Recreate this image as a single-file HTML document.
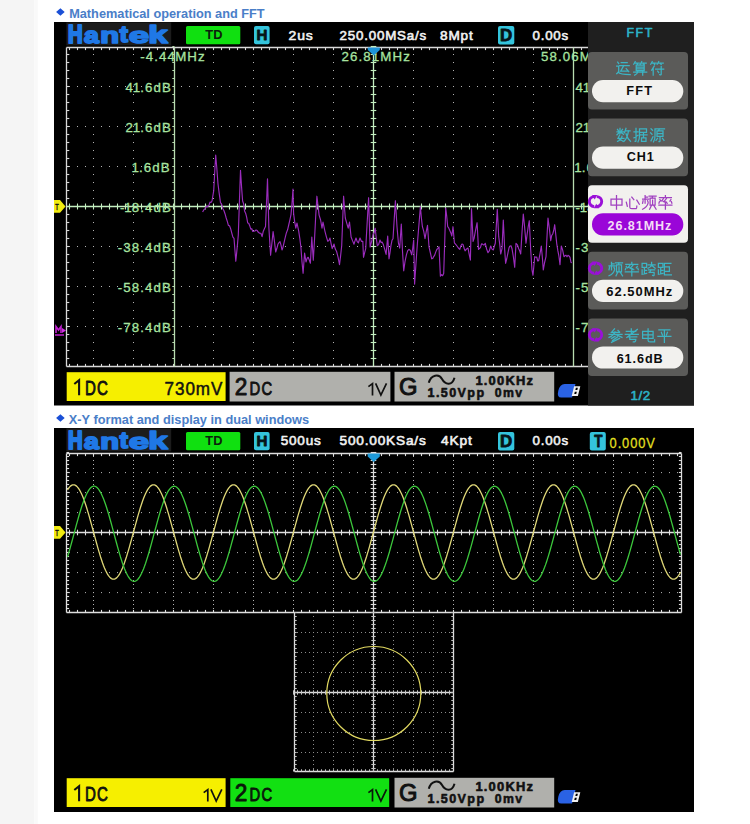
<!DOCTYPE html>
<html><head><meta charset="utf-8"><style>
html,body{margin:0;padding:0;background:#fff;width:750px;height:824px;overflow:hidden;position:relative;font-family:"Liberation Sans",sans-serif;}
</style></head><body>
<svg width="750" height="824" viewBox="0 0 750 824" style="position:absolute;left:0;top:0"><rect x="0.00" y="0.00" width="34.50" height="824.00" fill="#f5f5f5" />
<rect x="34.50" y="0.00" width="3.30" height="824.00" fill="#f9f9f9" />
<path d="M56.10 12.00 L60.40 8.20 L64.70 12.00 L60.40 15.80Z" fill="#1a4fd6"/>
<text x="0" y="0" transform="translate(69.15 17.90) scale(0.9340 1)" fill="#4a7ec8" style="font-family:'Liberation Sans';font-size:13.66px;font-weight:bold;" >Mathematical operation and FFT</text>
<path d="M56.10 418.00 L60.40 414.20 L64.70 418.00 L60.40 421.80Z" fill="#1a4fd6"/>
<text x="0" y="0" transform="translate(68.79 423.90) scale(0.9354 1)" fill="#4a7ec8" style="font-family:'Liberation Sans';font-size:13.66px;font-weight:bold;" >X-Y format and display in dual windows</text>
<rect x="54.00" y="22.00" width="640.00" height="383.50" fill="#000" />
<rect x="66.40" y="22.40" width="104.80" height="23.00" fill="#1c1c1c" />
<text x="0" y="0" transform="translate(68.05 42.50) scale(0.2024 0.2486)" fill="#1f78e6" style="font-family:'Liberation Sans';font-size:100.0px;font-weight:bold" stroke="#1f78e6" stroke-width="8.870" stroke-linejoin="round">H</text>
<text x="0" y="0" transform="translate(84.02 42.58) scale(0.2663 0.2282)" fill="#1f78e6" style="font-family:'Liberation Sans';font-size:100.0px;font-weight:bold" stroke="#1f78e6" stroke-width="8.089" stroke-linejoin="round">a</text>
<text x="0" y="0" transform="translate(100.37 42.50) scale(0.3085 0.2228)" fill="#1f78e6" style="font-family:'Liberation Sans';font-size:100.0px;font-weight:bold" stroke="#1f78e6" stroke-width="7.528" stroke-linejoin="round">n</text>
<text x="0" y="0" transform="translate(119.70 42.31) scale(0.2430 0.2118)" fill="#1f78e6" style="font-family:'Liberation Sans';font-size:100.0px;font-weight:bold" stroke="#1f78e6" stroke-width="8.795" stroke-linejoin="round">t</text>
<text x="0" y="0" transform="translate(128.87 42.58) scale(0.3665 0.2282)" fill="#1f78e6" style="font-family:'Liberation Sans';font-size:100.0px;font-weight:bold" stroke="#1f78e6" stroke-width="6.726" stroke-linejoin="round">e</text>
<text x="0" y="0" transform="translate(148.36 42.50) scale(0.3489 0.2360)" fill="#1f78e6" style="font-family:'Liberation Sans';font-size:100.0px;font-weight:bold" stroke="#1f78e6" stroke-width="6.839" stroke-linejoin="round">k</text>
<rect x="186.00" y="26.00" width="54.30" height="18.30" fill="#10e010" rx="1.5" />
<text x="0" y="0" transform="translate(205.16 39.30) scale(0.9489 1)" fill="#0c200c" style="font-family:'Liberation Sans';font-size:13.52px;font-weight:bold;letter-spacing:0.3px;" >TD</text>
<rect x="254.00" y="26.00" width="15.60" height="18.20" fill="#34c4dc" rx="2" />
<text x="0" y="0" transform="translate(256.39 39.80) scale(1.0103 1)" fill="#061418" style="font-family:'Liberation Sans';font-size:14.97px;font-weight:bold;" stroke="#061418" stroke-width="0.8" stroke-linejoin="round" >H</text>
<rect x="498.00" y="26.00" width="16.30" height="18.40" fill="#34c4dc" rx="2" />
<text x="0" y="0" transform="translate(499.96 40.70) scale(0.9895 1)" fill="#061418" style="font-family:'Liberation Sans';font-size:17.15px;font-weight:bold;" stroke="#061418" stroke-width="0.8" stroke-linejoin="round" >D</text>
<text x="0" y="0" transform="translate(288.60 39.55) scale(1.0239 1)" fill="#f2f2f2" style="font-family:'Liberation Sans';font-size:13.66px;font-weight:normal;letter-spacing:0.8px;" stroke="#f2f2f2" stroke-width="0.6" stroke-linejoin="round" >2us</text>
<text x="0" y="0" transform="translate(339.62 39.55) scale(0.9781 1)" fill="#f2f2f2" style="font-family:'Liberation Sans';font-size:13.66px;font-weight:normal;letter-spacing:0.8px;" stroke="#f2f2f2" stroke-width="0.6" stroke-linejoin="round" >250.00MSa/s</text>
<text x="0" y="0" transform="translate(440.11 39.55) scale(0.9975 1)" fill="#f2f2f2" style="font-family:'Liberation Sans';font-size:13.66px;font-weight:normal;letter-spacing:0.8px;" stroke="#f2f2f2" stroke-width="0.6" stroke-linejoin="round" >8Mpt</text>
<text x="0" y="0" transform="translate(532.47 39.55) scale(0.9752 1)" fill="#f2f2f2" style="font-family:'Liberation Sans';font-size:13.66px;font-weight:normal;letter-spacing:0.8px;" stroke="#f2f2f2" stroke-width="0.6" stroke-linejoin="round" >0.00s</text>
<rect x="69.00" y="86.00" width="1.00" height="1.00" fill="#b4b4b4" />
<rect x="77.00" y="86.00" width="1.00" height="1.00" fill="#b4b4b4" />
<rect x="85.00" y="86.00" width="1.00" height="1.00" fill="#b4b4b4" />
<rect x="93.00" y="86.00" width="1.00" height="1.00" fill="#b4b4b4" />
<rect x="101.00" y="86.00" width="1.00" height="1.00" fill="#b4b4b4" />
<rect x="109.00" y="86.00" width="1.00" height="1.00" fill="#b4b4b4" />
<rect x="117.00" y="86.00" width="1.00" height="1.00" fill="#b4b4b4" />
<rect x="125.00" y="86.00" width="1.00" height="1.00" fill="#b4b4b4" />
<rect x="133.00" y="86.00" width="1.00" height="1.00" fill="#b4b4b4" />
<rect x="141.00" y="86.00" width="1.00" height="1.00" fill="#b4b4b4" />
<rect x="149.00" y="86.00" width="1.00" height="1.00" fill="#b4b4b4" />
<rect x="157.00" y="86.00" width="1.00" height="1.00" fill="#b4b4b4" />
<rect x="165.00" y="86.00" width="1.00" height="1.00" fill="#b4b4b4" />
<rect x="173.00" y="86.00" width="1.00" height="1.00" fill="#b4b4b4" />
<rect x="181.00" y="86.00" width="1.00" height="1.00" fill="#b4b4b4" />
<rect x="189.00" y="86.00" width="1.00" height="1.00" fill="#b4b4b4" />
<rect x="197.00" y="86.00" width="1.00" height="1.00" fill="#b4b4b4" />
<rect x="205.00" y="86.00" width="1.00" height="1.00" fill="#b4b4b4" />
<rect x="213.00" y="86.00" width="1.00" height="1.00" fill="#b4b4b4" />
<rect x="221.00" y="86.00" width="1.00" height="1.00" fill="#b4b4b4" />
<rect x="229.00" y="86.00" width="1.00" height="1.00" fill="#b4b4b4" />
<rect x="237.00" y="86.00" width="1.00" height="1.00" fill="#b4b4b4" />
<rect x="245.00" y="86.00" width="1.00" height="1.00" fill="#b4b4b4" />
<rect x="253.00" y="86.00" width="1.00" height="1.00" fill="#b4b4b4" />
<rect x="261.00" y="86.00" width="1.00" height="1.00" fill="#b4b4b4" />
<rect x="269.00" y="86.00" width="1.00" height="1.00" fill="#b4b4b4" />
<rect x="277.00" y="86.00" width="1.00" height="1.00" fill="#b4b4b4" />
<rect x="285.00" y="86.00" width="1.00" height="1.00" fill="#b4b4b4" />
<rect x="293.00" y="86.00" width="1.00" height="1.00" fill="#b4b4b4" />
<rect x="301.00" y="86.00" width="1.00" height="1.00" fill="#b4b4b4" />
<rect x="309.00" y="86.00" width="1.00" height="1.00" fill="#b4b4b4" />
<rect x="317.00" y="86.00" width="1.00" height="1.00" fill="#b4b4b4" />
<rect x="325.00" y="86.00" width="1.00" height="1.00" fill="#b4b4b4" />
<rect x="333.00" y="86.00" width="1.00" height="1.00" fill="#b4b4b4" />
<rect x="341.00" y="86.00" width="1.00" height="1.00" fill="#b4b4b4" />
<rect x="349.00" y="86.00" width="1.00" height="1.00" fill="#b4b4b4" />
<rect x="357.00" y="86.00" width="1.00" height="1.00" fill="#b4b4b4" />
<rect x="365.00" y="86.00" width="1.00" height="1.00" fill="#b4b4b4" />
<rect x="373.00" y="86.00" width="1.00" height="1.00" fill="#b4b4b4" />
<rect x="381.00" y="86.00" width="1.00" height="1.00" fill="#b4b4b4" />
<rect x="389.00" y="86.00" width="1.00" height="1.00" fill="#b4b4b4" />
<rect x="397.00" y="86.00" width="1.00" height="1.00" fill="#b4b4b4" />
<rect x="405.00" y="86.00" width="1.00" height="1.00" fill="#b4b4b4" />
<rect x="413.00" y="86.00" width="1.00" height="1.00" fill="#b4b4b4" />
<rect x="421.00" y="86.00" width="1.00" height="1.00" fill="#b4b4b4" />
<rect x="429.00" y="86.00" width="1.00" height="1.00" fill="#b4b4b4" />
<rect x="437.00" y="86.00" width="1.00" height="1.00" fill="#b4b4b4" />
<rect x="445.00" y="86.00" width="1.00" height="1.00" fill="#b4b4b4" />
<rect x="453.00" y="86.00" width="1.00" height="1.00" fill="#b4b4b4" />
<rect x="461.00" y="86.00" width="1.00" height="1.00" fill="#b4b4b4" />
<rect x="469.00" y="86.00" width="1.00" height="1.00" fill="#b4b4b4" />
<rect x="477.00" y="86.00" width="1.00" height="1.00" fill="#b4b4b4" />
<rect x="485.00" y="86.00" width="1.00" height="1.00" fill="#b4b4b4" />
<rect x="493.00" y="86.00" width="1.00" height="1.00" fill="#b4b4b4" />
<rect x="501.00" y="86.00" width="1.00" height="1.00" fill="#b4b4b4" />
<rect x="509.00" y="86.00" width="1.00" height="1.00" fill="#b4b4b4" />
<rect x="517.00" y="86.00" width="1.00" height="1.00" fill="#b4b4b4" />
<rect x="525.00" y="86.00" width="1.00" height="1.00" fill="#b4b4b4" />
<rect x="533.00" y="86.00" width="1.00" height="1.00" fill="#b4b4b4" />
<rect x="541.00" y="86.00" width="1.00" height="1.00" fill="#b4b4b4" />
<rect x="549.00" y="86.00" width="1.00" height="1.00" fill="#b4b4b4" />
<rect x="557.00" y="86.00" width="1.00" height="1.00" fill="#b4b4b4" />
<rect x="565.00" y="86.00" width="1.00" height="1.00" fill="#b4b4b4" />
<rect x="69.00" y="126.00" width="1.00" height="1.00" fill="#b4b4b4" />
<rect x="77.00" y="126.00" width="1.00" height="1.00" fill="#b4b4b4" />
<rect x="85.00" y="126.00" width="1.00" height="1.00" fill="#b4b4b4" />
<rect x="93.00" y="126.00" width="1.00" height="1.00" fill="#b4b4b4" />
<rect x="101.00" y="126.00" width="1.00" height="1.00" fill="#b4b4b4" />
<rect x="109.00" y="126.00" width="1.00" height="1.00" fill="#b4b4b4" />
<rect x="117.00" y="126.00" width="1.00" height="1.00" fill="#b4b4b4" />
<rect x="125.00" y="126.00" width="1.00" height="1.00" fill="#b4b4b4" />
<rect x="133.00" y="126.00" width="1.00" height="1.00" fill="#b4b4b4" />
<rect x="141.00" y="126.00" width="1.00" height="1.00" fill="#b4b4b4" />
<rect x="149.00" y="126.00" width="1.00" height="1.00" fill="#b4b4b4" />
<rect x="157.00" y="126.00" width="1.00" height="1.00" fill="#b4b4b4" />
<rect x="165.00" y="126.00" width="1.00" height="1.00" fill="#b4b4b4" />
<rect x="173.00" y="126.00" width="1.00" height="1.00" fill="#b4b4b4" />
<rect x="181.00" y="126.00" width="1.00" height="1.00" fill="#b4b4b4" />
<rect x="189.00" y="126.00" width="1.00" height="1.00" fill="#b4b4b4" />
<rect x="197.00" y="126.00" width="1.00" height="1.00" fill="#b4b4b4" />
<rect x="205.00" y="126.00" width="1.00" height="1.00" fill="#b4b4b4" />
<rect x="213.00" y="126.00" width="1.00" height="1.00" fill="#b4b4b4" />
<rect x="221.00" y="126.00" width="1.00" height="1.00" fill="#b4b4b4" />
<rect x="229.00" y="126.00" width="1.00" height="1.00" fill="#b4b4b4" />
<rect x="237.00" y="126.00" width="1.00" height="1.00" fill="#b4b4b4" />
<rect x="245.00" y="126.00" width="1.00" height="1.00" fill="#b4b4b4" />
<rect x="253.00" y="126.00" width="1.00" height="1.00" fill="#b4b4b4" />
<rect x="261.00" y="126.00" width="1.00" height="1.00" fill="#b4b4b4" />
<rect x="269.00" y="126.00" width="1.00" height="1.00" fill="#b4b4b4" />
<rect x="277.00" y="126.00" width="1.00" height="1.00" fill="#b4b4b4" />
<rect x="285.00" y="126.00" width="1.00" height="1.00" fill="#b4b4b4" />
<rect x="293.00" y="126.00" width="1.00" height="1.00" fill="#b4b4b4" />
<rect x="301.00" y="126.00" width="1.00" height="1.00" fill="#b4b4b4" />
<rect x="309.00" y="126.00" width="1.00" height="1.00" fill="#b4b4b4" />
<rect x="317.00" y="126.00" width="1.00" height="1.00" fill="#b4b4b4" />
<rect x="325.00" y="126.00" width="1.00" height="1.00" fill="#b4b4b4" />
<rect x="333.00" y="126.00" width="1.00" height="1.00" fill="#b4b4b4" />
<rect x="341.00" y="126.00" width="1.00" height="1.00" fill="#b4b4b4" />
<rect x="349.00" y="126.00" width="1.00" height="1.00" fill="#b4b4b4" />
<rect x="357.00" y="126.00" width="1.00" height="1.00" fill="#b4b4b4" />
<rect x="365.00" y="126.00" width="1.00" height="1.00" fill="#b4b4b4" />
<rect x="373.00" y="126.00" width="1.00" height="1.00" fill="#b4b4b4" />
<rect x="381.00" y="126.00" width="1.00" height="1.00" fill="#b4b4b4" />
<rect x="389.00" y="126.00" width="1.00" height="1.00" fill="#b4b4b4" />
<rect x="397.00" y="126.00" width="1.00" height="1.00" fill="#b4b4b4" />
<rect x="405.00" y="126.00" width="1.00" height="1.00" fill="#b4b4b4" />
<rect x="413.00" y="126.00" width="1.00" height="1.00" fill="#b4b4b4" />
<rect x="421.00" y="126.00" width="1.00" height="1.00" fill="#b4b4b4" />
<rect x="429.00" y="126.00" width="1.00" height="1.00" fill="#b4b4b4" />
<rect x="437.00" y="126.00" width="1.00" height="1.00" fill="#b4b4b4" />
<rect x="445.00" y="126.00" width="1.00" height="1.00" fill="#b4b4b4" />
<rect x="453.00" y="126.00" width="1.00" height="1.00" fill="#b4b4b4" />
<rect x="461.00" y="126.00" width="1.00" height="1.00" fill="#b4b4b4" />
<rect x="469.00" y="126.00" width="1.00" height="1.00" fill="#b4b4b4" />
<rect x="477.00" y="126.00" width="1.00" height="1.00" fill="#b4b4b4" />
<rect x="485.00" y="126.00" width="1.00" height="1.00" fill="#b4b4b4" />
<rect x="493.00" y="126.00" width="1.00" height="1.00" fill="#b4b4b4" />
<rect x="501.00" y="126.00" width="1.00" height="1.00" fill="#b4b4b4" />
<rect x="509.00" y="126.00" width="1.00" height="1.00" fill="#b4b4b4" />
<rect x="517.00" y="126.00" width="1.00" height="1.00" fill="#b4b4b4" />
<rect x="525.00" y="126.00" width="1.00" height="1.00" fill="#b4b4b4" />
<rect x="533.00" y="126.00" width="1.00" height="1.00" fill="#b4b4b4" />
<rect x="541.00" y="126.00" width="1.00" height="1.00" fill="#b4b4b4" />
<rect x="549.00" y="126.00" width="1.00" height="1.00" fill="#b4b4b4" />
<rect x="557.00" y="126.00" width="1.00" height="1.00" fill="#b4b4b4" />
<rect x="565.00" y="126.00" width="1.00" height="1.00" fill="#b4b4b4" />
<rect x="69.00" y="166.00" width="1.00" height="1.00" fill="#b4b4b4" />
<rect x="77.00" y="166.00" width="1.00" height="1.00" fill="#b4b4b4" />
<rect x="85.00" y="166.00" width="1.00" height="1.00" fill="#b4b4b4" />
<rect x="93.00" y="166.00" width="1.00" height="1.00" fill="#b4b4b4" />
<rect x="101.00" y="166.00" width="1.00" height="1.00" fill="#b4b4b4" />
<rect x="109.00" y="166.00" width="1.00" height="1.00" fill="#b4b4b4" />
<rect x="117.00" y="166.00" width="1.00" height="1.00" fill="#b4b4b4" />
<rect x="125.00" y="166.00" width="1.00" height="1.00" fill="#b4b4b4" />
<rect x="133.00" y="166.00" width="1.00" height="1.00" fill="#b4b4b4" />
<rect x="141.00" y="166.00" width="1.00" height="1.00" fill="#b4b4b4" />
<rect x="149.00" y="166.00" width="1.00" height="1.00" fill="#b4b4b4" />
<rect x="157.00" y="166.00" width="1.00" height="1.00" fill="#b4b4b4" />
<rect x="165.00" y="166.00" width="1.00" height="1.00" fill="#b4b4b4" />
<rect x="173.00" y="166.00" width="1.00" height="1.00" fill="#b4b4b4" />
<rect x="181.00" y="166.00" width="1.00" height="1.00" fill="#b4b4b4" />
<rect x="189.00" y="166.00" width="1.00" height="1.00" fill="#b4b4b4" />
<rect x="197.00" y="166.00" width="1.00" height="1.00" fill="#b4b4b4" />
<rect x="205.00" y="166.00" width="1.00" height="1.00" fill="#b4b4b4" />
<rect x="213.00" y="166.00" width="1.00" height="1.00" fill="#b4b4b4" />
<rect x="221.00" y="166.00" width="1.00" height="1.00" fill="#b4b4b4" />
<rect x="229.00" y="166.00" width="1.00" height="1.00" fill="#b4b4b4" />
<rect x="237.00" y="166.00" width="1.00" height="1.00" fill="#b4b4b4" />
<rect x="245.00" y="166.00" width="1.00" height="1.00" fill="#b4b4b4" />
<rect x="253.00" y="166.00" width="1.00" height="1.00" fill="#b4b4b4" />
<rect x="261.00" y="166.00" width="1.00" height="1.00" fill="#b4b4b4" />
<rect x="269.00" y="166.00" width="1.00" height="1.00" fill="#b4b4b4" />
<rect x="277.00" y="166.00" width="1.00" height="1.00" fill="#b4b4b4" />
<rect x="285.00" y="166.00" width="1.00" height="1.00" fill="#b4b4b4" />
<rect x="293.00" y="166.00" width="1.00" height="1.00" fill="#b4b4b4" />
<rect x="301.00" y="166.00" width="1.00" height="1.00" fill="#b4b4b4" />
<rect x="309.00" y="166.00" width="1.00" height="1.00" fill="#b4b4b4" />
<rect x="317.00" y="166.00" width="1.00" height="1.00" fill="#b4b4b4" />
<rect x="325.00" y="166.00" width="1.00" height="1.00" fill="#b4b4b4" />
<rect x="333.00" y="166.00" width="1.00" height="1.00" fill="#b4b4b4" />
<rect x="341.00" y="166.00" width="1.00" height="1.00" fill="#b4b4b4" />
<rect x="349.00" y="166.00" width="1.00" height="1.00" fill="#b4b4b4" />
<rect x="357.00" y="166.00" width="1.00" height="1.00" fill="#b4b4b4" />
<rect x="365.00" y="166.00" width="1.00" height="1.00" fill="#b4b4b4" />
<rect x="373.00" y="166.00" width="1.00" height="1.00" fill="#b4b4b4" />
<rect x="381.00" y="166.00" width="1.00" height="1.00" fill="#b4b4b4" />
<rect x="389.00" y="166.00" width="1.00" height="1.00" fill="#b4b4b4" />
<rect x="397.00" y="166.00" width="1.00" height="1.00" fill="#b4b4b4" />
<rect x="405.00" y="166.00" width="1.00" height="1.00" fill="#b4b4b4" />
<rect x="413.00" y="166.00" width="1.00" height="1.00" fill="#b4b4b4" />
<rect x="421.00" y="166.00" width="1.00" height="1.00" fill="#b4b4b4" />
<rect x="429.00" y="166.00" width="1.00" height="1.00" fill="#b4b4b4" />
<rect x="437.00" y="166.00" width="1.00" height="1.00" fill="#b4b4b4" />
<rect x="445.00" y="166.00" width="1.00" height="1.00" fill="#b4b4b4" />
<rect x="453.00" y="166.00" width="1.00" height="1.00" fill="#b4b4b4" />
<rect x="461.00" y="166.00" width="1.00" height="1.00" fill="#b4b4b4" />
<rect x="469.00" y="166.00" width="1.00" height="1.00" fill="#b4b4b4" />
<rect x="477.00" y="166.00" width="1.00" height="1.00" fill="#b4b4b4" />
<rect x="485.00" y="166.00" width="1.00" height="1.00" fill="#b4b4b4" />
<rect x="493.00" y="166.00" width="1.00" height="1.00" fill="#b4b4b4" />
<rect x="501.00" y="166.00" width="1.00" height="1.00" fill="#b4b4b4" />
<rect x="509.00" y="166.00" width="1.00" height="1.00" fill="#b4b4b4" />
<rect x="517.00" y="166.00" width="1.00" height="1.00" fill="#b4b4b4" />
<rect x="525.00" y="166.00" width="1.00" height="1.00" fill="#b4b4b4" />
<rect x="533.00" y="166.00" width="1.00" height="1.00" fill="#b4b4b4" />
<rect x="541.00" y="166.00" width="1.00" height="1.00" fill="#b4b4b4" />
<rect x="549.00" y="166.00" width="1.00" height="1.00" fill="#b4b4b4" />
<rect x="557.00" y="166.00" width="1.00" height="1.00" fill="#b4b4b4" />
<rect x="565.00" y="166.00" width="1.00" height="1.00" fill="#b4b4b4" />
<rect x="69.00" y="246.00" width="1.00" height="1.00" fill="#b4b4b4" />
<rect x="77.00" y="246.00" width="1.00" height="1.00" fill="#b4b4b4" />
<rect x="85.00" y="246.00" width="1.00" height="1.00" fill="#b4b4b4" />
<rect x="93.00" y="246.00" width="1.00" height="1.00" fill="#b4b4b4" />
<rect x="101.00" y="246.00" width="1.00" height="1.00" fill="#b4b4b4" />
<rect x="109.00" y="246.00" width="1.00" height="1.00" fill="#b4b4b4" />
<rect x="117.00" y="246.00" width="1.00" height="1.00" fill="#b4b4b4" />
<rect x="125.00" y="246.00" width="1.00" height="1.00" fill="#b4b4b4" />
<rect x="133.00" y="246.00" width="1.00" height="1.00" fill="#b4b4b4" />
<rect x="141.00" y="246.00" width="1.00" height="1.00" fill="#b4b4b4" />
<rect x="149.00" y="246.00" width="1.00" height="1.00" fill="#b4b4b4" />
<rect x="157.00" y="246.00" width="1.00" height="1.00" fill="#b4b4b4" />
<rect x="165.00" y="246.00" width="1.00" height="1.00" fill="#b4b4b4" />
<rect x="173.00" y="246.00" width="1.00" height="1.00" fill="#b4b4b4" />
<rect x="181.00" y="246.00" width="1.00" height="1.00" fill="#b4b4b4" />
<rect x="189.00" y="246.00" width="1.00" height="1.00" fill="#b4b4b4" />
<rect x="197.00" y="246.00" width="1.00" height="1.00" fill="#b4b4b4" />
<rect x="205.00" y="246.00" width="1.00" height="1.00" fill="#b4b4b4" />
<rect x="213.00" y="246.00" width="1.00" height="1.00" fill="#b4b4b4" />
<rect x="221.00" y="246.00" width="1.00" height="1.00" fill="#b4b4b4" />
<rect x="229.00" y="246.00" width="1.00" height="1.00" fill="#b4b4b4" />
<rect x="237.00" y="246.00" width="1.00" height="1.00" fill="#b4b4b4" />
<rect x="245.00" y="246.00" width="1.00" height="1.00" fill="#b4b4b4" />
<rect x="253.00" y="246.00" width="1.00" height="1.00" fill="#b4b4b4" />
<rect x="261.00" y="246.00" width="1.00" height="1.00" fill="#b4b4b4" />
<rect x="269.00" y="246.00" width="1.00" height="1.00" fill="#b4b4b4" />
<rect x="277.00" y="246.00" width="1.00" height="1.00" fill="#b4b4b4" />
<rect x="285.00" y="246.00" width="1.00" height="1.00" fill="#b4b4b4" />
<rect x="293.00" y="246.00" width="1.00" height="1.00" fill="#b4b4b4" />
<rect x="301.00" y="246.00" width="1.00" height="1.00" fill="#b4b4b4" />
<rect x="309.00" y="246.00" width="1.00" height="1.00" fill="#b4b4b4" />
<rect x="317.00" y="246.00" width="1.00" height="1.00" fill="#b4b4b4" />
<rect x="325.00" y="246.00" width="1.00" height="1.00" fill="#b4b4b4" />
<rect x="333.00" y="246.00" width="1.00" height="1.00" fill="#b4b4b4" />
<rect x="341.00" y="246.00" width="1.00" height="1.00" fill="#b4b4b4" />
<rect x="349.00" y="246.00" width="1.00" height="1.00" fill="#b4b4b4" />
<rect x="357.00" y="246.00" width="1.00" height="1.00" fill="#b4b4b4" />
<rect x="365.00" y="246.00" width="1.00" height="1.00" fill="#b4b4b4" />
<rect x="373.00" y="246.00" width="1.00" height="1.00" fill="#b4b4b4" />
<rect x="381.00" y="246.00" width="1.00" height="1.00" fill="#b4b4b4" />
<rect x="389.00" y="246.00" width="1.00" height="1.00" fill="#b4b4b4" />
<rect x="397.00" y="246.00" width="1.00" height="1.00" fill="#b4b4b4" />
<rect x="405.00" y="246.00" width="1.00" height="1.00" fill="#b4b4b4" />
<rect x="413.00" y="246.00" width="1.00" height="1.00" fill="#b4b4b4" />
<rect x="421.00" y="246.00" width="1.00" height="1.00" fill="#b4b4b4" />
<rect x="429.00" y="246.00" width="1.00" height="1.00" fill="#b4b4b4" />
<rect x="437.00" y="246.00" width="1.00" height="1.00" fill="#b4b4b4" />
<rect x="445.00" y="246.00" width="1.00" height="1.00" fill="#b4b4b4" />
<rect x="453.00" y="246.00" width="1.00" height="1.00" fill="#b4b4b4" />
<rect x="461.00" y="246.00" width="1.00" height="1.00" fill="#b4b4b4" />
<rect x="469.00" y="246.00" width="1.00" height="1.00" fill="#b4b4b4" />
<rect x="477.00" y="246.00" width="1.00" height="1.00" fill="#b4b4b4" />
<rect x="485.00" y="246.00" width="1.00" height="1.00" fill="#b4b4b4" />
<rect x="493.00" y="246.00" width="1.00" height="1.00" fill="#b4b4b4" />
<rect x="501.00" y="246.00" width="1.00" height="1.00" fill="#b4b4b4" />
<rect x="509.00" y="246.00" width="1.00" height="1.00" fill="#b4b4b4" />
<rect x="517.00" y="246.00" width="1.00" height="1.00" fill="#b4b4b4" />
<rect x="525.00" y="246.00" width="1.00" height="1.00" fill="#b4b4b4" />
<rect x="533.00" y="246.00" width="1.00" height="1.00" fill="#b4b4b4" />
<rect x="541.00" y="246.00" width="1.00" height="1.00" fill="#b4b4b4" />
<rect x="549.00" y="246.00" width="1.00" height="1.00" fill="#b4b4b4" />
<rect x="557.00" y="246.00" width="1.00" height="1.00" fill="#b4b4b4" />
<rect x="565.00" y="246.00" width="1.00" height="1.00" fill="#b4b4b4" />
<rect x="69.00" y="286.00" width="1.00" height="1.00" fill="#b4b4b4" />
<rect x="77.00" y="286.00" width="1.00" height="1.00" fill="#b4b4b4" />
<rect x="85.00" y="286.00" width="1.00" height="1.00" fill="#b4b4b4" />
<rect x="93.00" y="286.00" width="1.00" height="1.00" fill="#b4b4b4" />
<rect x="101.00" y="286.00" width="1.00" height="1.00" fill="#b4b4b4" />
<rect x="109.00" y="286.00" width="1.00" height="1.00" fill="#b4b4b4" />
<rect x="117.00" y="286.00" width="1.00" height="1.00" fill="#b4b4b4" />
<rect x="125.00" y="286.00" width="1.00" height="1.00" fill="#b4b4b4" />
<rect x="133.00" y="286.00" width="1.00" height="1.00" fill="#b4b4b4" />
<rect x="141.00" y="286.00" width="1.00" height="1.00" fill="#b4b4b4" />
<rect x="149.00" y="286.00" width="1.00" height="1.00" fill="#b4b4b4" />
<rect x="157.00" y="286.00" width="1.00" height="1.00" fill="#b4b4b4" />
<rect x="165.00" y="286.00" width="1.00" height="1.00" fill="#b4b4b4" />
<rect x="173.00" y="286.00" width="1.00" height="1.00" fill="#b4b4b4" />
<rect x="181.00" y="286.00" width="1.00" height="1.00" fill="#b4b4b4" />
<rect x="189.00" y="286.00" width="1.00" height="1.00" fill="#b4b4b4" />
<rect x="197.00" y="286.00" width="1.00" height="1.00" fill="#b4b4b4" />
<rect x="205.00" y="286.00" width="1.00" height="1.00" fill="#b4b4b4" />
<rect x="213.00" y="286.00" width="1.00" height="1.00" fill="#b4b4b4" />
<rect x="221.00" y="286.00" width="1.00" height="1.00" fill="#b4b4b4" />
<rect x="229.00" y="286.00" width="1.00" height="1.00" fill="#b4b4b4" />
<rect x="237.00" y="286.00" width="1.00" height="1.00" fill="#b4b4b4" />
<rect x="245.00" y="286.00" width="1.00" height="1.00" fill="#b4b4b4" />
<rect x="253.00" y="286.00" width="1.00" height="1.00" fill="#b4b4b4" />
<rect x="261.00" y="286.00" width="1.00" height="1.00" fill="#b4b4b4" />
<rect x="269.00" y="286.00" width="1.00" height="1.00" fill="#b4b4b4" />
<rect x="277.00" y="286.00" width="1.00" height="1.00" fill="#b4b4b4" />
<rect x="285.00" y="286.00" width="1.00" height="1.00" fill="#b4b4b4" />
<rect x="293.00" y="286.00" width="1.00" height="1.00" fill="#b4b4b4" />
<rect x="301.00" y="286.00" width="1.00" height="1.00" fill="#b4b4b4" />
<rect x="309.00" y="286.00" width="1.00" height="1.00" fill="#b4b4b4" />
<rect x="317.00" y="286.00" width="1.00" height="1.00" fill="#b4b4b4" />
<rect x="325.00" y="286.00" width="1.00" height="1.00" fill="#b4b4b4" />
<rect x="333.00" y="286.00" width="1.00" height="1.00" fill="#b4b4b4" />
<rect x="341.00" y="286.00" width="1.00" height="1.00" fill="#b4b4b4" />
<rect x="349.00" y="286.00" width="1.00" height="1.00" fill="#b4b4b4" />
<rect x="357.00" y="286.00" width="1.00" height="1.00" fill="#b4b4b4" />
<rect x="365.00" y="286.00" width="1.00" height="1.00" fill="#b4b4b4" />
<rect x="373.00" y="286.00" width="1.00" height="1.00" fill="#b4b4b4" />
<rect x="381.00" y="286.00" width="1.00" height="1.00" fill="#b4b4b4" />
<rect x="389.00" y="286.00" width="1.00" height="1.00" fill="#b4b4b4" />
<rect x="397.00" y="286.00" width="1.00" height="1.00" fill="#b4b4b4" />
<rect x="405.00" y="286.00" width="1.00" height="1.00" fill="#b4b4b4" />
<rect x="413.00" y="286.00" width="1.00" height="1.00" fill="#b4b4b4" />
<rect x="421.00" y="286.00" width="1.00" height="1.00" fill="#b4b4b4" />
<rect x="429.00" y="286.00" width="1.00" height="1.00" fill="#b4b4b4" />
<rect x="437.00" y="286.00" width="1.00" height="1.00" fill="#b4b4b4" />
<rect x="445.00" y="286.00" width="1.00" height="1.00" fill="#b4b4b4" />
<rect x="453.00" y="286.00" width="1.00" height="1.00" fill="#b4b4b4" />
<rect x="461.00" y="286.00" width="1.00" height="1.00" fill="#b4b4b4" />
<rect x="469.00" y="286.00" width="1.00" height="1.00" fill="#b4b4b4" />
<rect x="477.00" y="286.00" width="1.00" height="1.00" fill="#b4b4b4" />
<rect x="485.00" y="286.00" width="1.00" height="1.00" fill="#b4b4b4" />
<rect x="493.00" y="286.00" width="1.00" height="1.00" fill="#b4b4b4" />
<rect x="501.00" y="286.00" width="1.00" height="1.00" fill="#b4b4b4" />
<rect x="509.00" y="286.00" width="1.00" height="1.00" fill="#b4b4b4" />
<rect x="517.00" y="286.00" width="1.00" height="1.00" fill="#b4b4b4" />
<rect x="525.00" y="286.00" width="1.00" height="1.00" fill="#b4b4b4" />
<rect x="533.00" y="286.00" width="1.00" height="1.00" fill="#b4b4b4" />
<rect x="541.00" y="286.00" width="1.00" height="1.00" fill="#b4b4b4" />
<rect x="549.00" y="286.00" width="1.00" height="1.00" fill="#b4b4b4" />
<rect x="557.00" y="286.00" width="1.00" height="1.00" fill="#b4b4b4" />
<rect x="565.00" y="286.00" width="1.00" height="1.00" fill="#b4b4b4" />
<rect x="69.00" y="326.00" width="1.00" height="1.00" fill="#b4b4b4" />
<rect x="77.00" y="326.00" width="1.00" height="1.00" fill="#b4b4b4" />
<rect x="85.00" y="326.00" width="1.00" height="1.00" fill="#b4b4b4" />
<rect x="93.00" y="326.00" width="1.00" height="1.00" fill="#b4b4b4" />
<rect x="101.00" y="326.00" width="1.00" height="1.00" fill="#b4b4b4" />
<rect x="109.00" y="326.00" width="1.00" height="1.00" fill="#b4b4b4" />
<rect x="117.00" y="326.00" width="1.00" height="1.00" fill="#b4b4b4" />
<rect x="125.00" y="326.00" width="1.00" height="1.00" fill="#b4b4b4" />
<rect x="133.00" y="326.00" width="1.00" height="1.00" fill="#b4b4b4" />
<rect x="141.00" y="326.00" width="1.00" height="1.00" fill="#b4b4b4" />
<rect x="149.00" y="326.00" width="1.00" height="1.00" fill="#b4b4b4" />
<rect x="157.00" y="326.00" width="1.00" height="1.00" fill="#b4b4b4" />
<rect x="165.00" y="326.00" width="1.00" height="1.00" fill="#b4b4b4" />
<rect x="173.00" y="326.00" width="1.00" height="1.00" fill="#b4b4b4" />
<rect x="181.00" y="326.00" width="1.00" height="1.00" fill="#b4b4b4" />
<rect x="189.00" y="326.00" width="1.00" height="1.00" fill="#b4b4b4" />
<rect x="197.00" y="326.00" width="1.00" height="1.00" fill="#b4b4b4" />
<rect x="205.00" y="326.00" width="1.00" height="1.00" fill="#b4b4b4" />
<rect x="213.00" y="326.00" width="1.00" height="1.00" fill="#b4b4b4" />
<rect x="221.00" y="326.00" width="1.00" height="1.00" fill="#b4b4b4" />
<rect x="229.00" y="326.00" width="1.00" height="1.00" fill="#b4b4b4" />
<rect x="237.00" y="326.00" width="1.00" height="1.00" fill="#b4b4b4" />
<rect x="245.00" y="326.00" width="1.00" height="1.00" fill="#b4b4b4" />
<rect x="253.00" y="326.00" width="1.00" height="1.00" fill="#b4b4b4" />
<rect x="261.00" y="326.00" width="1.00" height="1.00" fill="#b4b4b4" />
<rect x="269.00" y="326.00" width="1.00" height="1.00" fill="#b4b4b4" />
<rect x="277.00" y="326.00" width="1.00" height="1.00" fill="#b4b4b4" />
<rect x="285.00" y="326.00" width="1.00" height="1.00" fill="#b4b4b4" />
<rect x="293.00" y="326.00" width="1.00" height="1.00" fill="#b4b4b4" />
<rect x="301.00" y="326.00" width="1.00" height="1.00" fill="#b4b4b4" />
<rect x="309.00" y="326.00" width="1.00" height="1.00" fill="#b4b4b4" />
<rect x="317.00" y="326.00" width="1.00" height="1.00" fill="#b4b4b4" />
<rect x="325.00" y="326.00" width="1.00" height="1.00" fill="#b4b4b4" />
<rect x="333.00" y="326.00" width="1.00" height="1.00" fill="#b4b4b4" />
<rect x="341.00" y="326.00" width="1.00" height="1.00" fill="#b4b4b4" />
<rect x="349.00" y="326.00" width="1.00" height="1.00" fill="#b4b4b4" />
<rect x="357.00" y="326.00" width="1.00" height="1.00" fill="#b4b4b4" />
<rect x="365.00" y="326.00" width="1.00" height="1.00" fill="#b4b4b4" />
<rect x="373.00" y="326.00" width="1.00" height="1.00" fill="#b4b4b4" />
<rect x="381.00" y="326.00" width="1.00" height="1.00" fill="#b4b4b4" />
<rect x="389.00" y="326.00" width="1.00" height="1.00" fill="#b4b4b4" />
<rect x="397.00" y="326.00" width="1.00" height="1.00" fill="#b4b4b4" />
<rect x="405.00" y="326.00" width="1.00" height="1.00" fill="#b4b4b4" />
<rect x="413.00" y="326.00" width="1.00" height="1.00" fill="#b4b4b4" />
<rect x="421.00" y="326.00" width="1.00" height="1.00" fill="#b4b4b4" />
<rect x="429.00" y="326.00" width="1.00" height="1.00" fill="#b4b4b4" />
<rect x="437.00" y="326.00" width="1.00" height="1.00" fill="#b4b4b4" />
<rect x="445.00" y="326.00" width="1.00" height="1.00" fill="#b4b4b4" />
<rect x="453.00" y="326.00" width="1.00" height="1.00" fill="#b4b4b4" />
<rect x="461.00" y="326.00" width="1.00" height="1.00" fill="#b4b4b4" />
<rect x="469.00" y="326.00" width="1.00" height="1.00" fill="#b4b4b4" />
<rect x="477.00" y="326.00" width="1.00" height="1.00" fill="#b4b4b4" />
<rect x="485.00" y="326.00" width="1.00" height="1.00" fill="#b4b4b4" />
<rect x="493.00" y="326.00" width="1.00" height="1.00" fill="#b4b4b4" />
<rect x="501.00" y="326.00" width="1.00" height="1.00" fill="#b4b4b4" />
<rect x="509.00" y="326.00" width="1.00" height="1.00" fill="#b4b4b4" />
<rect x="517.00" y="326.00" width="1.00" height="1.00" fill="#b4b4b4" />
<rect x="525.00" y="326.00" width="1.00" height="1.00" fill="#b4b4b4" />
<rect x="533.00" y="326.00" width="1.00" height="1.00" fill="#b4b4b4" />
<rect x="541.00" y="326.00" width="1.00" height="1.00" fill="#b4b4b4" />
<rect x="549.00" y="326.00" width="1.00" height="1.00" fill="#b4b4b4" />
<rect x="557.00" y="326.00" width="1.00" height="1.00" fill="#b4b4b4" />
<rect x="565.00" y="326.00" width="1.00" height="1.00" fill="#b4b4b4" />
<rect x="93.00" y="54.00" width="1.00" height="1.00" fill="#b4b4b4" />
<rect x="93.00" y="62.00" width="1.00" height="1.00" fill="#b4b4b4" />
<rect x="93.00" y="70.00" width="1.00" height="1.00" fill="#b4b4b4" />
<rect x="93.00" y="78.00" width="1.00" height="1.00" fill="#b4b4b4" />
<rect x="93.00" y="86.00" width="1.00" height="1.00" fill="#b4b4b4" />
<rect x="93.00" y="94.00" width="1.00" height="1.00" fill="#b4b4b4" />
<rect x="93.00" y="102.00" width="1.00" height="1.00" fill="#b4b4b4" />
<rect x="93.00" y="110.00" width="1.00" height="1.00" fill="#b4b4b4" />
<rect x="93.00" y="118.00" width="1.00" height="1.00" fill="#b4b4b4" />
<rect x="93.00" y="126.00" width="1.00" height="1.00" fill="#b4b4b4" />
<rect x="93.00" y="134.00" width="1.00" height="1.00" fill="#b4b4b4" />
<rect x="93.00" y="142.00" width="1.00" height="1.00" fill="#b4b4b4" />
<rect x="93.00" y="150.00" width="1.00" height="1.00" fill="#b4b4b4" />
<rect x="93.00" y="158.00" width="1.00" height="1.00" fill="#b4b4b4" />
<rect x="93.00" y="166.00" width="1.00" height="1.00" fill="#b4b4b4" />
<rect x="93.00" y="174.00" width="1.00" height="1.00" fill="#b4b4b4" />
<rect x="93.00" y="182.00" width="1.00" height="1.00" fill="#b4b4b4" />
<rect x="93.00" y="190.00" width="1.00" height="1.00" fill="#b4b4b4" />
<rect x="93.00" y="198.00" width="1.00" height="1.00" fill="#b4b4b4" />
<rect x="93.00" y="206.00" width="1.00" height="1.00" fill="#b4b4b4" />
<rect x="93.00" y="214.00" width="1.00" height="1.00" fill="#b4b4b4" />
<rect x="93.00" y="222.00" width="1.00" height="1.00" fill="#b4b4b4" />
<rect x="93.00" y="230.00" width="1.00" height="1.00" fill="#b4b4b4" />
<rect x="93.00" y="238.00" width="1.00" height="1.00" fill="#b4b4b4" />
<rect x="93.00" y="246.00" width="1.00" height="1.00" fill="#b4b4b4" />
<rect x="93.00" y="254.00" width="1.00" height="1.00" fill="#b4b4b4" />
<rect x="93.00" y="262.00" width="1.00" height="1.00" fill="#b4b4b4" />
<rect x="93.00" y="270.00" width="1.00" height="1.00" fill="#b4b4b4" />
<rect x="93.00" y="278.00" width="1.00" height="1.00" fill="#b4b4b4" />
<rect x="93.00" y="286.00" width="1.00" height="1.00" fill="#b4b4b4" />
<rect x="93.00" y="294.00" width="1.00" height="1.00" fill="#b4b4b4" />
<rect x="93.00" y="302.00" width="1.00" height="1.00" fill="#b4b4b4" />
<rect x="93.00" y="310.00" width="1.00" height="1.00" fill="#b4b4b4" />
<rect x="93.00" y="318.00" width="1.00" height="1.00" fill="#b4b4b4" />
<rect x="93.00" y="326.00" width="1.00" height="1.00" fill="#b4b4b4" />
<rect x="93.00" y="334.00" width="1.00" height="1.00" fill="#b4b4b4" />
<rect x="93.00" y="342.00" width="1.00" height="1.00" fill="#b4b4b4" />
<rect x="93.00" y="350.00" width="1.00" height="1.00" fill="#b4b4b4" />
<rect x="93.00" y="358.00" width="1.00" height="1.00" fill="#b4b4b4" />
<rect x="133.00" y="54.00" width="1.00" height="1.00" fill="#b4b4b4" />
<rect x="133.00" y="62.00" width="1.00" height="1.00" fill="#b4b4b4" />
<rect x="133.00" y="70.00" width="1.00" height="1.00" fill="#b4b4b4" />
<rect x="133.00" y="78.00" width="1.00" height="1.00" fill="#b4b4b4" />
<rect x="133.00" y="86.00" width="1.00" height="1.00" fill="#b4b4b4" />
<rect x="133.00" y="94.00" width="1.00" height="1.00" fill="#b4b4b4" />
<rect x="133.00" y="102.00" width="1.00" height="1.00" fill="#b4b4b4" />
<rect x="133.00" y="110.00" width="1.00" height="1.00" fill="#b4b4b4" />
<rect x="133.00" y="118.00" width="1.00" height="1.00" fill="#b4b4b4" />
<rect x="133.00" y="126.00" width="1.00" height="1.00" fill="#b4b4b4" />
<rect x="133.00" y="134.00" width="1.00" height="1.00" fill="#b4b4b4" />
<rect x="133.00" y="142.00" width="1.00" height="1.00" fill="#b4b4b4" />
<rect x="133.00" y="150.00" width="1.00" height="1.00" fill="#b4b4b4" />
<rect x="133.00" y="158.00" width="1.00" height="1.00" fill="#b4b4b4" />
<rect x="133.00" y="166.00" width="1.00" height="1.00" fill="#b4b4b4" />
<rect x="133.00" y="174.00" width="1.00" height="1.00" fill="#b4b4b4" />
<rect x="133.00" y="182.00" width="1.00" height="1.00" fill="#b4b4b4" />
<rect x="133.00" y="190.00" width="1.00" height="1.00" fill="#b4b4b4" />
<rect x="133.00" y="198.00" width="1.00" height="1.00" fill="#b4b4b4" />
<rect x="133.00" y="206.00" width="1.00" height="1.00" fill="#b4b4b4" />
<rect x="133.00" y="214.00" width="1.00" height="1.00" fill="#b4b4b4" />
<rect x="133.00" y="222.00" width="1.00" height="1.00" fill="#b4b4b4" />
<rect x="133.00" y="230.00" width="1.00" height="1.00" fill="#b4b4b4" />
<rect x="133.00" y="238.00" width="1.00" height="1.00" fill="#b4b4b4" />
<rect x="133.00" y="246.00" width="1.00" height="1.00" fill="#b4b4b4" />
<rect x="133.00" y="254.00" width="1.00" height="1.00" fill="#b4b4b4" />
<rect x="133.00" y="262.00" width="1.00" height="1.00" fill="#b4b4b4" />
<rect x="133.00" y="270.00" width="1.00" height="1.00" fill="#b4b4b4" />
<rect x="133.00" y="278.00" width="1.00" height="1.00" fill="#b4b4b4" />
<rect x="133.00" y="286.00" width="1.00" height="1.00" fill="#b4b4b4" />
<rect x="133.00" y="294.00" width="1.00" height="1.00" fill="#b4b4b4" />
<rect x="133.00" y="302.00" width="1.00" height="1.00" fill="#b4b4b4" />
<rect x="133.00" y="310.00" width="1.00" height="1.00" fill="#b4b4b4" />
<rect x="133.00" y="318.00" width="1.00" height="1.00" fill="#b4b4b4" />
<rect x="133.00" y="326.00" width="1.00" height="1.00" fill="#b4b4b4" />
<rect x="133.00" y="334.00" width="1.00" height="1.00" fill="#b4b4b4" />
<rect x="133.00" y="342.00" width="1.00" height="1.00" fill="#b4b4b4" />
<rect x="133.00" y="350.00" width="1.00" height="1.00" fill="#b4b4b4" />
<rect x="133.00" y="358.00" width="1.00" height="1.00" fill="#b4b4b4" />
<rect x="213.00" y="54.00" width="1.00" height="1.00" fill="#b4b4b4" />
<rect x="213.00" y="62.00" width="1.00" height="1.00" fill="#b4b4b4" />
<rect x="213.00" y="70.00" width="1.00" height="1.00" fill="#b4b4b4" />
<rect x="213.00" y="78.00" width="1.00" height="1.00" fill="#b4b4b4" />
<rect x="213.00" y="86.00" width="1.00" height="1.00" fill="#b4b4b4" />
<rect x="213.00" y="94.00" width="1.00" height="1.00" fill="#b4b4b4" />
<rect x="213.00" y="102.00" width="1.00" height="1.00" fill="#b4b4b4" />
<rect x="213.00" y="110.00" width="1.00" height="1.00" fill="#b4b4b4" />
<rect x="213.00" y="118.00" width="1.00" height="1.00" fill="#b4b4b4" />
<rect x="213.00" y="126.00" width="1.00" height="1.00" fill="#b4b4b4" />
<rect x="213.00" y="134.00" width="1.00" height="1.00" fill="#b4b4b4" />
<rect x="213.00" y="142.00" width="1.00" height="1.00" fill="#b4b4b4" />
<rect x="213.00" y="150.00" width="1.00" height="1.00" fill="#b4b4b4" />
<rect x="213.00" y="158.00" width="1.00" height="1.00" fill="#b4b4b4" />
<rect x="213.00" y="166.00" width="1.00" height="1.00" fill="#b4b4b4" />
<rect x="213.00" y="174.00" width="1.00" height="1.00" fill="#b4b4b4" />
<rect x="213.00" y="182.00" width="1.00" height="1.00" fill="#b4b4b4" />
<rect x="213.00" y="190.00" width="1.00" height="1.00" fill="#b4b4b4" />
<rect x="213.00" y="198.00" width="1.00" height="1.00" fill="#b4b4b4" />
<rect x="213.00" y="206.00" width="1.00" height="1.00" fill="#b4b4b4" />
<rect x="213.00" y="214.00" width="1.00" height="1.00" fill="#b4b4b4" />
<rect x="213.00" y="222.00" width="1.00" height="1.00" fill="#b4b4b4" />
<rect x="213.00" y="230.00" width="1.00" height="1.00" fill="#b4b4b4" />
<rect x="213.00" y="238.00" width="1.00" height="1.00" fill="#b4b4b4" />
<rect x="213.00" y="246.00" width="1.00" height="1.00" fill="#b4b4b4" />
<rect x="213.00" y="254.00" width="1.00" height="1.00" fill="#b4b4b4" />
<rect x="213.00" y="262.00" width="1.00" height="1.00" fill="#b4b4b4" />
<rect x="213.00" y="270.00" width="1.00" height="1.00" fill="#b4b4b4" />
<rect x="213.00" y="278.00" width="1.00" height="1.00" fill="#b4b4b4" />
<rect x="213.00" y="286.00" width="1.00" height="1.00" fill="#b4b4b4" />
<rect x="213.00" y="294.00" width="1.00" height="1.00" fill="#b4b4b4" />
<rect x="213.00" y="302.00" width="1.00" height="1.00" fill="#b4b4b4" />
<rect x="213.00" y="310.00" width="1.00" height="1.00" fill="#b4b4b4" />
<rect x="213.00" y="318.00" width="1.00" height="1.00" fill="#b4b4b4" />
<rect x="213.00" y="326.00" width="1.00" height="1.00" fill="#b4b4b4" />
<rect x="213.00" y="334.00" width="1.00" height="1.00" fill="#b4b4b4" />
<rect x="213.00" y="342.00" width="1.00" height="1.00" fill="#b4b4b4" />
<rect x="213.00" y="350.00" width="1.00" height="1.00" fill="#b4b4b4" />
<rect x="213.00" y="358.00" width="1.00" height="1.00" fill="#b4b4b4" />
<rect x="253.00" y="54.00" width="1.00" height="1.00" fill="#b4b4b4" />
<rect x="253.00" y="62.00" width="1.00" height="1.00" fill="#b4b4b4" />
<rect x="253.00" y="70.00" width="1.00" height="1.00" fill="#b4b4b4" />
<rect x="253.00" y="78.00" width="1.00" height="1.00" fill="#b4b4b4" />
<rect x="253.00" y="86.00" width="1.00" height="1.00" fill="#b4b4b4" />
<rect x="253.00" y="94.00" width="1.00" height="1.00" fill="#b4b4b4" />
<rect x="253.00" y="102.00" width="1.00" height="1.00" fill="#b4b4b4" />
<rect x="253.00" y="110.00" width="1.00" height="1.00" fill="#b4b4b4" />
<rect x="253.00" y="118.00" width="1.00" height="1.00" fill="#b4b4b4" />
<rect x="253.00" y="126.00" width="1.00" height="1.00" fill="#b4b4b4" />
<rect x="253.00" y="134.00" width="1.00" height="1.00" fill="#b4b4b4" />
<rect x="253.00" y="142.00" width="1.00" height="1.00" fill="#b4b4b4" />
<rect x="253.00" y="150.00" width="1.00" height="1.00" fill="#b4b4b4" />
<rect x="253.00" y="158.00" width="1.00" height="1.00" fill="#b4b4b4" />
<rect x="253.00" y="166.00" width="1.00" height="1.00" fill="#b4b4b4" />
<rect x="253.00" y="174.00" width="1.00" height="1.00" fill="#b4b4b4" />
<rect x="253.00" y="182.00" width="1.00" height="1.00" fill="#b4b4b4" />
<rect x="253.00" y="190.00" width="1.00" height="1.00" fill="#b4b4b4" />
<rect x="253.00" y="198.00" width="1.00" height="1.00" fill="#b4b4b4" />
<rect x="253.00" y="206.00" width="1.00" height="1.00" fill="#b4b4b4" />
<rect x="253.00" y="214.00" width="1.00" height="1.00" fill="#b4b4b4" />
<rect x="253.00" y="222.00" width="1.00" height="1.00" fill="#b4b4b4" />
<rect x="253.00" y="230.00" width="1.00" height="1.00" fill="#b4b4b4" />
<rect x="253.00" y="238.00" width="1.00" height="1.00" fill="#b4b4b4" />
<rect x="253.00" y="246.00" width="1.00" height="1.00" fill="#b4b4b4" />
<rect x="253.00" y="254.00" width="1.00" height="1.00" fill="#b4b4b4" />
<rect x="253.00" y="262.00" width="1.00" height="1.00" fill="#b4b4b4" />
<rect x="253.00" y="270.00" width="1.00" height="1.00" fill="#b4b4b4" />
<rect x="253.00" y="278.00" width="1.00" height="1.00" fill="#b4b4b4" />
<rect x="253.00" y="286.00" width="1.00" height="1.00" fill="#b4b4b4" />
<rect x="253.00" y="294.00" width="1.00" height="1.00" fill="#b4b4b4" />
<rect x="253.00" y="302.00" width="1.00" height="1.00" fill="#b4b4b4" />
<rect x="253.00" y="310.00" width="1.00" height="1.00" fill="#b4b4b4" />
<rect x="253.00" y="318.00" width="1.00" height="1.00" fill="#b4b4b4" />
<rect x="253.00" y="326.00" width="1.00" height="1.00" fill="#b4b4b4" />
<rect x="253.00" y="334.00" width="1.00" height="1.00" fill="#b4b4b4" />
<rect x="253.00" y="342.00" width="1.00" height="1.00" fill="#b4b4b4" />
<rect x="253.00" y="350.00" width="1.00" height="1.00" fill="#b4b4b4" />
<rect x="253.00" y="358.00" width="1.00" height="1.00" fill="#b4b4b4" />
<rect x="293.00" y="54.00" width="1.00" height="1.00" fill="#b4b4b4" />
<rect x="293.00" y="62.00" width="1.00" height="1.00" fill="#b4b4b4" />
<rect x="293.00" y="70.00" width="1.00" height="1.00" fill="#b4b4b4" />
<rect x="293.00" y="78.00" width="1.00" height="1.00" fill="#b4b4b4" />
<rect x="293.00" y="86.00" width="1.00" height="1.00" fill="#b4b4b4" />
<rect x="293.00" y="94.00" width="1.00" height="1.00" fill="#b4b4b4" />
<rect x="293.00" y="102.00" width="1.00" height="1.00" fill="#b4b4b4" />
<rect x="293.00" y="110.00" width="1.00" height="1.00" fill="#b4b4b4" />
<rect x="293.00" y="118.00" width="1.00" height="1.00" fill="#b4b4b4" />
<rect x="293.00" y="126.00" width="1.00" height="1.00" fill="#b4b4b4" />
<rect x="293.00" y="134.00" width="1.00" height="1.00" fill="#b4b4b4" />
<rect x="293.00" y="142.00" width="1.00" height="1.00" fill="#b4b4b4" />
<rect x="293.00" y="150.00" width="1.00" height="1.00" fill="#b4b4b4" />
<rect x="293.00" y="158.00" width="1.00" height="1.00" fill="#b4b4b4" />
<rect x="293.00" y="166.00" width="1.00" height="1.00" fill="#b4b4b4" />
<rect x="293.00" y="174.00" width="1.00" height="1.00" fill="#b4b4b4" />
<rect x="293.00" y="182.00" width="1.00" height="1.00" fill="#b4b4b4" />
<rect x="293.00" y="190.00" width="1.00" height="1.00" fill="#b4b4b4" />
<rect x="293.00" y="198.00" width="1.00" height="1.00" fill="#b4b4b4" />
<rect x="293.00" y="206.00" width="1.00" height="1.00" fill="#b4b4b4" />
<rect x="293.00" y="214.00" width="1.00" height="1.00" fill="#b4b4b4" />
<rect x="293.00" y="222.00" width="1.00" height="1.00" fill="#b4b4b4" />
<rect x="293.00" y="230.00" width="1.00" height="1.00" fill="#b4b4b4" />
<rect x="293.00" y="238.00" width="1.00" height="1.00" fill="#b4b4b4" />
<rect x="293.00" y="246.00" width="1.00" height="1.00" fill="#b4b4b4" />
<rect x="293.00" y="254.00" width="1.00" height="1.00" fill="#b4b4b4" />
<rect x="293.00" y="262.00" width="1.00" height="1.00" fill="#b4b4b4" />
<rect x="293.00" y="270.00" width="1.00" height="1.00" fill="#b4b4b4" />
<rect x="293.00" y="278.00" width="1.00" height="1.00" fill="#b4b4b4" />
<rect x="293.00" y="286.00" width="1.00" height="1.00" fill="#b4b4b4" />
<rect x="293.00" y="294.00" width="1.00" height="1.00" fill="#b4b4b4" />
<rect x="293.00" y="302.00" width="1.00" height="1.00" fill="#b4b4b4" />
<rect x="293.00" y="310.00" width="1.00" height="1.00" fill="#b4b4b4" />
<rect x="293.00" y="318.00" width="1.00" height="1.00" fill="#b4b4b4" />
<rect x="293.00" y="326.00" width="1.00" height="1.00" fill="#b4b4b4" />
<rect x="293.00" y="334.00" width="1.00" height="1.00" fill="#b4b4b4" />
<rect x="293.00" y="342.00" width="1.00" height="1.00" fill="#b4b4b4" />
<rect x="293.00" y="350.00" width="1.00" height="1.00" fill="#b4b4b4" />
<rect x="293.00" y="358.00" width="1.00" height="1.00" fill="#b4b4b4" />
<rect x="333.00" y="54.00" width="1.00" height="1.00" fill="#b4b4b4" />
<rect x="333.00" y="62.00" width="1.00" height="1.00" fill="#b4b4b4" />
<rect x="333.00" y="70.00" width="1.00" height="1.00" fill="#b4b4b4" />
<rect x="333.00" y="78.00" width="1.00" height="1.00" fill="#b4b4b4" />
<rect x="333.00" y="86.00" width="1.00" height="1.00" fill="#b4b4b4" />
<rect x="333.00" y="94.00" width="1.00" height="1.00" fill="#b4b4b4" />
<rect x="333.00" y="102.00" width="1.00" height="1.00" fill="#b4b4b4" />
<rect x="333.00" y="110.00" width="1.00" height="1.00" fill="#b4b4b4" />
<rect x="333.00" y="118.00" width="1.00" height="1.00" fill="#b4b4b4" />
<rect x="333.00" y="126.00" width="1.00" height="1.00" fill="#b4b4b4" />
<rect x="333.00" y="134.00" width="1.00" height="1.00" fill="#b4b4b4" />
<rect x="333.00" y="142.00" width="1.00" height="1.00" fill="#b4b4b4" />
<rect x="333.00" y="150.00" width="1.00" height="1.00" fill="#b4b4b4" />
<rect x="333.00" y="158.00" width="1.00" height="1.00" fill="#b4b4b4" />
<rect x="333.00" y="166.00" width="1.00" height="1.00" fill="#b4b4b4" />
<rect x="333.00" y="174.00" width="1.00" height="1.00" fill="#b4b4b4" />
<rect x="333.00" y="182.00" width="1.00" height="1.00" fill="#b4b4b4" />
<rect x="333.00" y="190.00" width="1.00" height="1.00" fill="#b4b4b4" />
<rect x="333.00" y="198.00" width="1.00" height="1.00" fill="#b4b4b4" />
<rect x="333.00" y="206.00" width="1.00" height="1.00" fill="#b4b4b4" />
<rect x="333.00" y="214.00" width="1.00" height="1.00" fill="#b4b4b4" />
<rect x="333.00" y="222.00" width="1.00" height="1.00" fill="#b4b4b4" />
<rect x="333.00" y="230.00" width="1.00" height="1.00" fill="#b4b4b4" />
<rect x="333.00" y="238.00" width="1.00" height="1.00" fill="#b4b4b4" />
<rect x="333.00" y="246.00" width="1.00" height="1.00" fill="#b4b4b4" />
<rect x="333.00" y="254.00" width="1.00" height="1.00" fill="#b4b4b4" />
<rect x="333.00" y="262.00" width="1.00" height="1.00" fill="#b4b4b4" />
<rect x="333.00" y="270.00" width="1.00" height="1.00" fill="#b4b4b4" />
<rect x="333.00" y="278.00" width="1.00" height="1.00" fill="#b4b4b4" />
<rect x="333.00" y="286.00" width="1.00" height="1.00" fill="#b4b4b4" />
<rect x="333.00" y="294.00" width="1.00" height="1.00" fill="#b4b4b4" />
<rect x="333.00" y="302.00" width="1.00" height="1.00" fill="#b4b4b4" />
<rect x="333.00" y="310.00" width="1.00" height="1.00" fill="#b4b4b4" />
<rect x="333.00" y="318.00" width="1.00" height="1.00" fill="#b4b4b4" />
<rect x="333.00" y="326.00" width="1.00" height="1.00" fill="#b4b4b4" />
<rect x="333.00" y="334.00" width="1.00" height="1.00" fill="#b4b4b4" />
<rect x="333.00" y="342.00" width="1.00" height="1.00" fill="#b4b4b4" />
<rect x="333.00" y="350.00" width="1.00" height="1.00" fill="#b4b4b4" />
<rect x="333.00" y="358.00" width="1.00" height="1.00" fill="#b4b4b4" />
<rect x="413.00" y="54.00" width="1.00" height="1.00" fill="#b4b4b4" />
<rect x="413.00" y="62.00" width="1.00" height="1.00" fill="#b4b4b4" />
<rect x="413.00" y="70.00" width="1.00" height="1.00" fill="#b4b4b4" />
<rect x="413.00" y="78.00" width="1.00" height="1.00" fill="#b4b4b4" />
<rect x="413.00" y="86.00" width="1.00" height="1.00" fill="#b4b4b4" />
<rect x="413.00" y="94.00" width="1.00" height="1.00" fill="#b4b4b4" />
<rect x="413.00" y="102.00" width="1.00" height="1.00" fill="#b4b4b4" />
<rect x="413.00" y="110.00" width="1.00" height="1.00" fill="#b4b4b4" />
<rect x="413.00" y="118.00" width="1.00" height="1.00" fill="#b4b4b4" />
<rect x="413.00" y="126.00" width="1.00" height="1.00" fill="#b4b4b4" />
<rect x="413.00" y="134.00" width="1.00" height="1.00" fill="#b4b4b4" />
<rect x="413.00" y="142.00" width="1.00" height="1.00" fill="#b4b4b4" />
<rect x="413.00" y="150.00" width="1.00" height="1.00" fill="#b4b4b4" />
<rect x="413.00" y="158.00" width="1.00" height="1.00" fill="#b4b4b4" />
<rect x="413.00" y="166.00" width="1.00" height="1.00" fill="#b4b4b4" />
<rect x="413.00" y="174.00" width="1.00" height="1.00" fill="#b4b4b4" />
<rect x="413.00" y="182.00" width="1.00" height="1.00" fill="#b4b4b4" />
<rect x="413.00" y="190.00" width="1.00" height="1.00" fill="#b4b4b4" />
<rect x="413.00" y="198.00" width="1.00" height="1.00" fill="#b4b4b4" />
<rect x="413.00" y="206.00" width="1.00" height="1.00" fill="#b4b4b4" />
<rect x="413.00" y="214.00" width="1.00" height="1.00" fill="#b4b4b4" />
<rect x="413.00" y="222.00" width="1.00" height="1.00" fill="#b4b4b4" />
<rect x="413.00" y="230.00" width="1.00" height="1.00" fill="#b4b4b4" />
<rect x="413.00" y="238.00" width="1.00" height="1.00" fill="#b4b4b4" />
<rect x="413.00" y="246.00" width="1.00" height="1.00" fill="#b4b4b4" />
<rect x="413.00" y="254.00" width="1.00" height="1.00" fill="#b4b4b4" />
<rect x="413.00" y="262.00" width="1.00" height="1.00" fill="#b4b4b4" />
<rect x="413.00" y="270.00" width="1.00" height="1.00" fill="#b4b4b4" />
<rect x="413.00" y="278.00" width="1.00" height="1.00" fill="#b4b4b4" />
<rect x="413.00" y="286.00" width="1.00" height="1.00" fill="#b4b4b4" />
<rect x="413.00" y="294.00" width="1.00" height="1.00" fill="#b4b4b4" />
<rect x="413.00" y="302.00" width="1.00" height="1.00" fill="#b4b4b4" />
<rect x="413.00" y="310.00" width="1.00" height="1.00" fill="#b4b4b4" />
<rect x="413.00" y="318.00" width="1.00" height="1.00" fill="#b4b4b4" />
<rect x="413.00" y="326.00" width="1.00" height="1.00" fill="#b4b4b4" />
<rect x="413.00" y="334.00" width="1.00" height="1.00" fill="#b4b4b4" />
<rect x="413.00" y="342.00" width="1.00" height="1.00" fill="#b4b4b4" />
<rect x="413.00" y="350.00" width="1.00" height="1.00" fill="#b4b4b4" />
<rect x="413.00" y="358.00" width="1.00" height="1.00" fill="#b4b4b4" />
<rect x="453.00" y="54.00" width="1.00" height="1.00" fill="#b4b4b4" />
<rect x="453.00" y="62.00" width="1.00" height="1.00" fill="#b4b4b4" />
<rect x="453.00" y="70.00" width="1.00" height="1.00" fill="#b4b4b4" />
<rect x="453.00" y="78.00" width="1.00" height="1.00" fill="#b4b4b4" />
<rect x="453.00" y="86.00" width="1.00" height="1.00" fill="#b4b4b4" />
<rect x="453.00" y="94.00" width="1.00" height="1.00" fill="#b4b4b4" />
<rect x="453.00" y="102.00" width="1.00" height="1.00" fill="#b4b4b4" />
<rect x="453.00" y="110.00" width="1.00" height="1.00" fill="#b4b4b4" />
<rect x="453.00" y="118.00" width="1.00" height="1.00" fill="#b4b4b4" />
<rect x="453.00" y="126.00" width="1.00" height="1.00" fill="#b4b4b4" />
<rect x="453.00" y="134.00" width="1.00" height="1.00" fill="#b4b4b4" />
<rect x="453.00" y="142.00" width="1.00" height="1.00" fill="#b4b4b4" />
<rect x="453.00" y="150.00" width="1.00" height="1.00" fill="#b4b4b4" />
<rect x="453.00" y="158.00" width="1.00" height="1.00" fill="#b4b4b4" />
<rect x="453.00" y="166.00" width="1.00" height="1.00" fill="#b4b4b4" />
<rect x="453.00" y="174.00" width="1.00" height="1.00" fill="#b4b4b4" />
<rect x="453.00" y="182.00" width="1.00" height="1.00" fill="#b4b4b4" />
<rect x="453.00" y="190.00" width="1.00" height="1.00" fill="#b4b4b4" />
<rect x="453.00" y="198.00" width="1.00" height="1.00" fill="#b4b4b4" />
<rect x="453.00" y="206.00" width="1.00" height="1.00" fill="#b4b4b4" />
<rect x="453.00" y="214.00" width="1.00" height="1.00" fill="#b4b4b4" />
<rect x="453.00" y="222.00" width="1.00" height="1.00" fill="#b4b4b4" />
<rect x="453.00" y="230.00" width="1.00" height="1.00" fill="#b4b4b4" />
<rect x="453.00" y="238.00" width="1.00" height="1.00" fill="#b4b4b4" />
<rect x="453.00" y="246.00" width="1.00" height="1.00" fill="#b4b4b4" />
<rect x="453.00" y="254.00" width="1.00" height="1.00" fill="#b4b4b4" />
<rect x="453.00" y="262.00" width="1.00" height="1.00" fill="#b4b4b4" />
<rect x="453.00" y="270.00" width="1.00" height="1.00" fill="#b4b4b4" />
<rect x="453.00" y="278.00" width="1.00" height="1.00" fill="#b4b4b4" />
<rect x="453.00" y="286.00" width="1.00" height="1.00" fill="#b4b4b4" />
<rect x="453.00" y="294.00" width="1.00" height="1.00" fill="#b4b4b4" />
<rect x="453.00" y="302.00" width="1.00" height="1.00" fill="#b4b4b4" />
<rect x="453.00" y="310.00" width="1.00" height="1.00" fill="#b4b4b4" />
<rect x="453.00" y="318.00" width="1.00" height="1.00" fill="#b4b4b4" />
<rect x="453.00" y="326.00" width="1.00" height="1.00" fill="#b4b4b4" />
<rect x="453.00" y="334.00" width="1.00" height="1.00" fill="#b4b4b4" />
<rect x="453.00" y="342.00" width="1.00" height="1.00" fill="#b4b4b4" />
<rect x="453.00" y="350.00" width="1.00" height="1.00" fill="#b4b4b4" />
<rect x="453.00" y="358.00" width="1.00" height="1.00" fill="#b4b4b4" />
<rect x="493.00" y="54.00" width="1.00" height="1.00" fill="#b4b4b4" />
<rect x="493.00" y="62.00" width="1.00" height="1.00" fill="#b4b4b4" />
<rect x="493.00" y="70.00" width="1.00" height="1.00" fill="#b4b4b4" />
<rect x="493.00" y="78.00" width="1.00" height="1.00" fill="#b4b4b4" />
<rect x="493.00" y="86.00" width="1.00" height="1.00" fill="#b4b4b4" />
<rect x="493.00" y="94.00" width="1.00" height="1.00" fill="#b4b4b4" />
<rect x="493.00" y="102.00" width="1.00" height="1.00" fill="#b4b4b4" />
<rect x="493.00" y="110.00" width="1.00" height="1.00" fill="#b4b4b4" />
<rect x="493.00" y="118.00" width="1.00" height="1.00" fill="#b4b4b4" />
<rect x="493.00" y="126.00" width="1.00" height="1.00" fill="#b4b4b4" />
<rect x="493.00" y="134.00" width="1.00" height="1.00" fill="#b4b4b4" />
<rect x="493.00" y="142.00" width="1.00" height="1.00" fill="#b4b4b4" />
<rect x="493.00" y="150.00" width="1.00" height="1.00" fill="#b4b4b4" />
<rect x="493.00" y="158.00" width="1.00" height="1.00" fill="#b4b4b4" />
<rect x="493.00" y="166.00" width="1.00" height="1.00" fill="#b4b4b4" />
<rect x="493.00" y="174.00" width="1.00" height="1.00" fill="#b4b4b4" />
<rect x="493.00" y="182.00" width="1.00" height="1.00" fill="#b4b4b4" />
<rect x="493.00" y="190.00" width="1.00" height="1.00" fill="#b4b4b4" />
<rect x="493.00" y="198.00" width="1.00" height="1.00" fill="#b4b4b4" />
<rect x="493.00" y="206.00" width="1.00" height="1.00" fill="#b4b4b4" />
<rect x="493.00" y="214.00" width="1.00" height="1.00" fill="#b4b4b4" />
<rect x="493.00" y="222.00" width="1.00" height="1.00" fill="#b4b4b4" />
<rect x="493.00" y="230.00" width="1.00" height="1.00" fill="#b4b4b4" />
<rect x="493.00" y="238.00" width="1.00" height="1.00" fill="#b4b4b4" />
<rect x="493.00" y="246.00" width="1.00" height="1.00" fill="#b4b4b4" />
<rect x="493.00" y="254.00" width="1.00" height="1.00" fill="#b4b4b4" />
<rect x="493.00" y="262.00" width="1.00" height="1.00" fill="#b4b4b4" />
<rect x="493.00" y="270.00" width="1.00" height="1.00" fill="#b4b4b4" />
<rect x="493.00" y="278.00" width="1.00" height="1.00" fill="#b4b4b4" />
<rect x="493.00" y="286.00" width="1.00" height="1.00" fill="#b4b4b4" />
<rect x="493.00" y="294.00" width="1.00" height="1.00" fill="#b4b4b4" />
<rect x="493.00" y="302.00" width="1.00" height="1.00" fill="#b4b4b4" />
<rect x="493.00" y="310.00" width="1.00" height="1.00" fill="#b4b4b4" />
<rect x="493.00" y="318.00" width="1.00" height="1.00" fill="#b4b4b4" />
<rect x="493.00" y="326.00" width="1.00" height="1.00" fill="#b4b4b4" />
<rect x="493.00" y="334.00" width="1.00" height="1.00" fill="#b4b4b4" />
<rect x="493.00" y="342.00" width="1.00" height="1.00" fill="#b4b4b4" />
<rect x="493.00" y="350.00" width="1.00" height="1.00" fill="#b4b4b4" />
<rect x="493.00" y="358.00" width="1.00" height="1.00" fill="#b4b4b4" />
<rect x="533.00" y="54.00" width="1.00" height="1.00" fill="#b4b4b4" />
<rect x="533.00" y="62.00" width="1.00" height="1.00" fill="#b4b4b4" />
<rect x="533.00" y="70.00" width="1.00" height="1.00" fill="#b4b4b4" />
<rect x="533.00" y="78.00" width="1.00" height="1.00" fill="#b4b4b4" />
<rect x="533.00" y="86.00" width="1.00" height="1.00" fill="#b4b4b4" />
<rect x="533.00" y="94.00" width="1.00" height="1.00" fill="#b4b4b4" />
<rect x="533.00" y="102.00" width="1.00" height="1.00" fill="#b4b4b4" />
<rect x="533.00" y="110.00" width="1.00" height="1.00" fill="#b4b4b4" />
<rect x="533.00" y="118.00" width="1.00" height="1.00" fill="#b4b4b4" />
<rect x="533.00" y="126.00" width="1.00" height="1.00" fill="#b4b4b4" />
<rect x="533.00" y="134.00" width="1.00" height="1.00" fill="#b4b4b4" />
<rect x="533.00" y="142.00" width="1.00" height="1.00" fill="#b4b4b4" />
<rect x="533.00" y="150.00" width="1.00" height="1.00" fill="#b4b4b4" />
<rect x="533.00" y="158.00" width="1.00" height="1.00" fill="#b4b4b4" />
<rect x="533.00" y="166.00" width="1.00" height="1.00" fill="#b4b4b4" />
<rect x="533.00" y="174.00" width="1.00" height="1.00" fill="#b4b4b4" />
<rect x="533.00" y="182.00" width="1.00" height="1.00" fill="#b4b4b4" />
<rect x="533.00" y="190.00" width="1.00" height="1.00" fill="#b4b4b4" />
<rect x="533.00" y="198.00" width="1.00" height="1.00" fill="#b4b4b4" />
<rect x="533.00" y="206.00" width="1.00" height="1.00" fill="#b4b4b4" />
<rect x="533.00" y="214.00" width="1.00" height="1.00" fill="#b4b4b4" />
<rect x="533.00" y="222.00" width="1.00" height="1.00" fill="#b4b4b4" />
<rect x="533.00" y="230.00" width="1.00" height="1.00" fill="#b4b4b4" />
<rect x="533.00" y="238.00" width="1.00" height="1.00" fill="#b4b4b4" />
<rect x="533.00" y="246.00" width="1.00" height="1.00" fill="#b4b4b4" />
<rect x="533.00" y="254.00" width="1.00" height="1.00" fill="#b4b4b4" />
<rect x="533.00" y="262.00" width="1.00" height="1.00" fill="#b4b4b4" />
<rect x="533.00" y="270.00" width="1.00" height="1.00" fill="#b4b4b4" />
<rect x="533.00" y="278.00" width="1.00" height="1.00" fill="#b4b4b4" />
<rect x="533.00" y="286.00" width="1.00" height="1.00" fill="#b4b4b4" />
<rect x="533.00" y="294.00" width="1.00" height="1.00" fill="#b4b4b4" />
<rect x="533.00" y="302.00" width="1.00" height="1.00" fill="#b4b4b4" />
<rect x="533.00" y="310.00" width="1.00" height="1.00" fill="#b4b4b4" />
<rect x="533.00" y="318.00" width="1.00" height="1.00" fill="#b4b4b4" />
<rect x="533.00" y="326.00" width="1.00" height="1.00" fill="#b4b4b4" />
<rect x="533.00" y="334.00" width="1.00" height="1.00" fill="#b4b4b4" />
<rect x="533.00" y="342.00" width="1.00" height="1.00" fill="#b4b4b4" />
<rect x="533.00" y="350.00" width="1.00" height="1.00" fill="#b4b4b4" />
<rect x="533.00" y="358.00" width="1.00" height="1.00" fill="#b4b4b4" />
<line x1="66.50" y1="47.50" x2="588.00" y2="47.50" stroke="#d8d8d8" stroke-width="1.3" />
<line x1="66.50" y1="366.50" x2="588.00" y2="366.50" stroke="#d8d8d8" stroke-width="1.3" />
<line x1="66.50" y1="47.50" x2="66.50" y2="366.50" stroke="#d8d8d8" stroke-width="1.3" />
<line x1="69.50" y1="47.50" x2="69.50" y2="50.10" stroke="#d8d8d8" stroke-width="1.1" />
<line x1="69.50" y1="363.90" x2="69.50" y2="366.50" stroke="#d8d8d8" stroke-width="1.1" />
<line x1="77.50" y1="47.50" x2="77.50" y2="50.10" stroke="#d8d8d8" stroke-width="1.1" />
<line x1="77.50" y1="363.90" x2="77.50" y2="366.50" stroke="#d8d8d8" stroke-width="1.1" />
<line x1="85.50" y1="47.50" x2="85.50" y2="50.10" stroke="#d8d8d8" stroke-width="1.1" />
<line x1="85.50" y1="363.90" x2="85.50" y2="366.50" stroke="#d8d8d8" stroke-width="1.1" />
<line x1="93.50" y1="47.50" x2="93.50" y2="50.10" stroke="#d8d8d8" stroke-width="1.1" />
<line x1="93.50" y1="363.90" x2="93.50" y2="366.50" stroke="#d8d8d8" stroke-width="1.1" />
<line x1="101.50" y1="47.50" x2="101.50" y2="50.10" stroke="#d8d8d8" stroke-width="1.1" />
<line x1="101.50" y1="363.90" x2="101.50" y2="366.50" stroke="#d8d8d8" stroke-width="1.1" />
<line x1="109.50" y1="47.50" x2="109.50" y2="50.10" stroke="#d8d8d8" stroke-width="1.1" />
<line x1="109.50" y1="363.90" x2="109.50" y2="366.50" stroke="#d8d8d8" stroke-width="1.1" />
<line x1="117.50" y1="47.50" x2="117.50" y2="50.10" stroke="#d8d8d8" stroke-width="1.1" />
<line x1="117.50" y1="363.90" x2="117.50" y2="366.50" stroke="#d8d8d8" stroke-width="1.1" />
<line x1="125.50" y1="47.50" x2="125.50" y2="50.10" stroke="#d8d8d8" stroke-width="1.1" />
<line x1="125.50" y1="363.90" x2="125.50" y2="366.50" stroke="#d8d8d8" stroke-width="1.1" />
<line x1="133.50" y1="47.50" x2="133.50" y2="50.10" stroke="#d8d8d8" stroke-width="1.1" />
<line x1="133.50" y1="363.90" x2="133.50" y2="366.50" stroke="#d8d8d8" stroke-width="1.1" />
<line x1="141.50" y1="47.50" x2="141.50" y2="50.10" stroke="#d8d8d8" stroke-width="1.1" />
<line x1="141.50" y1="363.90" x2="141.50" y2="366.50" stroke="#d8d8d8" stroke-width="1.1" />
<line x1="149.50" y1="47.50" x2="149.50" y2="50.10" stroke="#d8d8d8" stroke-width="1.1" />
<line x1="149.50" y1="363.90" x2="149.50" y2="366.50" stroke="#d8d8d8" stroke-width="1.1" />
<line x1="157.50" y1="47.50" x2="157.50" y2="50.10" stroke="#d8d8d8" stroke-width="1.1" />
<line x1="157.50" y1="363.90" x2="157.50" y2="366.50" stroke="#d8d8d8" stroke-width="1.1" />
<line x1="165.50" y1="47.50" x2="165.50" y2="50.10" stroke="#d8d8d8" stroke-width="1.1" />
<line x1="165.50" y1="363.90" x2="165.50" y2="366.50" stroke="#d8d8d8" stroke-width="1.1" />
<line x1="173.50" y1="47.50" x2="173.50" y2="50.10" stroke="#d8d8d8" stroke-width="1.1" />
<line x1="173.50" y1="363.90" x2="173.50" y2="366.50" stroke="#d8d8d8" stroke-width="1.1" />
<line x1="181.50" y1="47.50" x2="181.50" y2="50.10" stroke="#d8d8d8" stroke-width="1.1" />
<line x1="181.50" y1="363.90" x2="181.50" y2="366.50" stroke="#d8d8d8" stroke-width="1.1" />
<line x1="189.50" y1="47.50" x2="189.50" y2="50.10" stroke="#d8d8d8" stroke-width="1.1" />
<line x1="189.50" y1="363.90" x2="189.50" y2="366.50" stroke="#d8d8d8" stroke-width="1.1" />
<line x1="197.50" y1="47.50" x2="197.50" y2="50.10" stroke="#d8d8d8" stroke-width="1.1" />
<line x1="197.50" y1="363.90" x2="197.50" y2="366.50" stroke="#d8d8d8" stroke-width="1.1" />
<line x1="205.50" y1="47.50" x2="205.50" y2="50.10" stroke="#d8d8d8" stroke-width="1.1" />
<line x1="205.50" y1="363.90" x2="205.50" y2="366.50" stroke="#d8d8d8" stroke-width="1.1" />
<line x1="213.50" y1="47.50" x2="213.50" y2="50.10" stroke="#d8d8d8" stroke-width="1.1" />
<line x1="213.50" y1="363.90" x2="213.50" y2="366.50" stroke="#d8d8d8" stroke-width="1.1" />
<line x1="221.50" y1="47.50" x2="221.50" y2="50.10" stroke="#d8d8d8" stroke-width="1.1" />
<line x1="221.50" y1="363.90" x2="221.50" y2="366.50" stroke="#d8d8d8" stroke-width="1.1" />
<line x1="229.50" y1="47.50" x2="229.50" y2="50.10" stroke="#d8d8d8" stroke-width="1.1" />
<line x1="229.50" y1="363.90" x2="229.50" y2="366.50" stroke="#d8d8d8" stroke-width="1.1" />
<line x1="237.50" y1="47.50" x2="237.50" y2="50.10" stroke="#d8d8d8" stroke-width="1.1" />
<line x1="237.50" y1="363.90" x2="237.50" y2="366.50" stroke="#d8d8d8" stroke-width="1.1" />
<line x1="245.50" y1="47.50" x2="245.50" y2="50.10" stroke="#d8d8d8" stroke-width="1.1" />
<line x1="245.50" y1="363.90" x2="245.50" y2="366.50" stroke="#d8d8d8" stroke-width="1.1" />
<line x1="253.50" y1="47.50" x2="253.50" y2="50.10" stroke="#d8d8d8" stroke-width="1.1" />
<line x1="253.50" y1="363.90" x2="253.50" y2="366.50" stroke="#d8d8d8" stroke-width="1.1" />
<line x1="261.50" y1="47.50" x2="261.50" y2="50.10" stroke="#d8d8d8" stroke-width="1.1" />
<line x1="261.50" y1="363.90" x2="261.50" y2="366.50" stroke="#d8d8d8" stroke-width="1.1" />
<line x1="269.50" y1="47.50" x2="269.50" y2="50.10" stroke="#d8d8d8" stroke-width="1.1" />
<line x1="269.50" y1="363.90" x2="269.50" y2="366.50" stroke="#d8d8d8" stroke-width="1.1" />
<line x1="277.50" y1="47.50" x2="277.50" y2="50.10" stroke="#d8d8d8" stroke-width="1.1" />
<line x1="277.50" y1="363.90" x2="277.50" y2="366.50" stroke="#d8d8d8" stroke-width="1.1" />
<line x1="285.50" y1="47.50" x2="285.50" y2="50.10" stroke="#d8d8d8" stroke-width="1.1" />
<line x1="285.50" y1="363.90" x2="285.50" y2="366.50" stroke="#d8d8d8" stroke-width="1.1" />
<line x1="293.50" y1="47.50" x2="293.50" y2="50.10" stroke="#d8d8d8" stroke-width="1.1" />
<line x1="293.50" y1="363.90" x2="293.50" y2="366.50" stroke="#d8d8d8" stroke-width="1.1" />
<line x1="301.50" y1="47.50" x2="301.50" y2="50.10" stroke="#d8d8d8" stroke-width="1.1" />
<line x1="301.50" y1="363.90" x2="301.50" y2="366.50" stroke="#d8d8d8" stroke-width="1.1" />
<line x1="309.50" y1="47.50" x2="309.50" y2="50.10" stroke="#d8d8d8" stroke-width="1.1" />
<line x1="309.50" y1="363.90" x2="309.50" y2="366.50" stroke="#d8d8d8" stroke-width="1.1" />
<line x1="317.50" y1="47.50" x2="317.50" y2="50.10" stroke="#d8d8d8" stroke-width="1.1" />
<line x1="317.50" y1="363.90" x2="317.50" y2="366.50" stroke="#d8d8d8" stroke-width="1.1" />
<line x1="325.50" y1="47.50" x2="325.50" y2="50.10" stroke="#d8d8d8" stroke-width="1.1" />
<line x1="325.50" y1="363.90" x2="325.50" y2="366.50" stroke="#d8d8d8" stroke-width="1.1" />
<line x1="333.50" y1="47.50" x2="333.50" y2="50.10" stroke="#d8d8d8" stroke-width="1.1" />
<line x1="333.50" y1="363.90" x2="333.50" y2="366.50" stroke="#d8d8d8" stroke-width="1.1" />
<line x1="341.50" y1="47.50" x2="341.50" y2="50.10" stroke="#d8d8d8" stroke-width="1.1" />
<line x1="341.50" y1="363.90" x2="341.50" y2="366.50" stroke="#d8d8d8" stroke-width="1.1" />
<line x1="349.50" y1="47.50" x2="349.50" y2="50.10" stroke="#d8d8d8" stroke-width="1.1" />
<line x1="349.50" y1="363.90" x2="349.50" y2="366.50" stroke="#d8d8d8" stroke-width="1.1" />
<line x1="357.50" y1="47.50" x2="357.50" y2="50.10" stroke="#d8d8d8" stroke-width="1.1" />
<line x1="357.50" y1="363.90" x2="357.50" y2="366.50" stroke="#d8d8d8" stroke-width="1.1" />
<line x1="365.50" y1="47.50" x2="365.50" y2="50.10" stroke="#d8d8d8" stroke-width="1.1" />
<line x1="365.50" y1="363.90" x2="365.50" y2="366.50" stroke="#d8d8d8" stroke-width="1.1" />
<line x1="373.50" y1="47.50" x2="373.50" y2="50.10" stroke="#d8d8d8" stroke-width="1.1" />
<line x1="373.50" y1="363.90" x2="373.50" y2="366.50" stroke="#d8d8d8" stroke-width="1.1" />
<line x1="381.50" y1="47.50" x2="381.50" y2="50.10" stroke="#d8d8d8" stroke-width="1.1" />
<line x1="381.50" y1="363.90" x2="381.50" y2="366.50" stroke="#d8d8d8" stroke-width="1.1" />
<line x1="389.50" y1="47.50" x2="389.50" y2="50.10" stroke="#d8d8d8" stroke-width="1.1" />
<line x1="389.50" y1="363.90" x2="389.50" y2="366.50" stroke="#d8d8d8" stroke-width="1.1" />
<line x1="397.50" y1="47.50" x2="397.50" y2="50.10" stroke="#d8d8d8" stroke-width="1.1" />
<line x1="397.50" y1="363.90" x2="397.50" y2="366.50" stroke="#d8d8d8" stroke-width="1.1" />
<line x1="405.50" y1="47.50" x2="405.50" y2="50.10" stroke="#d8d8d8" stroke-width="1.1" />
<line x1="405.50" y1="363.90" x2="405.50" y2="366.50" stroke="#d8d8d8" stroke-width="1.1" />
<line x1="413.50" y1="47.50" x2="413.50" y2="50.10" stroke="#d8d8d8" stroke-width="1.1" />
<line x1="413.50" y1="363.90" x2="413.50" y2="366.50" stroke="#d8d8d8" stroke-width="1.1" />
<line x1="421.50" y1="47.50" x2="421.50" y2="50.10" stroke="#d8d8d8" stroke-width="1.1" />
<line x1="421.50" y1="363.90" x2="421.50" y2="366.50" stroke="#d8d8d8" stroke-width="1.1" />
<line x1="429.50" y1="47.50" x2="429.50" y2="50.10" stroke="#d8d8d8" stroke-width="1.1" />
<line x1="429.50" y1="363.90" x2="429.50" y2="366.50" stroke="#d8d8d8" stroke-width="1.1" />
<line x1="437.50" y1="47.50" x2="437.50" y2="50.10" stroke="#d8d8d8" stroke-width="1.1" />
<line x1="437.50" y1="363.90" x2="437.50" y2="366.50" stroke="#d8d8d8" stroke-width="1.1" />
<line x1="445.50" y1="47.50" x2="445.50" y2="50.10" stroke="#d8d8d8" stroke-width="1.1" />
<line x1="445.50" y1="363.90" x2="445.50" y2="366.50" stroke="#d8d8d8" stroke-width="1.1" />
<line x1="453.50" y1="47.50" x2="453.50" y2="50.10" stroke="#d8d8d8" stroke-width="1.1" />
<line x1="453.50" y1="363.90" x2="453.50" y2="366.50" stroke="#d8d8d8" stroke-width="1.1" />
<line x1="461.50" y1="47.50" x2="461.50" y2="50.10" stroke="#d8d8d8" stroke-width="1.1" />
<line x1="461.50" y1="363.90" x2="461.50" y2="366.50" stroke="#d8d8d8" stroke-width="1.1" />
<line x1="469.50" y1="47.50" x2="469.50" y2="50.10" stroke="#d8d8d8" stroke-width="1.1" />
<line x1="469.50" y1="363.90" x2="469.50" y2="366.50" stroke="#d8d8d8" stroke-width="1.1" />
<line x1="477.50" y1="47.50" x2="477.50" y2="50.10" stroke="#d8d8d8" stroke-width="1.1" />
<line x1="477.50" y1="363.90" x2="477.50" y2="366.50" stroke="#d8d8d8" stroke-width="1.1" />
<line x1="485.50" y1="47.50" x2="485.50" y2="50.10" stroke="#d8d8d8" stroke-width="1.1" />
<line x1="485.50" y1="363.90" x2="485.50" y2="366.50" stroke="#d8d8d8" stroke-width="1.1" />
<line x1="493.50" y1="47.50" x2="493.50" y2="50.10" stroke="#d8d8d8" stroke-width="1.1" />
<line x1="493.50" y1="363.90" x2="493.50" y2="366.50" stroke="#d8d8d8" stroke-width="1.1" />
<line x1="501.50" y1="47.50" x2="501.50" y2="50.10" stroke="#d8d8d8" stroke-width="1.1" />
<line x1="501.50" y1="363.90" x2="501.50" y2="366.50" stroke="#d8d8d8" stroke-width="1.1" />
<line x1="509.50" y1="47.50" x2="509.50" y2="50.10" stroke="#d8d8d8" stroke-width="1.1" />
<line x1="509.50" y1="363.90" x2="509.50" y2="366.50" stroke="#d8d8d8" stroke-width="1.1" />
<line x1="517.50" y1="47.50" x2="517.50" y2="50.10" stroke="#d8d8d8" stroke-width="1.1" />
<line x1="517.50" y1="363.90" x2="517.50" y2="366.50" stroke="#d8d8d8" stroke-width="1.1" />
<line x1="525.50" y1="47.50" x2="525.50" y2="50.10" stroke="#d8d8d8" stroke-width="1.1" />
<line x1="525.50" y1="363.90" x2="525.50" y2="366.50" stroke="#d8d8d8" stroke-width="1.1" />
<line x1="533.50" y1="47.50" x2="533.50" y2="50.10" stroke="#d8d8d8" stroke-width="1.1" />
<line x1="533.50" y1="363.90" x2="533.50" y2="366.50" stroke="#d8d8d8" stroke-width="1.1" />
<line x1="541.50" y1="47.50" x2="541.50" y2="50.10" stroke="#d8d8d8" stroke-width="1.1" />
<line x1="541.50" y1="363.90" x2="541.50" y2="366.50" stroke="#d8d8d8" stroke-width="1.1" />
<line x1="549.50" y1="47.50" x2="549.50" y2="50.10" stroke="#d8d8d8" stroke-width="1.1" />
<line x1="549.50" y1="363.90" x2="549.50" y2="366.50" stroke="#d8d8d8" stroke-width="1.1" />
<line x1="557.50" y1="47.50" x2="557.50" y2="50.10" stroke="#d8d8d8" stroke-width="1.1" />
<line x1="557.50" y1="363.90" x2="557.50" y2="366.50" stroke="#d8d8d8" stroke-width="1.1" />
<line x1="565.50" y1="47.50" x2="565.50" y2="50.10" stroke="#d8d8d8" stroke-width="1.1" />
<line x1="565.50" y1="363.90" x2="565.50" y2="366.50" stroke="#d8d8d8" stroke-width="1.1" />
<line x1="573.50" y1="47.50" x2="573.50" y2="50.10" stroke="#d8d8d8" stroke-width="1.1" />
<line x1="573.50" y1="363.90" x2="573.50" y2="366.50" stroke="#d8d8d8" stroke-width="1.1" />
<line x1="581.50" y1="47.50" x2="581.50" y2="50.10" stroke="#d8d8d8" stroke-width="1.1" />
<line x1="581.50" y1="363.90" x2="581.50" y2="366.50" stroke="#d8d8d8" stroke-width="1.1" />
<line x1="66.50" y1="54.50" x2="69.30" y2="54.50" stroke="#d8d8d8" stroke-width="1.1" />
<line x1="66.50" y1="62.50" x2="69.30" y2="62.50" stroke="#d8d8d8" stroke-width="1.1" />
<line x1="66.50" y1="70.50" x2="69.30" y2="70.50" stroke="#d8d8d8" stroke-width="1.1" />
<line x1="66.50" y1="78.50" x2="69.30" y2="78.50" stroke="#d8d8d8" stroke-width="1.1" />
<line x1="66.50" y1="86.50" x2="69.30" y2="86.50" stroke="#d8d8d8" stroke-width="1.1" />
<line x1="66.50" y1="94.50" x2="69.30" y2="94.50" stroke="#d8d8d8" stroke-width="1.1" />
<line x1="66.50" y1="102.50" x2="69.30" y2="102.50" stroke="#d8d8d8" stroke-width="1.1" />
<line x1="66.50" y1="110.50" x2="69.30" y2="110.50" stroke="#d8d8d8" stroke-width="1.1" />
<line x1="66.50" y1="118.50" x2="69.30" y2="118.50" stroke="#d8d8d8" stroke-width="1.1" />
<line x1="66.50" y1="126.50" x2="69.30" y2="126.50" stroke="#d8d8d8" stroke-width="1.1" />
<line x1="66.50" y1="134.50" x2="69.30" y2="134.50" stroke="#d8d8d8" stroke-width="1.1" />
<line x1="66.50" y1="142.50" x2="69.30" y2="142.50" stroke="#d8d8d8" stroke-width="1.1" />
<line x1="66.50" y1="150.50" x2="69.30" y2="150.50" stroke="#d8d8d8" stroke-width="1.1" />
<line x1="66.50" y1="158.50" x2="69.30" y2="158.50" stroke="#d8d8d8" stroke-width="1.1" />
<line x1="66.50" y1="166.50" x2="69.30" y2="166.50" stroke="#d8d8d8" stroke-width="1.1" />
<line x1="66.50" y1="174.50" x2="69.30" y2="174.50" stroke="#d8d8d8" stroke-width="1.1" />
<line x1="66.50" y1="182.50" x2="69.30" y2="182.50" stroke="#d8d8d8" stroke-width="1.1" />
<line x1="66.50" y1="190.50" x2="69.30" y2="190.50" stroke="#d8d8d8" stroke-width="1.1" />
<line x1="66.50" y1="198.50" x2="69.30" y2="198.50" stroke="#d8d8d8" stroke-width="1.1" />
<line x1="66.50" y1="206.50" x2="69.30" y2="206.50" stroke="#d8d8d8" stroke-width="1.1" />
<line x1="66.50" y1="214.50" x2="69.30" y2="214.50" stroke="#d8d8d8" stroke-width="1.1" />
<line x1="66.50" y1="222.50" x2="69.30" y2="222.50" stroke="#d8d8d8" stroke-width="1.1" />
<line x1="66.50" y1="230.50" x2="69.30" y2="230.50" stroke="#d8d8d8" stroke-width="1.1" />
<line x1="66.50" y1="238.50" x2="69.30" y2="238.50" stroke="#d8d8d8" stroke-width="1.1" />
<line x1="66.50" y1="246.50" x2="69.30" y2="246.50" stroke="#d8d8d8" stroke-width="1.1" />
<line x1="66.50" y1="254.50" x2="69.30" y2="254.50" stroke="#d8d8d8" stroke-width="1.1" />
<line x1="66.50" y1="262.50" x2="69.30" y2="262.50" stroke="#d8d8d8" stroke-width="1.1" />
<line x1="66.50" y1="270.50" x2="69.30" y2="270.50" stroke="#d8d8d8" stroke-width="1.1" />
<line x1="66.50" y1="278.50" x2="69.30" y2="278.50" stroke="#d8d8d8" stroke-width="1.1" />
<line x1="66.50" y1="286.50" x2="69.30" y2="286.50" stroke="#d8d8d8" stroke-width="1.1" />
<line x1="66.50" y1="294.50" x2="69.30" y2="294.50" stroke="#d8d8d8" stroke-width="1.1" />
<line x1="66.50" y1="302.50" x2="69.30" y2="302.50" stroke="#d8d8d8" stroke-width="1.1" />
<line x1="66.50" y1="310.50" x2="69.30" y2="310.50" stroke="#d8d8d8" stroke-width="1.1" />
<line x1="66.50" y1="318.50" x2="69.30" y2="318.50" stroke="#d8d8d8" stroke-width="1.1" />
<line x1="66.50" y1="326.50" x2="69.30" y2="326.50" stroke="#d8d8d8" stroke-width="1.1" />
<line x1="66.50" y1="334.50" x2="69.30" y2="334.50" stroke="#d8d8d8" stroke-width="1.1" />
<line x1="66.50" y1="342.50" x2="69.30" y2="342.50" stroke="#d8d8d8" stroke-width="1.1" />
<line x1="66.50" y1="350.50" x2="69.30" y2="350.50" stroke="#d8d8d8" stroke-width="1.1" />
<line x1="66.50" y1="358.50" x2="69.30" y2="358.50" stroke="#d8d8d8" stroke-width="1.1" />
<line x1="66.50" y1="206.50" x2="588.00" y2="206.50" stroke="#c4eec0" stroke-width="1.3" />
<line x1="373.50" y1="47.50" x2="373.50" y2="366.50" stroke="#c4eec0" stroke-width="1.3" />
<line x1="69.50" y1="203.50" x2="69.50" y2="209.50" stroke="#c4eec0" stroke-width="1.1" />
<line x1="77.50" y1="203.50" x2="77.50" y2="209.50" stroke="#c4eec0" stroke-width="1.1" />
<line x1="85.50" y1="203.50" x2="85.50" y2="209.50" stroke="#c4eec0" stroke-width="1.1" />
<line x1="93.50" y1="203.50" x2="93.50" y2="209.50" stroke="#c4eec0" stroke-width="1.1" />
<line x1="101.50" y1="203.50" x2="101.50" y2="209.50" stroke="#c4eec0" stroke-width="1.1" />
<line x1="109.50" y1="203.50" x2="109.50" y2="209.50" stroke="#c4eec0" stroke-width="1.1" />
<line x1="117.50" y1="203.50" x2="117.50" y2="209.50" stroke="#c4eec0" stroke-width="1.1" />
<line x1="125.50" y1="203.50" x2="125.50" y2="209.50" stroke="#c4eec0" stroke-width="1.1" />
<line x1="133.50" y1="203.50" x2="133.50" y2="209.50" stroke="#c4eec0" stroke-width="1.1" />
<line x1="141.50" y1="203.50" x2="141.50" y2="209.50" stroke="#c4eec0" stroke-width="1.1" />
<line x1="149.50" y1="203.50" x2="149.50" y2="209.50" stroke="#c4eec0" stroke-width="1.1" />
<line x1="157.50" y1="203.50" x2="157.50" y2="209.50" stroke="#c4eec0" stroke-width="1.1" />
<line x1="165.50" y1="203.50" x2="165.50" y2="209.50" stroke="#c4eec0" stroke-width="1.1" />
<line x1="173.50" y1="203.50" x2="173.50" y2="209.50" stroke="#c4eec0" stroke-width="1.1" />
<line x1="181.50" y1="203.50" x2="181.50" y2="209.50" stroke="#c4eec0" stroke-width="1.1" />
<line x1="189.50" y1="203.50" x2="189.50" y2="209.50" stroke="#c4eec0" stroke-width="1.1" />
<line x1="197.50" y1="203.50" x2="197.50" y2="209.50" stroke="#c4eec0" stroke-width="1.1" />
<line x1="205.50" y1="203.50" x2="205.50" y2="209.50" stroke="#c4eec0" stroke-width="1.1" />
<line x1="213.50" y1="203.50" x2="213.50" y2="209.50" stroke="#c4eec0" stroke-width="1.1" />
<line x1="221.50" y1="203.50" x2="221.50" y2="209.50" stroke="#c4eec0" stroke-width="1.1" />
<line x1="229.50" y1="203.50" x2="229.50" y2="209.50" stroke="#c4eec0" stroke-width="1.1" />
<line x1="237.50" y1="203.50" x2="237.50" y2="209.50" stroke="#c4eec0" stroke-width="1.1" />
<line x1="245.50" y1="203.50" x2="245.50" y2="209.50" stroke="#c4eec0" stroke-width="1.1" />
<line x1="253.50" y1="203.50" x2="253.50" y2="209.50" stroke="#c4eec0" stroke-width="1.1" />
<line x1="261.50" y1="203.50" x2="261.50" y2="209.50" stroke="#c4eec0" stroke-width="1.1" />
<line x1="269.50" y1="203.50" x2="269.50" y2="209.50" stroke="#c4eec0" stroke-width="1.1" />
<line x1="277.50" y1="203.50" x2="277.50" y2="209.50" stroke="#c4eec0" stroke-width="1.1" />
<line x1="285.50" y1="203.50" x2="285.50" y2="209.50" stroke="#c4eec0" stroke-width="1.1" />
<line x1="293.50" y1="203.50" x2="293.50" y2="209.50" stroke="#c4eec0" stroke-width="1.1" />
<line x1="301.50" y1="203.50" x2="301.50" y2="209.50" stroke="#c4eec0" stroke-width="1.1" />
<line x1="309.50" y1="203.50" x2="309.50" y2="209.50" stroke="#c4eec0" stroke-width="1.1" />
<line x1="317.50" y1="203.50" x2="317.50" y2="209.50" stroke="#c4eec0" stroke-width="1.1" />
<line x1="325.50" y1="203.50" x2="325.50" y2="209.50" stroke="#c4eec0" stroke-width="1.1" />
<line x1="333.50" y1="203.50" x2="333.50" y2="209.50" stroke="#c4eec0" stroke-width="1.1" />
<line x1="341.50" y1="203.50" x2="341.50" y2="209.50" stroke="#c4eec0" stroke-width="1.1" />
<line x1="349.50" y1="203.50" x2="349.50" y2="209.50" stroke="#c4eec0" stroke-width="1.1" />
<line x1="357.50" y1="203.50" x2="357.50" y2="209.50" stroke="#c4eec0" stroke-width="1.1" />
<line x1="365.50" y1="203.50" x2="365.50" y2="209.50" stroke="#c4eec0" stroke-width="1.1" />
<line x1="373.50" y1="203.50" x2="373.50" y2="209.50" stroke="#c4eec0" stroke-width="1.1" />
<line x1="381.50" y1="203.50" x2="381.50" y2="209.50" stroke="#c4eec0" stroke-width="1.1" />
<line x1="389.50" y1="203.50" x2="389.50" y2="209.50" stroke="#c4eec0" stroke-width="1.1" />
<line x1="397.50" y1="203.50" x2="397.50" y2="209.50" stroke="#c4eec0" stroke-width="1.1" />
<line x1="405.50" y1="203.50" x2="405.50" y2="209.50" stroke="#c4eec0" stroke-width="1.1" />
<line x1="413.50" y1="203.50" x2="413.50" y2="209.50" stroke="#c4eec0" stroke-width="1.1" />
<line x1="421.50" y1="203.50" x2="421.50" y2="209.50" stroke="#c4eec0" stroke-width="1.1" />
<line x1="429.50" y1="203.50" x2="429.50" y2="209.50" stroke="#c4eec0" stroke-width="1.1" />
<line x1="437.50" y1="203.50" x2="437.50" y2="209.50" stroke="#c4eec0" stroke-width="1.1" />
<line x1="445.50" y1="203.50" x2="445.50" y2="209.50" stroke="#c4eec0" stroke-width="1.1" />
<line x1="453.50" y1="203.50" x2="453.50" y2="209.50" stroke="#c4eec0" stroke-width="1.1" />
<line x1="461.50" y1="203.50" x2="461.50" y2="209.50" stroke="#c4eec0" stroke-width="1.1" />
<line x1="469.50" y1="203.50" x2="469.50" y2="209.50" stroke="#c4eec0" stroke-width="1.1" />
<line x1="477.50" y1="203.50" x2="477.50" y2="209.50" stroke="#c4eec0" stroke-width="1.1" />
<line x1="485.50" y1="203.50" x2="485.50" y2="209.50" stroke="#c4eec0" stroke-width="1.1" />
<line x1="493.50" y1="203.50" x2="493.50" y2="209.50" stroke="#c4eec0" stroke-width="1.1" />
<line x1="501.50" y1="203.50" x2="501.50" y2="209.50" stroke="#c4eec0" stroke-width="1.1" />
<line x1="509.50" y1="203.50" x2="509.50" y2="209.50" stroke="#c4eec0" stroke-width="1.1" />
<line x1="517.50" y1="203.50" x2="517.50" y2="209.50" stroke="#c4eec0" stroke-width="1.1" />
<line x1="525.50" y1="203.50" x2="525.50" y2="209.50" stroke="#c4eec0" stroke-width="1.1" />
<line x1="533.50" y1="203.50" x2="533.50" y2="209.50" stroke="#c4eec0" stroke-width="1.1" />
<line x1="541.50" y1="203.50" x2="541.50" y2="209.50" stroke="#c4eec0" stroke-width="1.1" />
<line x1="549.50" y1="203.50" x2="549.50" y2="209.50" stroke="#c4eec0" stroke-width="1.1" />
<line x1="557.50" y1="203.50" x2="557.50" y2="209.50" stroke="#c4eec0" stroke-width="1.1" />
<line x1="565.50" y1="203.50" x2="565.50" y2="209.50" stroke="#c4eec0" stroke-width="1.1" />
<line x1="573.50" y1="203.50" x2="573.50" y2="209.50" stroke="#c4eec0" stroke-width="1.1" />
<line x1="581.50" y1="203.50" x2="581.50" y2="209.50" stroke="#c4eec0" stroke-width="1.1" />
<line x1="370.70" y1="46.50" x2="376.30" y2="46.50" stroke="#c4eec0" stroke-width="1.1" />
<line x1="370.70" y1="54.50" x2="376.30" y2="54.50" stroke="#c4eec0" stroke-width="1.1" />
<line x1="370.70" y1="62.50" x2="376.30" y2="62.50" stroke="#c4eec0" stroke-width="1.1" />
<line x1="370.70" y1="70.50" x2="376.30" y2="70.50" stroke="#c4eec0" stroke-width="1.1" />
<line x1="370.70" y1="78.50" x2="376.30" y2="78.50" stroke="#c4eec0" stroke-width="1.1" />
<line x1="370.70" y1="86.50" x2="376.30" y2="86.50" stroke="#c4eec0" stroke-width="1.1" />
<line x1="370.70" y1="94.50" x2="376.30" y2="94.50" stroke="#c4eec0" stroke-width="1.1" />
<line x1="370.70" y1="102.50" x2="376.30" y2="102.50" stroke="#c4eec0" stroke-width="1.1" />
<line x1="370.70" y1="110.50" x2="376.30" y2="110.50" stroke="#c4eec0" stroke-width="1.1" />
<line x1="370.70" y1="118.50" x2="376.30" y2="118.50" stroke="#c4eec0" stroke-width="1.1" />
<line x1="370.70" y1="126.50" x2="376.30" y2="126.50" stroke="#c4eec0" stroke-width="1.1" />
<line x1="370.70" y1="134.50" x2="376.30" y2="134.50" stroke="#c4eec0" stroke-width="1.1" />
<line x1="370.70" y1="142.50" x2="376.30" y2="142.50" stroke="#c4eec0" stroke-width="1.1" />
<line x1="370.70" y1="150.50" x2="376.30" y2="150.50" stroke="#c4eec0" stroke-width="1.1" />
<line x1="370.70" y1="158.50" x2="376.30" y2="158.50" stroke="#c4eec0" stroke-width="1.1" />
<line x1="370.70" y1="166.50" x2="376.30" y2="166.50" stroke="#c4eec0" stroke-width="1.1" />
<line x1="370.70" y1="174.50" x2="376.30" y2="174.50" stroke="#c4eec0" stroke-width="1.1" />
<line x1="370.70" y1="182.50" x2="376.30" y2="182.50" stroke="#c4eec0" stroke-width="1.1" />
<line x1="370.70" y1="190.50" x2="376.30" y2="190.50" stroke="#c4eec0" stroke-width="1.1" />
<line x1="370.70" y1="198.50" x2="376.30" y2="198.50" stroke="#c4eec0" stroke-width="1.1" />
<line x1="370.70" y1="206.50" x2="376.30" y2="206.50" stroke="#c4eec0" stroke-width="1.1" />
<line x1="370.70" y1="214.50" x2="376.30" y2="214.50" stroke="#c4eec0" stroke-width="1.1" />
<line x1="370.70" y1="222.50" x2="376.30" y2="222.50" stroke="#c4eec0" stroke-width="1.1" />
<line x1="370.70" y1="230.50" x2="376.30" y2="230.50" stroke="#c4eec0" stroke-width="1.1" />
<line x1="370.70" y1="238.50" x2="376.30" y2="238.50" stroke="#c4eec0" stroke-width="1.1" />
<line x1="370.70" y1="246.50" x2="376.30" y2="246.50" stroke="#c4eec0" stroke-width="1.1" />
<line x1="370.70" y1="254.50" x2="376.30" y2="254.50" stroke="#c4eec0" stroke-width="1.1" />
<line x1="370.70" y1="262.50" x2="376.30" y2="262.50" stroke="#c4eec0" stroke-width="1.1" />
<line x1="370.70" y1="270.50" x2="376.30" y2="270.50" stroke="#c4eec0" stroke-width="1.1" />
<line x1="370.70" y1="278.50" x2="376.30" y2="278.50" stroke="#c4eec0" stroke-width="1.1" />
<line x1="370.70" y1="286.50" x2="376.30" y2="286.50" stroke="#c4eec0" stroke-width="1.1" />
<line x1="370.70" y1="294.50" x2="376.30" y2="294.50" stroke="#c4eec0" stroke-width="1.1" />
<line x1="370.70" y1="302.50" x2="376.30" y2="302.50" stroke="#c4eec0" stroke-width="1.1" />
<line x1="370.70" y1="310.50" x2="376.30" y2="310.50" stroke="#c4eec0" stroke-width="1.1" />
<line x1="370.70" y1="318.50" x2="376.30" y2="318.50" stroke="#c4eec0" stroke-width="1.1" />
<line x1="370.70" y1="326.50" x2="376.30" y2="326.50" stroke="#c4eec0" stroke-width="1.1" />
<line x1="370.70" y1="334.50" x2="376.30" y2="334.50" stroke="#c4eec0" stroke-width="1.1" />
<line x1="370.70" y1="342.50" x2="376.30" y2="342.50" stroke="#c4eec0" stroke-width="1.1" />
<line x1="370.70" y1="350.50" x2="376.30" y2="350.50" stroke="#c4eec0" stroke-width="1.1" />
<line x1="370.70" y1="358.50" x2="376.30" y2="358.50" stroke="#c4eec0" stroke-width="1.1" />
<line x1="174.50" y1="47.50" x2="174.50" y2="366.50" stroke="#b8dcb0" stroke-width="1.3" />
<line x1="573.50" y1="47.50" x2="573.50" y2="366.50" stroke="#b8dcb0" stroke-width="1.3" />
<line x1="172.30" y1="46.50" x2="174.50" y2="46.50" stroke="#b8dcb0" stroke-width="1.0" />
<line x1="172.30" y1="54.50" x2="174.50" y2="54.50" stroke="#b8dcb0" stroke-width="1.0" />
<line x1="172.30" y1="62.50" x2="174.50" y2="62.50" stroke="#b8dcb0" stroke-width="1.0" />
<line x1="172.30" y1="70.50" x2="174.50" y2="70.50" stroke="#b8dcb0" stroke-width="1.0" />
<line x1="172.30" y1="78.50" x2="174.50" y2="78.50" stroke="#b8dcb0" stroke-width="1.0" />
<line x1="172.30" y1="86.50" x2="174.50" y2="86.50" stroke="#b8dcb0" stroke-width="1.0" />
<line x1="172.30" y1="94.50" x2="174.50" y2="94.50" stroke="#b8dcb0" stroke-width="1.0" />
<line x1="172.30" y1="102.50" x2="174.50" y2="102.50" stroke="#b8dcb0" stroke-width="1.0" />
<line x1="172.30" y1="110.50" x2="174.50" y2="110.50" stroke="#b8dcb0" stroke-width="1.0" />
<line x1="172.30" y1="118.50" x2="174.50" y2="118.50" stroke="#b8dcb0" stroke-width="1.0" />
<line x1="172.30" y1="126.50" x2="174.50" y2="126.50" stroke="#b8dcb0" stroke-width="1.0" />
<line x1="172.30" y1="134.50" x2="174.50" y2="134.50" stroke="#b8dcb0" stroke-width="1.0" />
<line x1="172.30" y1="142.50" x2="174.50" y2="142.50" stroke="#b8dcb0" stroke-width="1.0" />
<line x1="172.30" y1="150.50" x2="174.50" y2="150.50" stroke="#b8dcb0" stroke-width="1.0" />
<line x1="172.30" y1="158.50" x2="174.50" y2="158.50" stroke="#b8dcb0" stroke-width="1.0" />
<line x1="172.30" y1="166.50" x2="174.50" y2="166.50" stroke="#b8dcb0" stroke-width="1.0" />
<line x1="172.30" y1="174.50" x2="174.50" y2="174.50" stroke="#b8dcb0" stroke-width="1.0" />
<line x1="172.30" y1="182.50" x2="174.50" y2="182.50" stroke="#b8dcb0" stroke-width="1.0" />
<line x1="172.30" y1="190.50" x2="174.50" y2="190.50" stroke="#b8dcb0" stroke-width="1.0" />
<line x1="172.30" y1="198.50" x2="174.50" y2="198.50" stroke="#b8dcb0" stroke-width="1.0" />
<line x1="172.30" y1="206.50" x2="174.50" y2="206.50" stroke="#b8dcb0" stroke-width="1.0" />
<line x1="172.30" y1="214.50" x2="174.50" y2="214.50" stroke="#b8dcb0" stroke-width="1.0" />
<line x1="172.30" y1="222.50" x2="174.50" y2="222.50" stroke="#b8dcb0" stroke-width="1.0" />
<line x1="172.30" y1="230.50" x2="174.50" y2="230.50" stroke="#b8dcb0" stroke-width="1.0" />
<line x1="172.30" y1="238.50" x2="174.50" y2="238.50" stroke="#b8dcb0" stroke-width="1.0" />
<line x1="172.30" y1="246.50" x2="174.50" y2="246.50" stroke="#b8dcb0" stroke-width="1.0" />
<line x1="172.30" y1="254.50" x2="174.50" y2="254.50" stroke="#b8dcb0" stroke-width="1.0" />
<line x1="172.30" y1="262.50" x2="174.50" y2="262.50" stroke="#b8dcb0" stroke-width="1.0" />
<line x1="172.30" y1="270.50" x2="174.50" y2="270.50" stroke="#b8dcb0" stroke-width="1.0" />
<line x1="172.30" y1="278.50" x2="174.50" y2="278.50" stroke="#b8dcb0" stroke-width="1.0" />
<line x1="172.30" y1="286.50" x2="174.50" y2="286.50" stroke="#b8dcb0" stroke-width="1.0" />
<line x1="172.30" y1="294.50" x2="174.50" y2="294.50" stroke="#b8dcb0" stroke-width="1.0" />
<line x1="172.30" y1="302.50" x2="174.50" y2="302.50" stroke="#b8dcb0" stroke-width="1.0" />
<line x1="172.30" y1="310.50" x2="174.50" y2="310.50" stroke="#b8dcb0" stroke-width="1.0" />
<line x1="172.30" y1="318.50" x2="174.50" y2="318.50" stroke="#b8dcb0" stroke-width="1.0" />
<line x1="172.30" y1="326.50" x2="174.50" y2="326.50" stroke="#b8dcb0" stroke-width="1.0" />
<line x1="172.30" y1="334.50" x2="174.50" y2="334.50" stroke="#b8dcb0" stroke-width="1.0" />
<line x1="172.30" y1="342.50" x2="174.50" y2="342.50" stroke="#b8dcb0" stroke-width="1.0" />
<line x1="172.30" y1="350.50" x2="174.50" y2="350.50" stroke="#b8dcb0" stroke-width="1.0" />
<line x1="172.30" y1="358.50" x2="174.50" y2="358.50" stroke="#b8dcb0" stroke-width="1.0" />
<text x="176.00" y="60.60" fill="#a8e4a0" text-anchor="end" style="font-family:'Liberation Sans';font-size:13.3px;font-weight:normal;letter-spacing:1.1px;" stroke="#a8e4a0" stroke-width="0.3">-4.44</text>
<text x="175.20" y="60.60" fill="#a8e4a0" text-anchor="start" style="font-family:'Liberation Sans';font-size:13.3px;font-weight:normal;letter-spacing:1.1px;" stroke="#a8e4a0" stroke-width="0.3">MHz</text>
<text x="341.50" y="60.60" fill="#a8e4a0" text-anchor="start" style="font-family:'Liberation Sans';font-size:13.3px;font-weight:normal;letter-spacing:1.1px;" stroke="#a8e4a0" stroke-width="0.3">26.81MHz</text>
<text x="541.00" y="60.60" fill="#a8e4a0" text-anchor="start" style="font-family:'Liberation Sans';font-size:13.3px;font-weight:normal;letter-spacing:1.1px;" stroke="#a8e4a0" stroke-width="0.3">58.06M</text>
<text x="172.00" y="92.00" fill="#a8e4a0" text-anchor="end" style="font-family:'Liberation Sans';font-size:13.3px;font-weight:normal;letter-spacing:1.1px;" stroke="#a8e4a0" stroke-width="0.3">4<tspan dx="-1.2">1</tspan><tspan dx="-1.0">.6dB</tspan></text>
<text x="575.50" y="92.00" fill="#a8e4a0" text-anchor="start" style="font-family:'Liberation Sans';font-size:13.3px;font-weight:normal;letter-spacing:1.1px;" stroke="#a8e4a0" stroke-width="0.3">4<tspan dx="-1.2">1</tspan><tspan dx="-1.0">.6dB</tspan></text>
<text x="172.00" y="132.00" fill="#a8e4a0" text-anchor="end" style="font-family:'Liberation Sans';font-size:13.3px;font-weight:normal;letter-spacing:1.1px;" stroke="#a8e4a0" stroke-width="0.3">2<tspan dx="-1.2">1</tspan><tspan dx="-1.0">.6dB</tspan></text>
<text x="575.50" y="132.00" fill="#a8e4a0" text-anchor="start" style="font-family:'Liberation Sans';font-size:13.3px;font-weight:normal;letter-spacing:1.1px;" stroke="#a8e4a0" stroke-width="0.3">2<tspan dx="-1.2">1</tspan><tspan dx="-1.0">.6dB</tspan></text>
<text x="172.00" y="172.00" fill="#a8e4a0" text-anchor="end" style="font-family:'Liberation Sans';font-size:13.3px;font-weight:normal;letter-spacing:1.1px;" stroke="#a8e4a0" stroke-width="0.3"><tspan dx="-1.2">1</tspan><tspan dx="-1.0">.6dB</tspan></text>
<text x="575.50" y="172.00" fill="#a8e4a0" text-anchor="start" style="font-family:'Liberation Sans';font-size:13.3px;font-weight:normal;letter-spacing:1.1px;" stroke="#a8e4a0" stroke-width="0.3"><tspan dx="-1.2">1</tspan><tspan dx="-1.0">.6dB</tspan></text>
<text x="172.00" y="212.00" fill="#a8e4a0" text-anchor="end" style="font-family:'Liberation Sans';font-size:13.3px;font-weight:normal;letter-spacing:1.1px;" stroke="#a8e4a0" stroke-width="0.3">-<tspan dx="-1.2">1</tspan><tspan dx="-1.0">8.4dB</tspan></text>
<text x="575.50" y="212.00" fill="#a8e4a0" text-anchor="start" style="font-family:'Liberation Sans';font-size:13.3px;font-weight:normal;letter-spacing:1.1px;" stroke="#a8e4a0" stroke-width="0.3">-<tspan dx="-1.2">1</tspan><tspan dx="-1.0">8.4dB</tspan></text>
<text x="172.00" y="252.00" fill="#a8e4a0" text-anchor="end" style="font-family:'Liberation Sans';font-size:13.3px;font-weight:normal;letter-spacing:1.1px;" stroke="#a8e4a0" stroke-width="0.3">-38.4dB</text>
<text x="575.50" y="252.00" fill="#a8e4a0" text-anchor="start" style="font-family:'Liberation Sans';font-size:13.3px;font-weight:normal;letter-spacing:1.1px;" stroke="#a8e4a0" stroke-width="0.3">-38.4dB</text>
<text x="172.00" y="292.00" fill="#a8e4a0" text-anchor="end" style="font-family:'Liberation Sans';font-size:13.3px;font-weight:normal;letter-spacing:1.1px;" stroke="#a8e4a0" stroke-width="0.3">-58.4dB</text>
<text x="575.50" y="292.00" fill="#a8e4a0" text-anchor="start" style="font-family:'Liberation Sans';font-size:13.3px;font-weight:normal;letter-spacing:1.1px;" stroke="#a8e4a0" stroke-width="0.3">-58.4dB</text>
<text x="172.00" y="332.00" fill="#a8e4a0" text-anchor="end" style="font-family:'Liberation Sans';font-size:13.3px;font-weight:normal;letter-spacing:1.1px;" stroke="#a8e4a0" stroke-width="0.3">-78.4dB</text>
<text x="575.50" y="332.00" fill="#a8e4a0" text-anchor="start" style="font-family:'Liberation Sans';font-size:13.3px;font-weight:normal;letter-spacing:1.1px;" stroke="#a8e4a0" stroke-width="0.3">-78.4dB</text>
<path d="M367.8 47.5 L379.8 47.5 L379.8 50 L373.8 55.5 L367.8 50Z" fill="#1e94d8"/>
<path d="M54 200 L60 200 L65.5 206.5 L60 212.8 L54 212.8Z" fill="#f2ec10"/>
<text x="0" y="0" transform="translate(55.32 209.57) scale(0.6033 1)" fill="#111" style="font-family:'Liberation Sans';font-size:9.38px;font-weight:normal;" stroke="#111" stroke-width="0.5" stroke-linejoin="round" >T</text>
<path d="M55 335 L64 335 M56 333 L56 326.5 L58.5 330 L61 326.5 L61 333" stroke="#c020d0" stroke-width="1.6" fill="none"/>
<path d="M62 328 L66 330.5 L62 333Z" fill="#d030e0"/>
<polyline fill="none" stroke="#9a2cbc" stroke-width="1.15" stroke-linejoin="round" points="202.6,212.0 203.9,209.7 205.2,208.6 206.5,206.1 207.7,206.7 209.0,205.0 210.0,202.1 211.0,202.5 212.0,201.0 213.7,190.8 214.7,172.5 215.7,155.1 216.8,168.0 218.0,184.0 219.2,193.4 220.5,202.7 221.6,204.2 222.8,208.7 223.9,210.5 225.0,213.7 226.2,218.0 227.3,221.4 228.4,225.4 229.5,225.7 230.7,228.9 231.8,233.1 232.9,237.1 234.0,238.3 235.8,261.3 237.1,248.4 238.3,235.0 239.4,202.3 240.5,170.4 241.6,187.4 242.6,201.0 243.6,203.8 244.6,211.1 245.7,213.4 246.7,217.3 247.7,223.0 248.7,223.3 249.7,225.7 250.8,229.2 251.8,228.7 252.8,231.5 253.9,231.3 254.9,231.0 256.0,230.0 257.2,230.6 258.4,232.3 259.6,233.2 260.9,233.3 262.1,236.6 263.2,231.6 264.4,228.8 265.5,226.5 266.5,203.3 267.5,178.9 268.9,228.2 270.6,255.3 271.9,243.1 273.1,231.5 274.4,241.1 275.7,252.0 276.9,248.3 278.0,244.0 279.0,242.7 280.0,241.7 281.0,245.1 282.0,250.0 283.0,247.2 284.0,242.9 285.0,238.3 286.3,233.1 287.6,229.8 288.7,225.0 289.9,219.8 291.0,214.6 292.0,203.2 293.0,189.0 293.6,213.7 294.7,221.8 295.8,228.2 297.0,223.0 298.7,231.1 299.8,238.3 300.9,247.1 302.0,261.9 303.1,273.3 304.6,253.0 306.0,262.0 307.1,258.3 308.2,257.3 309.3,260.0 310.4,263.2 311.8,237.0 313.3,260.2 314.5,239.8 315.7,216.3 316.9,196.2 318.0,205.6 319.1,215.1 320.6,220.0 322.0,228.2 323.0,222.0 324.9,231.1 326.4,236.8 327.8,241.3 328.9,240.6 330.0,238.0 331.1,243.6 332.2,248.6 334.0,244.0 335.3,249.1 336.6,251.5 338.1,257.4 339.5,264.6 340.6,255.9 341.7,245.7 343.6,196.2 345.3,218.0 346.8,223.4 348.2,228.2 349.5,222.0 351.1,237.0 352.6,240.9 354.0,244.2 355.0,240.9 356.0,238.0 357.2,241.6 358.4,242.8 360.0,238.0 361.4,241.3 362.8,241.3 363.5,257.3 364.6,252.9 365.7,248.6 367.1,223.7 368.6,197.7 370.1,247.1 372.0,240.0 373.1,234.5 374.1,232.9 375.2,228.2 376.2,237.5 377.3,245.7 378.6,244.6 380.0,240.0 381.1,242.6 382.1,242.0 383.2,244.2 384.6,248.9 386.1,254.4 387.7,236.1 389.0,258.8 390.0,252.7 391.0,245.4 392.0,240.3 393.0,238.7 394.2,219.6 395.4,200.7 397.0,226.7 398.4,242.8 399.7,248.1 401.3,224.0 402.4,249.4 403.7,270.8 405.0,261.6 406.4,254.8 407.7,250.7 409.0,249.4 410.4,250.5 411.7,254.8 412.7,248.4 413.7,240.0 414.6,284.1 416.4,257.4 417.4,243.4 418.4,231.1 419.4,219.0 420.4,206.7 421.4,218.0 422.4,226.7 423.7,231.2 425.0,238.7 426.2,231.9 427.5,225.4 429.0,246.8 430.4,253.0 431.7,258.8 432.7,258.5 433.7,256.6 434.7,255.1 435.7,252.1 436.8,249.5 437.9,248.3 439.0,246.8 440.4,276.1 441.5,274.7 442.6,275.7 443.7,273.5 444.7,242.4 445.7,208.0 446.7,216.1 447.7,226.7 448.7,227.9 449.8,230.4 450.8,232.7 451.8,236.0 453.0,226.7 454.4,242.8 455.7,244.3 457.0,246.0 458.4,248.0 459.8,249.4 460.9,245.8 462.0,244.0 463.0,244.5 464.1,248.2 465.1,250.8 466.6,248.9 468.0,248.0 469.2,254.3 470.4,260.1 471.5,208.7 473.1,241.4 474.1,238.4 475.1,232.7 476.1,227.4 477.1,222.7 478.5,249.4 479.5,248.5 480.5,247.4 481.5,243.8 482.5,244.1 483.9,245.1 485.3,243.3 486.6,249.0 488.0,252.7 489.4,250.7 490.7,246.0 492.0,249.1 493.3,250.0 494.3,246.3 495.3,243.3 496.3,225.9 497.3,209.3 498.7,236.7 499.7,243.9 500.7,254.0 502.0,248.7 503.3,220.0 504.7,250.0 505.6,263.3 506.8,258.5 508.0,252.7 509.0,247.8 510.0,246.0 511.0,245.8 512.0,248.7 513.4,257.0 514.7,267.3 516.0,243.3 517.4,244.8 518.7,248.7 519.7,250.8 520.7,254.0 522.0,232.4 523.3,214.0 524.6,226.9 526.0,243.3 527.1,234.5 528.2,226.8 529.3,220.7 530.7,250.0 532.0,270.0 533.0,275.3 534.7,256.7 535.7,257.2 536.7,257.0 537.7,261.0 538.7,260.7 540.0,253.8 541.3,246.0 542.3,256.7 543.3,270.0 544.6,262.5 546.0,256.7 547.0,236.8 548.0,218.0 549.4,228.9 550.7,240.7 551.7,235.3 552.7,234.0 553.7,230.5 554.7,224.7 555.7,233.9 556.7,243.3 557.8,250.4 558.9,256.1 560.0,264.7 561.3,246.0 562.6,249.9 564.0,256.7 565.0,255.8 566.0,255.2 567.0,256.8 568.0,255.3 569.0,255.9 570.0,257.3 571.0,262.5 572.0,262.7"/>
<rect x="588.00" y="22.00" width="106.00" height="383.50" fill="#1f1f1f" />
<rect x="588.00" y="52.00" width="100.00" height="57.60" fill="#5b5b59" rx="4" />
<rect x="592.00" y="80.00" width="91.30" height="22.20" fill="#f2f1ee" rx="11" />
<rect x="588.00" y="118.60" width="100.00" height="57.60" fill="#5b5b59" rx="4" />
<rect x="592.00" y="146.60" width="91.30" height="22.20" fill="#f2f1ee" rx="11" />
<rect x="588.00" y="185.20" width="100.00" height="57.60" fill="#f2f1ee" rx="4" />
<rect x="592.00" y="213.20" width="91.30" height="22.20" fill="#9a06d8" rx="11" />
<rect x="588.00" y="251.80" width="100.00" height="57.60" fill="#5b5b59" rx="4" />
<rect x="592.00" y="279.80" width="91.30" height="22.20" fill="#f2f1ee" rx="11" />
<rect x="588.00" y="318.40" width="100.00" height="57.60" fill="#5b5b59" rx="4" />
<rect x="592.00" y="346.40" width="91.30" height="22.20" fill="#f2f1ee" rx="11" />
<text x="0" y="0" transform="translate(626.35 94.60) scale(0.9417 1)" fill="#0c0c0c" style="font-family:'Liberation Sans';font-size:13.52px;font-weight:bold;letter-spacing:1.2px;" >FFT</text>
<text x="0" y="0" transform="translate(626.68 161.00) scale(0.9228 1)" fill="#0c0c0c" style="font-family:'Liberation Sans';font-size:13.66px;font-weight:bold;letter-spacing:1.0px;" >CH1</text>
<text x="0" y="0" transform="translate(607.56 229.80) scale(0.9209 1)" fill="#f4dcf6" style="font-family:'Liberation Sans';font-size:13.66px;font-weight:bold;letter-spacing:1.0px;" >26.81MHz</text>
<text x="0" y="0" transform="translate(606.33 296.10) scale(0.9801 1)" fill="#0c0c0c" style="font-family:'Liberation Sans';font-size:13.23px;font-weight:bold;letter-spacing:1.0px;" >62.50MHz</text>
<text x="0" y="0" transform="translate(616.64 362.80) scale(0.9332 1)" fill="#0c0c0c" style="font-family:'Liberation Sans';font-size:13.52px;font-weight:bold;letter-spacing:1.0px;" >61.6dB</text>
<text x="0" y="0" transform="translate(626.48 37.05) scale(1.0063 1)" fill="#2cb2c8" style="font-family:'Liberation Sans';font-size:12.35px;font-weight:normal;letter-spacing:1.5px;" stroke="#2cb2c8" stroke-width="0.6" stroke-linejoin="round" >FFT</text>
<text x="0" y="0" transform="translate(630.49 399.85) scale(1.0101 1)" fill="#2cb2c8" style="font-family:'Liberation Sans';font-size:13.23px;font-weight:normal;letter-spacing:0.5px;" stroke="#2cb2c8" stroke-width="0.6" stroke-linejoin="round" >1/2</text>
<path transform="translate(616.20 61.20) scale(1.0)" d="M5 1.5H11M3.5 4.5H13M7.5 4.5L4.5 10H12M10 7.5L12.5 10.5M1.5 1L2.5 2.5M0.5 5H2.5V10.5L0.5 12.5M2 11Q4 13.5 14 13.5" fill="none" stroke="#3cb4c4" stroke-width="1.25" stroke-linecap="square"/>
<path transform="translate(633.20 61.20) scale(1.0)" d="M2 0.5L0.5 3M1.5 2H6M3.5 2L4.5 3.5M8.5 0.5L7 3M8 2H13M10 2L11 3.5M3 4H11V9.5H3ZM3 5.8H11M3 7.6H11M0.5 11H13.5M4.5 9.5V11Q4 13 1.5 14M9.5 9.5V14" fill="none" stroke="#3cb4c4" stroke-width="1.25" stroke-linecap="square"/>
<path transform="translate(650.20 61.20) scale(1.0)" d="M2 0.5L0.5 3M1.5 2H6M3.5 2L4.5 3.5M8.5 0.5L7 3M8 2H13M10 2L11 3.5M4 5L1.5 9M3 7.5V14M5.5 8H13.5M11 5.5V13Q11 14 9.5 13.5M7.5 10L8.5 11.5" fill="none" stroke="#3cb4c4" stroke-width="1.25" stroke-linecap="square"/>
<path transform="translate(616.50 127.80) scale(1.0)" d="M1 1.5L2 3M6 1.5L5 3M0.5 4H7M3.5 0.5V6M3.5 4L0.5 7M3.5 4L7 6.5M3 7.5L1.5 10.5H7.5M5.5 8.5Q5 12 1 13.5M2.5 11L6.5 13.5M9.5 0.5L8 5M9 3H13.5M12 3Q11 10 7.5 13.5M9.5 6Q11 11 14 13.5" fill="none" stroke="#3cb4c4" stroke-width="1.25" stroke-linecap="square"/>
<path transform="translate(633.50 127.80) scale(1.0)" d="M0.5 4H4.5M2.5 0.5V13Q2.5 14 1.5 13.5M0.5 10L4.5 7.5M6 1H13V4.5H6M6 1V8Q6 12 4.5 14M7 7H13.5M10 4.5V10M8 10H12.5V13.5H8Z" fill="none" stroke="#3cb4c4" stroke-width="1.25" stroke-linecap="square"/>
<path transform="translate(650.50 127.80) scale(1.0)" d="M0.5 1L2 2.5M0 5L1.5 6.5M0.5 13L2.5 9M4.5 1H14M4.5 1V8Q4.5 12 3 14M9 1L8 3M6.5 3H12.5V8.5H6.5ZM6.5 5.7H12.5M9.5 8.5V13.5Q9.5 14 8.5 13.8M7 10.5L5.5 12.5M12 10.5L13.5 12.5" fill="none" stroke="#3cb4c4" stroke-width="1.25" stroke-linecap="square"/>
<path transform="translate(609.50 195.20) scale(1.0)" d="M1.5 4H12.5V10H1.5ZM7 0.5V14" fill="none" stroke="#a040c0" stroke-width="1.25" stroke-linecap="square"/>
<path transform="translate(625.80 195.20) scale(1.0)" d="M0.5 7L1.5 11M4 4V12Q4 13.5 6 13.5H10Q11 13.5 11 11M6 2L8 4.5M11 5L13.5 9" fill="none" stroke="#a040c0" stroke-width="1.25" stroke-linecap="square"/>
<path transform="translate(642.10 195.20) scale(1.0)" d="M3 0.5V4M3 2H5.5M0.5 4H6.5M1 5.5L0.5 8M3 4V8M5.5 5.5L6 7M6 8Q5 12 0.5 14M7 1H14M10.5 1L10 3M8 3H13V10H8ZM10.5 5V9M9.5 10L7.5 14M11.5 10L14 14" fill="none" stroke="#a040c0" stroke-width="1.25" stroke-linecap="square"/>
<path transform="translate(658.40 195.20) scale(1.0)" d="M7 0.5V2M1 2.5H13M5 3.5L3.5 5.5L8 7M8 3.5L5.5 6.5L9 8M1.5 4.5L2.5 6M12.5 4.5L11.5 6M1 6.5L0.5 8M13 6.5L13.5 8M0.5 10H13.5M7 8V14" fill="none" stroke="#a040c0" stroke-width="1.25" stroke-linecap="square"/>
<path transform="translate(608.50 261.80) scale(1.0)" d="M3 0.5V4M3 2H5.5M0.5 4H6.5M1 5.5L0.5 8M3 4V8M5.5 5.5L6 7M6 8Q5 12 0.5 14M7 1H14M10.5 1L10 3M8 3H13V10H8ZM10.5 5V9M9.5 10L7.5 14M11.5 10L14 14" fill="none" stroke="#3cb4c4" stroke-width="1.25" stroke-linecap="square"/>
<path transform="translate(624.80 261.80) scale(1.0)" d="M7 0.5V2M1 2.5H13M5 3.5L3.5 5.5L8 7M8 3.5L5.5 6.5L9 8M1.5 4.5L2.5 6M12.5 4.5L11.5 6M1 6.5L0.5 8M13 6.5L13.5 8M0.5 10H13.5M7 8V14" fill="none" stroke="#3cb4c4" stroke-width="1.25" stroke-linecap="square"/>
<path transform="translate(641.10 261.80) scale(1.0)" d="M1 1.5H5.5V5.5H1ZM3.3 5.5V12M3.3 8.5H5.5M1 8V12.5L5.5 11.5M7 3H14M10.5 0.5V3Q10 5 7 6.5M10.5 3.5L14 6.5M7.5 8H13.5M8 10.5H13V13.5Q13 14 11.5 13.5M10 8L8.5 10.5" fill="none" stroke="#3cb4c4" stroke-width="1.25" stroke-linecap="square"/>
<path transform="translate(657.40 261.80) scale(1.0)" d="M1 1.5H5.5V5.5H1ZM3.3 5.5V12M3.3 8.5H5.5M1 8V12.5L5.5 11.5M7 1.5H13.5M7 1.5V13H14M7 5H12V9.5H7" fill="none" stroke="#3cb4c4" stroke-width="1.25" stroke-linecap="square"/>
<path transform="translate(608.50 328.40) scale(1.0)" d="M6 0.5L3 4H11M9.5 2L11 3.5M0.5 6H13.5M6.5 3.5Q5 7 0.5 9M7 6L13.5 9M6.5 8L3 10M9 8.5L4 12M11 10L3 14" fill="none" stroke="#3cb4c4" stroke-width="1.25" stroke-linecap="square"/>
<path transform="translate(624.80 328.40) scale(1.0)" d="M1.5 3H11M6.5 0.5V6M12.5 1L2 9M0.5 6H13.5M4 8.5H12M5 9V11H11Q11 14 8.5 13.5" fill="none" stroke="#3cb4c4" stroke-width="1.25" stroke-linecap="square"/>
<path transform="translate(641.10 328.40) scale(1.0)" d="M1.5 3H12V10H1.5ZM1.5 6.5H12M7 0.5V12Q7 13.5 9 13.5H13.5V11.5" fill="none" stroke="#3cb4c4" stroke-width="1.25" stroke-linecap="square"/>
<path transform="translate(657.40 328.40) scale(1.0)" d="M1.5 1.5H12.5M4 4L5 6.5M10 4L9 6.5M0.5 8H13.5M7 1.5V14" fill="none" stroke="#3cb4c4" stroke-width="1.25" stroke-linecap="square"/>
<path d="M594.3 196.6 A5 5 0 0 0 594.3 206.6" fill="none" stroke="#9a10d8" stroke-width="2.9"/>
<path d="M596.7 206.6 A5 5 0 0 0 596.7 196.6" fill="none" stroke="#9a10d8" stroke-width="2.9"/>
<path d="M592.0 195.0 L597.3 195.0 L594.7 199.4Z" fill="#9a10d8"/>
<path d="M599.0 208.2 L593.7 208.2 L596.3 203.79999999999998Z" fill="#9a10d8"/>
<path d="M594.3 263.2 A5 5 0 0 0 594.3 273.2" fill="none" stroke="#9a10d8" stroke-width="2.9"/>
<path d="M596.7 273.2 A5 5 0 0 0 596.7 263.2" fill="none" stroke="#9a10d8" stroke-width="2.9"/>
<path d="M592.0 261.59999999999997 L597.3 261.59999999999997 L594.7 266.0Z" fill="#9a10d8"/>
<path d="M599.0 274.8 L593.7 274.8 L596.3 270.4Z" fill="#9a10d8"/>
<path d="M594.3 329.79999999999995 A5 5 0 0 0 594.3 339.79999999999995" fill="none" stroke="#9a10d8" stroke-width="2.9"/>
<path d="M596.7 339.79999999999995 A5 5 0 0 0 596.7 329.79999999999995" fill="none" stroke="#9a10d8" stroke-width="2.9"/>
<path d="M592.0 328.19999999999993 L597.3 328.19999999999993 L594.7 332.59999999999997Z" fill="#9a10d8"/>
<path d="M599.0 341.4 L593.7 341.4 L596.3 336.99999999999994Z" fill="#9a10d8"/>
<rect x="66.70" y="372.20" width="158.90" height="28.80" fill="#f6ef00" />
<path d="M74.3 384 L79.1 380.2 L79.1 395.3" fill="none" stroke="#111" stroke-width="2.1"/>
<text x="0" y="0" transform="translate(85.09 395.07) scale(0.7322 1)" fill="#111" style="font-family:'Liberation Sans';font-size:20.57px;font-weight:normal;letter-spacing:1.5px;" stroke="#111" stroke-width="0.9" stroke-linejoin="round" >DC</text>
<text x="0" y="0" transform="translate(164.47 395.27) scale(0.9668 1)" fill="#111" style="font-family:'Liberation Sans';font-size:17.66px;font-weight:normal;letter-spacing:1.0px;" stroke="#111" stroke-width="0.5" stroke-linejoin="round" >730mV</text>
<rect x="229.60" y="371.80" width="160.80" height="29.70" fill="#b0b0ac" />
<text x="0" y="0" transform="translate(234.79 394.67) scale(0.9497 1)" fill="#111" style="font-family:'Liberation Sans';font-size:23.91px;font-weight:normal;" stroke="#111" stroke-width="0.9" stroke-linejoin="round" >2</text>
<text x="0" y="0" transform="translate(249.53 394.67) scale(0.7759 1)" fill="#111" style="font-family:'Liberation Sans';font-size:19.11px;font-weight:normal;letter-spacing:1.5px;" stroke="#111" stroke-width="0.9" stroke-linejoin="round" >DC</text>
<path d="M368.4 386.6 L372.5 383.6 L372.5 395.5 M375.6 383.4 L380.9 395.1 L386.5 383.4" fill="none" stroke="#111" stroke-width="1.7"/>
<rect x="394.50" y="371.80" width="159.70" height="29.70" fill="#b0b0ac" />
<text x="0" y="0" transform="translate(399.10 395.25) scale(0.9850 1)" fill="#111" style="font-family:'Liberation Sans';font-size:24.13px;font-weight:normal;" stroke="#111" stroke-width="1.0" stroke-linejoin="round" >G</text>
<path d="M428.8 382.8 C 431 374.5, 439 373.5, 442 379 S 452 386.5, 454.5 377.8" fill="none" stroke="#111" stroke-width="2"/>
<text x="0" y="0" transform="translate(475.39 384.65) scale(1.0125 1)" fill="#111" style="font-family:'Liberation Sans';font-size:12.79px;font-weight:bold;letter-spacing:1.2px;" stroke="#111" stroke-width="0.6" stroke-linejoin="round" >1.00KHz</text>
<text x="0" y="0" transform="translate(427.49 397.45) scale(0.9311 1)" fill="#111" style="font-family:'Liberation Sans';font-size:13.52px;font-weight:bold;letter-spacing:1.5px;" stroke="#111" stroke-width="0.6" stroke-linejoin="round" >1.50Vpp</text>
<text x="0" y="0" transform="translate(494.79 397.45) scale(0.9082 1)" fill="#111" style="font-family:'Liberation Sans';font-size:13.52px;font-weight:bold;letter-spacing:1.5px;" stroke="#111" stroke-width="0.6" stroke-linejoin="round" >0mv</text>
<g transform="translate(568 390.7) skewX(-14) translate(-568 -390.7)">
<path d="M563 384.0 L573.8 384.0 L573.8 397.5 L563 397.5 Q558.3 397.5 558.3 390.7 Q558.3 384.0 563 384.0Z" fill="#2a62e4"/>
<rect x="573.00" y="386.20" width="6.20" height="9.80" fill="#f0f0f0" />
<rect x="575.10" y="387.70" width="2.00" height="2.20" fill="#000" />
<rect x="575.10" y="391.80" width="2.00" height="2.20" fill="#000" />
</g>
<rect x="54.00" y="428.00" width="640.00" height="384.00" fill="#000" />
<rect x="66.40" y="428.40" width="104.80" height="23.00" fill="#1c1c1c" />
<text x="0" y="0" transform="translate(68.05 448.50) scale(0.2024 0.2486)" fill="#1f78e6" style="font-family:'Liberation Sans';font-size:100.0px;font-weight:bold" stroke="#1f78e6" stroke-width="8.870" stroke-linejoin="round">H</text>
<text x="0" y="0" transform="translate(84.02 448.58) scale(0.2663 0.2282)" fill="#1f78e6" style="font-family:'Liberation Sans';font-size:100.0px;font-weight:bold" stroke="#1f78e6" stroke-width="8.089" stroke-linejoin="round">a</text>
<text x="0" y="0" transform="translate(100.37 448.50) scale(0.3085 0.2228)" fill="#1f78e6" style="font-family:'Liberation Sans';font-size:100.0px;font-weight:bold" stroke="#1f78e6" stroke-width="7.528" stroke-linejoin="round">n</text>
<text x="0" y="0" transform="translate(119.70 448.31) scale(0.2430 0.2118)" fill="#1f78e6" style="font-family:'Liberation Sans';font-size:100.0px;font-weight:bold" stroke="#1f78e6" stroke-width="8.795" stroke-linejoin="round">t</text>
<text x="0" y="0" transform="translate(128.87 448.58) scale(0.3665 0.2282)" fill="#1f78e6" style="font-family:'Liberation Sans';font-size:100.0px;font-weight:bold" stroke="#1f78e6" stroke-width="6.726" stroke-linejoin="round">e</text>
<text x="0" y="0" transform="translate(148.36 448.50) scale(0.3489 0.2360)" fill="#1f78e6" style="font-family:'Liberation Sans';font-size:100.0px;font-weight:bold" stroke="#1f78e6" stroke-width="6.839" stroke-linejoin="round">k</text>
<rect x="186.00" y="432.00" width="54.30" height="18.30" fill="#10e010" rx="1.5" />
<text x="0" y="0" transform="translate(205.16 445.30) scale(0.9489 1)" fill="#0c200c" style="font-family:'Liberation Sans';font-size:13.52px;font-weight:bold;letter-spacing:0.3px;" >TD</text>
<rect x="254.00" y="432.00" width="15.60" height="18.20" fill="#34c4dc" rx="2" />
<text x="0" y="0" transform="translate(256.39 445.80) scale(1.0103 1)" fill="#061418" style="font-family:'Liberation Sans';font-size:14.97px;font-weight:bold;" stroke="#061418" stroke-width="0.8" stroke-linejoin="round" >H</text>
<rect x="498.00" y="432.00" width="16.30" height="18.40" fill="#34c4dc" rx="2" />
<text x="0" y="0" transform="translate(499.96 446.70) scale(0.9895 1)" fill="#061418" style="font-family:'Liberation Sans';font-size:17.15px;font-weight:bold;" stroke="#061418" stroke-width="0.8" stroke-linejoin="round" >D</text>
<text x="0" y="0" transform="translate(280.76 444.75) scale(0.9904 1)" fill="#f2f2f2" style="font-family:'Liberation Sans';font-size:13.66px;font-weight:normal;letter-spacing:0.8px;" stroke="#f2f2f2" stroke-width="0.6" stroke-linejoin="round" >500us</text>
<text x="0" y="0" transform="translate(339.55 444.75) scale(1.0000 1)" fill="#f2f2f2" style="font-family:'Liberation Sans';font-size:13.66px;font-weight:normal;letter-spacing:0.8px;" stroke="#f2f2f2" stroke-width="0.6" stroke-linejoin="round" >500.00KSa/s</text>
<text x="0" y="0" transform="translate(440.99 444.75) scale(1.0100 1)" fill="#f2f2f2" style="font-family:'Liberation Sans';font-size:13.66px;font-weight:normal;letter-spacing:0.8px;" stroke="#f2f2f2" stroke-width="0.6" stroke-linejoin="round" >4Kpt</text>
<text x="0" y="0" transform="translate(532.47 444.75) scale(0.9752 1)" fill="#f2f2f2" style="font-family:'Liberation Sans';font-size:13.66px;font-weight:normal;letter-spacing:0.8px;" stroke="#f2f2f2" stroke-width="0.6" stroke-linejoin="round" >0.00s</text>
<rect x="589.80" y="432.00" width="16.00" height="18.40" fill="#34c4dc" rx="2" />
<text x="0" y="0" transform="translate(594.16 447.00) scale(0.7890 1)" fill="#061418" style="font-family:'Liberation Sans';font-size:17.15px;font-weight:bold;" stroke="#061418" stroke-width="0.8" stroke-linejoin="round" >T</text>
<text x="0" y="0" transform="translate(609.61 447.64) scale(0.8878 1)" fill="#e6e020" style="font-family:'Liberation Sans';font-size:14.50px;font-weight:normal;letter-spacing:1.0px;" stroke="#e6e020" stroke-width="0.25" stroke-linejoin="round" >0.000V</text>
<rect x="69.00" y="472.10" width="1.00" height="1.00" fill="#b4b4b4" />
<rect x="77.00" y="472.10" width="1.00" height="1.00" fill="#b4b4b4" />
<rect x="85.00" y="472.10" width="1.00" height="1.00" fill="#b4b4b4" />
<rect x="93.00" y="472.10" width="1.00" height="1.00" fill="#b4b4b4" />
<rect x="101.00" y="472.10" width="1.00" height="1.00" fill="#b4b4b4" />
<rect x="109.00" y="472.10" width="1.00" height="1.00" fill="#b4b4b4" />
<rect x="117.00" y="472.10" width="1.00" height="1.00" fill="#b4b4b4" />
<rect x="125.00" y="472.10" width="1.00" height="1.00" fill="#b4b4b4" />
<rect x="133.00" y="472.10" width="1.00" height="1.00" fill="#b4b4b4" />
<rect x="141.00" y="472.10" width="1.00" height="1.00" fill="#b4b4b4" />
<rect x="149.00" y="472.10" width="1.00" height="1.00" fill="#b4b4b4" />
<rect x="157.00" y="472.10" width="1.00" height="1.00" fill="#b4b4b4" />
<rect x="165.00" y="472.10" width="1.00" height="1.00" fill="#b4b4b4" />
<rect x="173.00" y="472.10" width="1.00" height="1.00" fill="#b4b4b4" />
<rect x="181.00" y="472.10" width="1.00" height="1.00" fill="#b4b4b4" />
<rect x="189.00" y="472.10" width="1.00" height="1.00" fill="#b4b4b4" />
<rect x="197.00" y="472.10" width="1.00" height="1.00" fill="#b4b4b4" />
<rect x="205.00" y="472.10" width="1.00" height="1.00" fill="#b4b4b4" />
<rect x="213.00" y="472.10" width="1.00" height="1.00" fill="#b4b4b4" />
<rect x="221.00" y="472.10" width="1.00" height="1.00" fill="#b4b4b4" />
<rect x="229.00" y="472.10" width="1.00" height="1.00" fill="#b4b4b4" />
<rect x="237.00" y="472.10" width="1.00" height="1.00" fill="#b4b4b4" />
<rect x="245.00" y="472.10" width="1.00" height="1.00" fill="#b4b4b4" />
<rect x="253.00" y="472.10" width="1.00" height="1.00" fill="#b4b4b4" />
<rect x="261.00" y="472.10" width="1.00" height="1.00" fill="#b4b4b4" />
<rect x="269.00" y="472.10" width="1.00" height="1.00" fill="#b4b4b4" />
<rect x="277.00" y="472.10" width="1.00" height="1.00" fill="#b4b4b4" />
<rect x="285.00" y="472.10" width="1.00" height="1.00" fill="#b4b4b4" />
<rect x="293.00" y="472.10" width="1.00" height="1.00" fill="#b4b4b4" />
<rect x="301.00" y="472.10" width="1.00" height="1.00" fill="#b4b4b4" />
<rect x="309.00" y="472.10" width="1.00" height="1.00" fill="#b4b4b4" />
<rect x="317.00" y="472.10" width="1.00" height="1.00" fill="#b4b4b4" />
<rect x="325.00" y="472.10" width="1.00" height="1.00" fill="#b4b4b4" />
<rect x="333.00" y="472.10" width="1.00" height="1.00" fill="#b4b4b4" />
<rect x="341.00" y="472.10" width="1.00" height="1.00" fill="#b4b4b4" />
<rect x="349.00" y="472.10" width="1.00" height="1.00" fill="#b4b4b4" />
<rect x="357.00" y="472.10" width="1.00" height="1.00" fill="#b4b4b4" />
<rect x="365.00" y="472.10" width="1.00" height="1.00" fill="#b4b4b4" />
<rect x="373.00" y="472.10" width="1.00" height="1.00" fill="#b4b4b4" />
<rect x="381.00" y="472.10" width="1.00" height="1.00" fill="#b4b4b4" />
<rect x="389.00" y="472.10" width="1.00" height="1.00" fill="#b4b4b4" />
<rect x="397.00" y="472.10" width="1.00" height="1.00" fill="#b4b4b4" />
<rect x="405.00" y="472.10" width="1.00" height="1.00" fill="#b4b4b4" />
<rect x="413.00" y="472.10" width="1.00" height="1.00" fill="#b4b4b4" />
<rect x="421.00" y="472.10" width="1.00" height="1.00" fill="#b4b4b4" />
<rect x="429.00" y="472.10" width="1.00" height="1.00" fill="#b4b4b4" />
<rect x="437.00" y="472.10" width="1.00" height="1.00" fill="#b4b4b4" />
<rect x="445.00" y="472.10" width="1.00" height="1.00" fill="#b4b4b4" />
<rect x="453.00" y="472.10" width="1.00" height="1.00" fill="#b4b4b4" />
<rect x="461.00" y="472.10" width="1.00" height="1.00" fill="#b4b4b4" />
<rect x="469.00" y="472.10" width="1.00" height="1.00" fill="#b4b4b4" />
<rect x="477.00" y="472.10" width="1.00" height="1.00" fill="#b4b4b4" />
<rect x="485.00" y="472.10" width="1.00" height="1.00" fill="#b4b4b4" />
<rect x="493.00" y="472.10" width="1.00" height="1.00" fill="#b4b4b4" />
<rect x="501.00" y="472.10" width="1.00" height="1.00" fill="#b4b4b4" />
<rect x="509.00" y="472.10" width="1.00" height="1.00" fill="#b4b4b4" />
<rect x="517.00" y="472.10" width="1.00" height="1.00" fill="#b4b4b4" />
<rect x="525.00" y="472.10" width="1.00" height="1.00" fill="#b4b4b4" />
<rect x="533.00" y="472.10" width="1.00" height="1.00" fill="#b4b4b4" />
<rect x="541.00" y="472.10" width="1.00" height="1.00" fill="#b4b4b4" />
<rect x="549.00" y="472.10" width="1.00" height="1.00" fill="#b4b4b4" />
<rect x="557.00" y="472.10" width="1.00" height="1.00" fill="#b4b4b4" />
<rect x="565.00" y="472.10" width="1.00" height="1.00" fill="#b4b4b4" />
<rect x="573.00" y="472.10" width="1.00" height="1.00" fill="#b4b4b4" />
<rect x="581.00" y="472.10" width="1.00" height="1.00" fill="#b4b4b4" />
<rect x="589.00" y="472.10" width="1.00" height="1.00" fill="#b4b4b4" />
<rect x="597.00" y="472.10" width="1.00" height="1.00" fill="#b4b4b4" />
<rect x="605.00" y="472.10" width="1.00" height="1.00" fill="#b4b4b4" />
<rect x="613.00" y="472.10" width="1.00" height="1.00" fill="#b4b4b4" />
<rect x="621.00" y="472.10" width="1.00" height="1.00" fill="#b4b4b4" />
<rect x="629.00" y="472.10" width="1.00" height="1.00" fill="#b4b4b4" />
<rect x="637.00" y="472.10" width="1.00" height="1.00" fill="#b4b4b4" />
<rect x="645.00" y="472.10" width="1.00" height="1.00" fill="#b4b4b4" />
<rect x="653.00" y="472.10" width="1.00" height="1.00" fill="#b4b4b4" />
<rect x="661.00" y="472.10" width="1.00" height="1.00" fill="#b4b4b4" />
<rect x="669.00" y="472.10" width="1.00" height="1.00" fill="#b4b4b4" />
<rect x="677.00" y="472.10" width="1.00" height="1.00" fill="#b4b4b4" />
<rect x="69.00" y="492.10" width="1.00" height="1.00" fill="#b4b4b4" />
<rect x="77.00" y="492.10" width="1.00" height="1.00" fill="#b4b4b4" />
<rect x="85.00" y="492.10" width="1.00" height="1.00" fill="#b4b4b4" />
<rect x="93.00" y="492.10" width="1.00" height="1.00" fill="#b4b4b4" />
<rect x="101.00" y="492.10" width="1.00" height="1.00" fill="#b4b4b4" />
<rect x="109.00" y="492.10" width="1.00" height="1.00" fill="#b4b4b4" />
<rect x="117.00" y="492.10" width="1.00" height="1.00" fill="#b4b4b4" />
<rect x="125.00" y="492.10" width="1.00" height="1.00" fill="#b4b4b4" />
<rect x="133.00" y="492.10" width="1.00" height="1.00" fill="#b4b4b4" />
<rect x="141.00" y="492.10" width="1.00" height="1.00" fill="#b4b4b4" />
<rect x="149.00" y="492.10" width="1.00" height="1.00" fill="#b4b4b4" />
<rect x="157.00" y="492.10" width="1.00" height="1.00" fill="#b4b4b4" />
<rect x="165.00" y="492.10" width="1.00" height="1.00" fill="#b4b4b4" />
<rect x="173.00" y="492.10" width="1.00" height="1.00" fill="#b4b4b4" />
<rect x="181.00" y="492.10" width="1.00" height="1.00" fill="#b4b4b4" />
<rect x="189.00" y="492.10" width="1.00" height="1.00" fill="#b4b4b4" />
<rect x="197.00" y="492.10" width="1.00" height="1.00" fill="#b4b4b4" />
<rect x="205.00" y="492.10" width="1.00" height="1.00" fill="#b4b4b4" />
<rect x="213.00" y="492.10" width="1.00" height="1.00" fill="#b4b4b4" />
<rect x="221.00" y="492.10" width="1.00" height="1.00" fill="#b4b4b4" />
<rect x="229.00" y="492.10" width="1.00" height="1.00" fill="#b4b4b4" />
<rect x="237.00" y="492.10" width="1.00" height="1.00" fill="#b4b4b4" />
<rect x="245.00" y="492.10" width="1.00" height="1.00" fill="#b4b4b4" />
<rect x="253.00" y="492.10" width="1.00" height="1.00" fill="#b4b4b4" />
<rect x="261.00" y="492.10" width="1.00" height="1.00" fill="#b4b4b4" />
<rect x="269.00" y="492.10" width="1.00" height="1.00" fill="#b4b4b4" />
<rect x="277.00" y="492.10" width="1.00" height="1.00" fill="#b4b4b4" />
<rect x="285.00" y="492.10" width="1.00" height="1.00" fill="#b4b4b4" />
<rect x="293.00" y="492.10" width="1.00" height="1.00" fill="#b4b4b4" />
<rect x="301.00" y="492.10" width="1.00" height="1.00" fill="#b4b4b4" />
<rect x="309.00" y="492.10" width="1.00" height="1.00" fill="#b4b4b4" />
<rect x="317.00" y="492.10" width="1.00" height="1.00" fill="#b4b4b4" />
<rect x="325.00" y="492.10" width="1.00" height="1.00" fill="#b4b4b4" />
<rect x="333.00" y="492.10" width="1.00" height="1.00" fill="#b4b4b4" />
<rect x="341.00" y="492.10" width="1.00" height="1.00" fill="#b4b4b4" />
<rect x="349.00" y="492.10" width="1.00" height="1.00" fill="#b4b4b4" />
<rect x="357.00" y="492.10" width="1.00" height="1.00" fill="#b4b4b4" />
<rect x="365.00" y="492.10" width="1.00" height="1.00" fill="#b4b4b4" />
<rect x="373.00" y="492.10" width="1.00" height="1.00" fill="#b4b4b4" />
<rect x="381.00" y="492.10" width="1.00" height="1.00" fill="#b4b4b4" />
<rect x="389.00" y="492.10" width="1.00" height="1.00" fill="#b4b4b4" />
<rect x="397.00" y="492.10" width="1.00" height="1.00" fill="#b4b4b4" />
<rect x="405.00" y="492.10" width="1.00" height="1.00" fill="#b4b4b4" />
<rect x="413.00" y="492.10" width="1.00" height="1.00" fill="#b4b4b4" />
<rect x="421.00" y="492.10" width="1.00" height="1.00" fill="#b4b4b4" />
<rect x="429.00" y="492.10" width="1.00" height="1.00" fill="#b4b4b4" />
<rect x="437.00" y="492.10" width="1.00" height="1.00" fill="#b4b4b4" />
<rect x="445.00" y="492.10" width="1.00" height="1.00" fill="#b4b4b4" />
<rect x="453.00" y="492.10" width="1.00" height="1.00" fill="#b4b4b4" />
<rect x="461.00" y="492.10" width="1.00" height="1.00" fill="#b4b4b4" />
<rect x="469.00" y="492.10" width="1.00" height="1.00" fill="#b4b4b4" />
<rect x="477.00" y="492.10" width="1.00" height="1.00" fill="#b4b4b4" />
<rect x="485.00" y="492.10" width="1.00" height="1.00" fill="#b4b4b4" />
<rect x="493.00" y="492.10" width="1.00" height="1.00" fill="#b4b4b4" />
<rect x="501.00" y="492.10" width="1.00" height="1.00" fill="#b4b4b4" />
<rect x="509.00" y="492.10" width="1.00" height="1.00" fill="#b4b4b4" />
<rect x="517.00" y="492.10" width="1.00" height="1.00" fill="#b4b4b4" />
<rect x="525.00" y="492.10" width="1.00" height="1.00" fill="#b4b4b4" />
<rect x="533.00" y="492.10" width="1.00" height="1.00" fill="#b4b4b4" />
<rect x="541.00" y="492.10" width="1.00" height="1.00" fill="#b4b4b4" />
<rect x="549.00" y="492.10" width="1.00" height="1.00" fill="#b4b4b4" />
<rect x="557.00" y="492.10" width="1.00" height="1.00" fill="#b4b4b4" />
<rect x="565.00" y="492.10" width="1.00" height="1.00" fill="#b4b4b4" />
<rect x="573.00" y="492.10" width="1.00" height="1.00" fill="#b4b4b4" />
<rect x="581.00" y="492.10" width="1.00" height="1.00" fill="#b4b4b4" />
<rect x="589.00" y="492.10" width="1.00" height="1.00" fill="#b4b4b4" />
<rect x="597.00" y="492.10" width="1.00" height="1.00" fill="#b4b4b4" />
<rect x="605.00" y="492.10" width="1.00" height="1.00" fill="#b4b4b4" />
<rect x="613.00" y="492.10" width="1.00" height="1.00" fill="#b4b4b4" />
<rect x="621.00" y="492.10" width="1.00" height="1.00" fill="#b4b4b4" />
<rect x="629.00" y="492.10" width="1.00" height="1.00" fill="#b4b4b4" />
<rect x="637.00" y="492.10" width="1.00" height="1.00" fill="#b4b4b4" />
<rect x="645.00" y="492.10" width="1.00" height="1.00" fill="#b4b4b4" />
<rect x="653.00" y="492.10" width="1.00" height="1.00" fill="#b4b4b4" />
<rect x="661.00" y="492.10" width="1.00" height="1.00" fill="#b4b4b4" />
<rect x="669.00" y="492.10" width="1.00" height="1.00" fill="#b4b4b4" />
<rect x="677.00" y="492.10" width="1.00" height="1.00" fill="#b4b4b4" />
<rect x="69.00" y="512.10" width="1.00" height="1.00" fill="#b4b4b4" />
<rect x="77.00" y="512.10" width="1.00" height="1.00" fill="#b4b4b4" />
<rect x="85.00" y="512.10" width="1.00" height="1.00" fill="#b4b4b4" />
<rect x="93.00" y="512.10" width="1.00" height="1.00" fill="#b4b4b4" />
<rect x="101.00" y="512.10" width="1.00" height="1.00" fill="#b4b4b4" />
<rect x="109.00" y="512.10" width="1.00" height="1.00" fill="#b4b4b4" />
<rect x="117.00" y="512.10" width="1.00" height="1.00" fill="#b4b4b4" />
<rect x="125.00" y="512.10" width="1.00" height="1.00" fill="#b4b4b4" />
<rect x="133.00" y="512.10" width="1.00" height="1.00" fill="#b4b4b4" />
<rect x="141.00" y="512.10" width="1.00" height="1.00" fill="#b4b4b4" />
<rect x="149.00" y="512.10" width="1.00" height="1.00" fill="#b4b4b4" />
<rect x="157.00" y="512.10" width="1.00" height="1.00" fill="#b4b4b4" />
<rect x="165.00" y="512.10" width="1.00" height="1.00" fill="#b4b4b4" />
<rect x="173.00" y="512.10" width="1.00" height="1.00" fill="#b4b4b4" />
<rect x="181.00" y="512.10" width="1.00" height="1.00" fill="#b4b4b4" />
<rect x="189.00" y="512.10" width="1.00" height="1.00" fill="#b4b4b4" />
<rect x="197.00" y="512.10" width="1.00" height="1.00" fill="#b4b4b4" />
<rect x="205.00" y="512.10" width="1.00" height="1.00" fill="#b4b4b4" />
<rect x="213.00" y="512.10" width="1.00" height="1.00" fill="#b4b4b4" />
<rect x="221.00" y="512.10" width="1.00" height="1.00" fill="#b4b4b4" />
<rect x="229.00" y="512.10" width="1.00" height="1.00" fill="#b4b4b4" />
<rect x="237.00" y="512.10" width="1.00" height="1.00" fill="#b4b4b4" />
<rect x="245.00" y="512.10" width="1.00" height="1.00" fill="#b4b4b4" />
<rect x="253.00" y="512.10" width="1.00" height="1.00" fill="#b4b4b4" />
<rect x="261.00" y="512.10" width="1.00" height="1.00" fill="#b4b4b4" />
<rect x="269.00" y="512.10" width="1.00" height="1.00" fill="#b4b4b4" />
<rect x="277.00" y="512.10" width="1.00" height="1.00" fill="#b4b4b4" />
<rect x="285.00" y="512.10" width="1.00" height="1.00" fill="#b4b4b4" />
<rect x="293.00" y="512.10" width="1.00" height="1.00" fill="#b4b4b4" />
<rect x="301.00" y="512.10" width="1.00" height="1.00" fill="#b4b4b4" />
<rect x="309.00" y="512.10" width="1.00" height="1.00" fill="#b4b4b4" />
<rect x="317.00" y="512.10" width="1.00" height="1.00" fill="#b4b4b4" />
<rect x="325.00" y="512.10" width="1.00" height="1.00" fill="#b4b4b4" />
<rect x="333.00" y="512.10" width="1.00" height="1.00" fill="#b4b4b4" />
<rect x="341.00" y="512.10" width="1.00" height="1.00" fill="#b4b4b4" />
<rect x="349.00" y="512.10" width="1.00" height="1.00" fill="#b4b4b4" />
<rect x="357.00" y="512.10" width="1.00" height="1.00" fill="#b4b4b4" />
<rect x="365.00" y="512.10" width="1.00" height="1.00" fill="#b4b4b4" />
<rect x="373.00" y="512.10" width="1.00" height="1.00" fill="#b4b4b4" />
<rect x="381.00" y="512.10" width="1.00" height="1.00" fill="#b4b4b4" />
<rect x="389.00" y="512.10" width="1.00" height="1.00" fill="#b4b4b4" />
<rect x="397.00" y="512.10" width="1.00" height="1.00" fill="#b4b4b4" />
<rect x="405.00" y="512.10" width="1.00" height="1.00" fill="#b4b4b4" />
<rect x="413.00" y="512.10" width="1.00" height="1.00" fill="#b4b4b4" />
<rect x="421.00" y="512.10" width="1.00" height="1.00" fill="#b4b4b4" />
<rect x="429.00" y="512.10" width="1.00" height="1.00" fill="#b4b4b4" />
<rect x="437.00" y="512.10" width="1.00" height="1.00" fill="#b4b4b4" />
<rect x="445.00" y="512.10" width="1.00" height="1.00" fill="#b4b4b4" />
<rect x="453.00" y="512.10" width="1.00" height="1.00" fill="#b4b4b4" />
<rect x="461.00" y="512.10" width="1.00" height="1.00" fill="#b4b4b4" />
<rect x="469.00" y="512.10" width="1.00" height="1.00" fill="#b4b4b4" />
<rect x="477.00" y="512.10" width="1.00" height="1.00" fill="#b4b4b4" />
<rect x="485.00" y="512.10" width="1.00" height="1.00" fill="#b4b4b4" />
<rect x="493.00" y="512.10" width="1.00" height="1.00" fill="#b4b4b4" />
<rect x="501.00" y="512.10" width="1.00" height="1.00" fill="#b4b4b4" />
<rect x="509.00" y="512.10" width="1.00" height="1.00" fill="#b4b4b4" />
<rect x="517.00" y="512.10" width="1.00" height="1.00" fill="#b4b4b4" />
<rect x="525.00" y="512.10" width="1.00" height="1.00" fill="#b4b4b4" />
<rect x="533.00" y="512.10" width="1.00" height="1.00" fill="#b4b4b4" />
<rect x="541.00" y="512.10" width="1.00" height="1.00" fill="#b4b4b4" />
<rect x="549.00" y="512.10" width="1.00" height="1.00" fill="#b4b4b4" />
<rect x="557.00" y="512.10" width="1.00" height="1.00" fill="#b4b4b4" />
<rect x="565.00" y="512.10" width="1.00" height="1.00" fill="#b4b4b4" />
<rect x="573.00" y="512.10" width="1.00" height="1.00" fill="#b4b4b4" />
<rect x="581.00" y="512.10" width="1.00" height="1.00" fill="#b4b4b4" />
<rect x="589.00" y="512.10" width="1.00" height="1.00" fill="#b4b4b4" />
<rect x="597.00" y="512.10" width="1.00" height="1.00" fill="#b4b4b4" />
<rect x="605.00" y="512.10" width="1.00" height="1.00" fill="#b4b4b4" />
<rect x="613.00" y="512.10" width="1.00" height="1.00" fill="#b4b4b4" />
<rect x="621.00" y="512.10" width="1.00" height="1.00" fill="#b4b4b4" />
<rect x="629.00" y="512.10" width="1.00" height="1.00" fill="#b4b4b4" />
<rect x="637.00" y="512.10" width="1.00" height="1.00" fill="#b4b4b4" />
<rect x="645.00" y="512.10" width="1.00" height="1.00" fill="#b4b4b4" />
<rect x="653.00" y="512.10" width="1.00" height="1.00" fill="#b4b4b4" />
<rect x="661.00" y="512.10" width="1.00" height="1.00" fill="#b4b4b4" />
<rect x="669.00" y="512.10" width="1.00" height="1.00" fill="#b4b4b4" />
<rect x="677.00" y="512.10" width="1.00" height="1.00" fill="#b4b4b4" />
<rect x="69.00" y="552.10" width="1.00" height="1.00" fill="#b4b4b4" />
<rect x="77.00" y="552.10" width="1.00" height="1.00" fill="#b4b4b4" />
<rect x="85.00" y="552.10" width="1.00" height="1.00" fill="#b4b4b4" />
<rect x="93.00" y="552.10" width="1.00" height="1.00" fill="#b4b4b4" />
<rect x="101.00" y="552.10" width="1.00" height="1.00" fill="#b4b4b4" />
<rect x="109.00" y="552.10" width="1.00" height="1.00" fill="#b4b4b4" />
<rect x="117.00" y="552.10" width="1.00" height="1.00" fill="#b4b4b4" />
<rect x="125.00" y="552.10" width="1.00" height="1.00" fill="#b4b4b4" />
<rect x="133.00" y="552.10" width="1.00" height="1.00" fill="#b4b4b4" />
<rect x="141.00" y="552.10" width="1.00" height="1.00" fill="#b4b4b4" />
<rect x="149.00" y="552.10" width="1.00" height="1.00" fill="#b4b4b4" />
<rect x="157.00" y="552.10" width="1.00" height="1.00" fill="#b4b4b4" />
<rect x="165.00" y="552.10" width="1.00" height="1.00" fill="#b4b4b4" />
<rect x="173.00" y="552.10" width="1.00" height="1.00" fill="#b4b4b4" />
<rect x="181.00" y="552.10" width="1.00" height="1.00" fill="#b4b4b4" />
<rect x="189.00" y="552.10" width="1.00" height="1.00" fill="#b4b4b4" />
<rect x="197.00" y="552.10" width="1.00" height="1.00" fill="#b4b4b4" />
<rect x="205.00" y="552.10" width="1.00" height="1.00" fill="#b4b4b4" />
<rect x="213.00" y="552.10" width="1.00" height="1.00" fill="#b4b4b4" />
<rect x="221.00" y="552.10" width="1.00" height="1.00" fill="#b4b4b4" />
<rect x="229.00" y="552.10" width="1.00" height="1.00" fill="#b4b4b4" />
<rect x="237.00" y="552.10" width="1.00" height="1.00" fill="#b4b4b4" />
<rect x="245.00" y="552.10" width="1.00" height="1.00" fill="#b4b4b4" />
<rect x="253.00" y="552.10" width="1.00" height="1.00" fill="#b4b4b4" />
<rect x="261.00" y="552.10" width="1.00" height="1.00" fill="#b4b4b4" />
<rect x="269.00" y="552.10" width="1.00" height="1.00" fill="#b4b4b4" />
<rect x="277.00" y="552.10" width="1.00" height="1.00" fill="#b4b4b4" />
<rect x="285.00" y="552.10" width="1.00" height="1.00" fill="#b4b4b4" />
<rect x="293.00" y="552.10" width="1.00" height="1.00" fill="#b4b4b4" />
<rect x="301.00" y="552.10" width="1.00" height="1.00" fill="#b4b4b4" />
<rect x="309.00" y="552.10" width="1.00" height="1.00" fill="#b4b4b4" />
<rect x="317.00" y="552.10" width="1.00" height="1.00" fill="#b4b4b4" />
<rect x="325.00" y="552.10" width="1.00" height="1.00" fill="#b4b4b4" />
<rect x="333.00" y="552.10" width="1.00" height="1.00" fill="#b4b4b4" />
<rect x="341.00" y="552.10" width="1.00" height="1.00" fill="#b4b4b4" />
<rect x="349.00" y="552.10" width="1.00" height="1.00" fill="#b4b4b4" />
<rect x="357.00" y="552.10" width="1.00" height="1.00" fill="#b4b4b4" />
<rect x="365.00" y="552.10" width="1.00" height="1.00" fill="#b4b4b4" />
<rect x="373.00" y="552.10" width="1.00" height="1.00" fill="#b4b4b4" />
<rect x="381.00" y="552.10" width="1.00" height="1.00" fill="#b4b4b4" />
<rect x="389.00" y="552.10" width="1.00" height="1.00" fill="#b4b4b4" />
<rect x="397.00" y="552.10" width="1.00" height="1.00" fill="#b4b4b4" />
<rect x="405.00" y="552.10" width="1.00" height="1.00" fill="#b4b4b4" />
<rect x="413.00" y="552.10" width="1.00" height="1.00" fill="#b4b4b4" />
<rect x="421.00" y="552.10" width="1.00" height="1.00" fill="#b4b4b4" />
<rect x="429.00" y="552.10" width="1.00" height="1.00" fill="#b4b4b4" />
<rect x="437.00" y="552.10" width="1.00" height="1.00" fill="#b4b4b4" />
<rect x="445.00" y="552.10" width="1.00" height="1.00" fill="#b4b4b4" />
<rect x="453.00" y="552.10" width="1.00" height="1.00" fill="#b4b4b4" />
<rect x="461.00" y="552.10" width="1.00" height="1.00" fill="#b4b4b4" />
<rect x="469.00" y="552.10" width="1.00" height="1.00" fill="#b4b4b4" />
<rect x="477.00" y="552.10" width="1.00" height="1.00" fill="#b4b4b4" />
<rect x="485.00" y="552.10" width="1.00" height="1.00" fill="#b4b4b4" />
<rect x="493.00" y="552.10" width="1.00" height="1.00" fill="#b4b4b4" />
<rect x="501.00" y="552.10" width="1.00" height="1.00" fill="#b4b4b4" />
<rect x="509.00" y="552.10" width="1.00" height="1.00" fill="#b4b4b4" />
<rect x="517.00" y="552.10" width="1.00" height="1.00" fill="#b4b4b4" />
<rect x="525.00" y="552.10" width="1.00" height="1.00" fill="#b4b4b4" />
<rect x="533.00" y="552.10" width="1.00" height="1.00" fill="#b4b4b4" />
<rect x="541.00" y="552.10" width="1.00" height="1.00" fill="#b4b4b4" />
<rect x="549.00" y="552.10" width="1.00" height="1.00" fill="#b4b4b4" />
<rect x="557.00" y="552.10" width="1.00" height="1.00" fill="#b4b4b4" />
<rect x="565.00" y="552.10" width="1.00" height="1.00" fill="#b4b4b4" />
<rect x="573.00" y="552.10" width="1.00" height="1.00" fill="#b4b4b4" />
<rect x="581.00" y="552.10" width="1.00" height="1.00" fill="#b4b4b4" />
<rect x="589.00" y="552.10" width="1.00" height="1.00" fill="#b4b4b4" />
<rect x="597.00" y="552.10" width="1.00" height="1.00" fill="#b4b4b4" />
<rect x="605.00" y="552.10" width="1.00" height="1.00" fill="#b4b4b4" />
<rect x="613.00" y="552.10" width="1.00" height="1.00" fill="#b4b4b4" />
<rect x="621.00" y="552.10" width="1.00" height="1.00" fill="#b4b4b4" />
<rect x="629.00" y="552.10" width="1.00" height="1.00" fill="#b4b4b4" />
<rect x="637.00" y="552.10" width="1.00" height="1.00" fill="#b4b4b4" />
<rect x="645.00" y="552.10" width="1.00" height="1.00" fill="#b4b4b4" />
<rect x="653.00" y="552.10" width="1.00" height="1.00" fill="#b4b4b4" />
<rect x="661.00" y="552.10" width="1.00" height="1.00" fill="#b4b4b4" />
<rect x="669.00" y="552.10" width="1.00" height="1.00" fill="#b4b4b4" />
<rect x="677.00" y="552.10" width="1.00" height="1.00" fill="#b4b4b4" />
<rect x="69.00" y="572.10" width="1.00" height="1.00" fill="#b4b4b4" />
<rect x="77.00" y="572.10" width="1.00" height="1.00" fill="#b4b4b4" />
<rect x="85.00" y="572.10" width="1.00" height="1.00" fill="#b4b4b4" />
<rect x="93.00" y="572.10" width="1.00" height="1.00" fill="#b4b4b4" />
<rect x="101.00" y="572.10" width="1.00" height="1.00" fill="#b4b4b4" />
<rect x="109.00" y="572.10" width="1.00" height="1.00" fill="#b4b4b4" />
<rect x="117.00" y="572.10" width="1.00" height="1.00" fill="#b4b4b4" />
<rect x="125.00" y="572.10" width="1.00" height="1.00" fill="#b4b4b4" />
<rect x="133.00" y="572.10" width="1.00" height="1.00" fill="#b4b4b4" />
<rect x="141.00" y="572.10" width="1.00" height="1.00" fill="#b4b4b4" />
<rect x="149.00" y="572.10" width="1.00" height="1.00" fill="#b4b4b4" />
<rect x="157.00" y="572.10" width="1.00" height="1.00" fill="#b4b4b4" />
<rect x="165.00" y="572.10" width="1.00" height="1.00" fill="#b4b4b4" />
<rect x="173.00" y="572.10" width="1.00" height="1.00" fill="#b4b4b4" />
<rect x="181.00" y="572.10" width="1.00" height="1.00" fill="#b4b4b4" />
<rect x="189.00" y="572.10" width="1.00" height="1.00" fill="#b4b4b4" />
<rect x="197.00" y="572.10" width="1.00" height="1.00" fill="#b4b4b4" />
<rect x="205.00" y="572.10" width="1.00" height="1.00" fill="#b4b4b4" />
<rect x="213.00" y="572.10" width="1.00" height="1.00" fill="#b4b4b4" />
<rect x="221.00" y="572.10" width="1.00" height="1.00" fill="#b4b4b4" />
<rect x="229.00" y="572.10" width="1.00" height="1.00" fill="#b4b4b4" />
<rect x="237.00" y="572.10" width="1.00" height="1.00" fill="#b4b4b4" />
<rect x="245.00" y="572.10" width="1.00" height="1.00" fill="#b4b4b4" />
<rect x="253.00" y="572.10" width="1.00" height="1.00" fill="#b4b4b4" />
<rect x="261.00" y="572.10" width="1.00" height="1.00" fill="#b4b4b4" />
<rect x="269.00" y="572.10" width="1.00" height="1.00" fill="#b4b4b4" />
<rect x="277.00" y="572.10" width="1.00" height="1.00" fill="#b4b4b4" />
<rect x="285.00" y="572.10" width="1.00" height="1.00" fill="#b4b4b4" />
<rect x="293.00" y="572.10" width="1.00" height="1.00" fill="#b4b4b4" />
<rect x="301.00" y="572.10" width="1.00" height="1.00" fill="#b4b4b4" />
<rect x="309.00" y="572.10" width="1.00" height="1.00" fill="#b4b4b4" />
<rect x="317.00" y="572.10" width="1.00" height="1.00" fill="#b4b4b4" />
<rect x="325.00" y="572.10" width="1.00" height="1.00" fill="#b4b4b4" />
<rect x="333.00" y="572.10" width="1.00" height="1.00" fill="#b4b4b4" />
<rect x="341.00" y="572.10" width="1.00" height="1.00" fill="#b4b4b4" />
<rect x="349.00" y="572.10" width="1.00" height="1.00" fill="#b4b4b4" />
<rect x="357.00" y="572.10" width="1.00" height="1.00" fill="#b4b4b4" />
<rect x="365.00" y="572.10" width="1.00" height="1.00" fill="#b4b4b4" />
<rect x="373.00" y="572.10" width="1.00" height="1.00" fill="#b4b4b4" />
<rect x="381.00" y="572.10" width="1.00" height="1.00" fill="#b4b4b4" />
<rect x="389.00" y="572.10" width="1.00" height="1.00" fill="#b4b4b4" />
<rect x="397.00" y="572.10" width="1.00" height="1.00" fill="#b4b4b4" />
<rect x="405.00" y="572.10" width="1.00" height="1.00" fill="#b4b4b4" />
<rect x="413.00" y="572.10" width="1.00" height="1.00" fill="#b4b4b4" />
<rect x="421.00" y="572.10" width="1.00" height="1.00" fill="#b4b4b4" />
<rect x="429.00" y="572.10" width="1.00" height="1.00" fill="#b4b4b4" />
<rect x="437.00" y="572.10" width="1.00" height="1.00" fill="#b4b4b4" />
<rect x="445.00" y="572.10" width="1.00" height="1.00" fill="#b4b4b4" />
<rect x="453.00" y="572.10" width="1.00" height="1.00" fill="#b4b4b4" />
<rect x="461.00" y="572.10" width="1.00" height="1.00" fill="#b4b4b4" />
<rect x="469.00" y="572.10" width="1.00" height="1.00" fill="#b4b4b4" />
<rect x="477.00" y="572.10" width="1.00" height="1.00" fill="#b4b4b4" />
<rect x="485.00" y="572.10" width="1.00" height="1.00" fill="#b4b4b4" />
<rect x="493.00" y="572.10" width="1.00" height="1.00" fill="#b4b4b4" />
<rect x="501.00" y="572.10" width="1.00" height="1.00" fill="#b4b4b4" />
<rect x="509.00" y="572.10" width="1.00" height="1.00" fill="#b4b4b4" />
<rect x="517.00" y="572.10" width="1.00" height="1.00" fill="#b4b4b4" />
<rect x="525.00" y="572.10" width="1.00" height="1.00" fill="#b4b4b4" />
<rect x="533.00" y="572.10" width="1.00" height="1.00" fill="#b4b4b4" />
<rect x="541.00" y="572.10" width="1.00" height="1.00" fill="#b4b4b4" />
<rect x="549.00" y="572.10" width="1.00" height="1.00" fill="#b4b4b4" />
<rect x="557.00" y="572.10" width="1.00" height="1.00" fill="#b4b4b4" />
<rect x="565.00" y="572.10" width="1.00" height="1.00" fill="#b4b4b4" />
<rect x="573.00" y="572.10" width="1.00" height="1.00" fill="#b4b4b4" />
<rect x="581.00" y="572.10" width="1.00" height="1.00" fill="#b4b4b4" />
<rect x="589.00" y="572.10" width="1.00" height="1.00" fill="#b4b4b4" />
<rect x="597.00" y="572.10" width="1.00" height="1.00" fill="#b4b4b4" />
<rect x="605.00" y="572.10" width="1.00" height="1.00" fill="#b4b4b4" />
<rect x="613.00" y="572.10" width="1.00" height="1.00" fill="#b4b4b4" />
<rect x="621.00" y="572.10" width="1.00" height="1.00" fill="#b4b4b4" />
<rect x="629.00" y="572.10" width="1.00" height="1.00" fill="#b4b4b4" />
<rect x="637.00" y="572.10" width="1.00" height="1.00" fill="#b4b4b4" />
<rect x="645.00" y="572.10" width="1.00" height="1.00" fill="#b4b4b4" />
<rect x="653.00" y="572.10" width="1.00" height="1.00" fill="#b4b4b4" />
<rect x="661.00" y="572.10" width="1.00" height="1.00" fill="#b4b4b4" />
<rect x="669.00" y="572.10" width="1.00" height="1.00" fill="#b4b4b4" />
<rect x="677.00" y="572.10" width="1.00" height="1.00" fill="#b4b4b4" />
<rect x="69.00" y="592.10" width="1.00" height="1.00" fill="#b4b4b4" />
<rect x="77.00" y="592.10" width="1.00" height="1.00" fill="#b4b4b4" />
<rect x="85.00" y="592.10" width="1.00" height="1.00" fill="#b4b4b4" />
<rect x="93.00" y="592.10" width="1.00" height="1.00" fill="#b4b4b4" />
<rect x="101.00" y="592.10" width="1.00" height="1.00" fill="#b4b4b4" />
<rect x="109.00" y="592.10" width="1.00" height="1.00" fill="#b4b4b4" />
<rect x="117.00" y="592.10" width="1.00" height="1.00" fill="#b4b4b4" />
<rect x="125.00" y="592.10" width="1.00" height="1.00" fill="#b4b4b4" />
<rect x="133.00" y="592.10" width="1.00" height="1.00" fill="#b4b4b4" />
<rect x="141.00" y="592.10" width="1.00" height="1.00" fill="#b4b4b4" />
<rect x="149.00" y="592.10" width="1.00" height="1.00" fill="#b4b4b4" />
<rect x="157.00" y="592.10" width="1.00" height="1.00" fill="#b4b4b4" />
<rect x="165.00" y="592.10" width="1.00" height="1.00" fill="#b4b4b4" />
<rect x="173.00" y="592.10" width="1.00" height="1.00" fill="#b4b4b4" />
<rect x="181.00" y="592.10" width="1.00" height="1.00" fill="#b4b4b4" />
<rect x="189.00" y="592.10" width="1.00" height="1.00" fill="#b4b4b4" />
<rect x="197.00" y="592.10" width="1.00" height="1.00" fill="#b4b4b4" />
<rect x="205.00" y="592.10" width="1.00" height="1.00" fill="#b4b4b4" />
<rect x="213.00" y="592.10" width="1.00" height="1.00" fill="#b4b4b4" />
<rect x="221.00" y="592.10" width="1.00" height="1.00" fill="#b4b4b4" />
<rect x="229.00" y="592.10" width="1.00" height="1.00" fill="#b4b4b4" />
<rect x="237.00" y="592.10" width="1.00" height="1.00" fill="#b4b4b4" />
<rect x="245.00" y="592.10" width="1.00" height="1.00" fill="#b4b4b4" />
<rect x="253.00" y="592.10" width="1.00" height="1.00" fill="#b4b4b4" />
<rect x="261.00" y="592.10" width="1.00" height="1.00" fill="#b4b4b4" />
<rect x="269.00" y="592.10" width="1.00" height="1.00" fill="#b4b4b4" />
<rect x="277.00" y="592.10" width="1.00" height="1.00" fill="#b4b4b4" />
<rect x="285.00" y="592.10" width="1.00" height="1.00" fill="#b4b4b4" />
<rect x="293.00" y="592.10" width="1.00" height="1.00" fill="#b4b4b4" />
<rect x="301.00" y="592.10" width="1.00" height="1.00" fill="#b4b4b4" />
<rect x="309.00" y="592.10" width="1.00" height="1.00" fill="#b4b4b4" />
<rect x="317.00" y="592.10" width="1.00" height="1.00" fill="#b4b4b4" />
<rect x="325.00" y="592.10" width="1.00" height="1.00" fill="#b4b4b4" />
<rect x="333.00" y="592.10" width="1.00" height="1.00" fill="#b4b4b4" />
<rect x="341.00" y="592.10" width="1.00" height="1.00" fill="#b4b4b4" />
<rect x="349.00" y="592.10" width="1.00" height="1.00" fill="#b4b4b4" />
<rect x="357.00" y="592.10" width="1.00" height="1.00" fill="#b4b4b4" />
<rect x="365.00" y="592.10" width="1.00" height="1.00" fill="#b4b4b4" />
<rect x="373.00" y="592.10" width="1.00" height="1.00" fill="#b4b4b4" />
<rect x="381.00" y="592.10" width="1.00" height="1.00" fill="#b4b4b4" />
<rect x="389.00" y="592.10" width="1.00" height="1.00" fill="#b4b4b4" />
<rect x="397.00" y="592.10" width="1.00" height="1.00" fill="#b4b4b4" />
<rect x="405.00" y="592.10" width="1.00" height="1.00" fill="#b4b4b4" />
<rect x="413.00" y="592.10" width="1.00" height="1.00" fill="#b4b4b4" />
<rect x="421.00" y="592.10" width="1.00" height="1.00" fill="#b4b4b4" />
<rect x="429.00" y="592.10" width="1.00" height="1.00" fill="#b4b4b4" />
<rect x="437.00" y="592.10" width="1.00" height="1.00" fill="#b4b4b4" />
<rect x="445.00" y="592.10" width="1.00" height="1.00" fill="#b4b4b4" />
<rect x="453.00" y="592.10" width="1.00" height="1.00" fill="#b4b4b4" />
<rect x="461.00" y="592.10" width="1.00" height="1.00" fill="#b4b4b4" />
<rect x="469.00" y="592.10" width="1.00" height="1.00" fill="#b4b4b4" />
<rect x="477.00" y="592.10" width="1.00" height="1.00" fill="#b4b4b4" />
<rect x="485.00" y="592.10" width="1.00" height="1.00" fill="#b4b4b4" />
<rect x="493.00" y="592.10" width="1.00" height="1.00" fill="#b4b4b4" />
<rect x="501.00" y="592.10" width="1.00" height="1.00" fill="#b4b4b4" />
<rect x="509.00" y="592.10" width="1.00" height="1.00" fill="#b4b4b4" />
<rect x="517.00" y="592.10" width="1.00" height="1.00" fill="#b4b4b4" />
<rect x="525.00" y="592.10" width="1.00" height="1.00" fill="#b4b4b4" />
<rect x="533.00" y="592.10" width="1.00" height="1.00" fill="#b4b4b4" />
<rect x="541.00" y="592.10" width="1.00" height="1.00" fill="#b4b4b4" />
<rect x="549.00" y="592.10" width="1.00" height="1.00" fill="#b4b4b4" />
<rect x="557.00" y="592.10" width="1.00" height="1.00" fill="#b4b4b4" />
<rect x="565.00" y="592.10" width="1.00" height="1.00" fill="#b4b4b4" />
<rect x="573.00" y="592.10" width="1.00" height="1.00" fill="#b4b4b4" />
<rect x="581.00" y="592.10" width="1.00" height="1.00" fill="#b4b4b4" />
<rect x="589.00" y="592.10" width="1.00" height="1.00" fill="#b4b4b4" />
<rect x="597.00" y="592.10" width="1.00" height="1.00" fill="#b4b4b4" />
<rect x="605.00" y="592.10" width="1.00" height="1.00" fill="#b4b4b4" />
<rect x="613.00" y="592.10" width="1.00" height="1.00" fill="#b4b4b4" />
<rect x="621.00" y="592.10" width="1.00" height="1.00" fill="#b4b4b4" />
<rect x="629.00" y="592.10" width="1.00" height="1.00" fill="#b4b4b4" />
<rect x="637.00" y="592.10" width="1.00" height="1.00" fill="#b4b4b4" />
<rect x="645.00" y="592.10" width="1.00" height="1.00" fill="#b4b4b4" />
<rect x="653.00" y="592.10" width="1.00" height="1.00" fill="#b4b4b4" />
<rect x="661.00" y="592.10" width="1.00" height="1.00" fill="#b4b4b4" />
<rect x="669.00" y="592.10" width="1.00" height="1.00" fill="#b4b4b4" />
<rect x="677.00" y="592.10" width="1.00" height="1.00" fill="#b4b4b4" />
<rect x="93.00" y="456.00" width="1.00" height="1.00" fill="#b4b4b4" />
<rect x="93.00" y="460.00" width="1.00" height="1.00" fill="#b4b4b4" />
<rect x="93.00" y="464.00" width="1.00" height="1.00" fill="#b4b4b4" />
<rect x="93.00" y="468.00" width="1.00" height="1.00" fill="#b4b4b4" />
<rect x="93.00" y="472.00" width="1.00" height="1.00" fill="#b4b4b4" />
<rect x="93.00" y="476.00" width="1.00" height="1.00" fill="#b4b4b4" />
<rect x="93.00" y="480.00" width="1.00" height="1.00" fill="#b4b4b4" />
<rect x="93.00" y="484.00" width="1.00" height="1.00" fill="#b4b4b4" />
<rect x="93.00" y="488.00" width="1.00" height="1.00" fill="#b4b4b4" />
<rect x="93.00" y="492.00" width="1.00" height="1.00" fill="#b4b4b4" />
<rect x="93.00" y="496.00" width="1.00" height="1.00" fill="#b4b4b4" />
<rect x="93.00" y="500.00" width="1.00" height="1.00" fill="#b4b4b4" />
<rect x="93.00" y="504.00" width="1.00" height="1.00" fill="#b4b4b4" />
<rect x="93.00" y="508.00" width="1.00" height="1.00" fill="#b4b4b4" />
<rect x="93.00" y="512.00" width="1.00" height="1.00" fill="#b4b4b4" />
<rect x="93.00" y="516.00" width="1.00" height="1.00" fill="#b4b4b4" />
<rect x="93.00" y="520.00" width="1.00" height="1.00" fill="#b4b4b4" />
<rect x="93.00" y="524.00" width="1.00" height="1.00" fill="#b4b4b4" />
<rect x="93.00" y="528.00" width="1.00" height="1.00" fill="#b4b4b4" />
<rect x="93.00" y="532.00" width="1.00" height="1.00" fill="#b4b4b4" />
<rect x="93.00" y="536.00" width="1.00" height="1.00" fill="#b4b4b4" />
<rect x="93.00" y="540.00" width="1.00" height="1.00" fill="#b4b4b4" />
<rect x="93.00" y="544.00" width="1.00" height="1.00" fill="#b4b4b4" />
<rect x="93.00" y="548.00" width="1.00" height="1.00" fill="#b4b4b4" />
<rect x="93.00" y="552.00" width="1.00" height="1.00" fill="#b4b4b4" />
<rect x="93.00" y="556.00" width="1.00" height="1.00" fill="#b4b4b4" />
<rect x="93.00" y="560.00" width="1.00" height="1.00" fill="#b4b4b4" />
<rect x="93.00" y="564.00" width="1.00" height="1.00" fill="#b4b4b4" />
<rect x="93.00" y="568.00" width="1.00" height="1.00" fill="#b4b4b4" />
<rect x="93.00" y="572.00" width="1.00" height="1.00" fill="#b4b4b4" />
<rect x="93.00" y="576.00" width="1.00" height="1.00" fill="#b4b4b4" />
<rect x="93.00" y="580.00" width="1.00" height="1.00" fill="#b4b4b4" />
<rect x="93.00" y="584.00" width="1.00" height="1.00" fill="#b4b4b4" />
<rect x="93.00" y="588.00" width="1.00" height="1.00" fill="#b4b4b4" />
<rect x="93.00" y="592.00" width="1.00" height="1.00" fill="#b4b4b4" />
<rect x="93.00" y="596.00" width="1.00" height="1.00" fill="#b4b4b4" />
<rect x="93.00" y="600.00" width="1.00" height="1.00" fill="#b4b4b4" />
<rect x="93.00" y="604.00" width="1.00" height="1.00" fill="#b4b4b4" />
<rect x="93.00" y="608.00" width="1.00" height="1.00" fill="#b4b4b4" />
<rect x="133.00" y="456.00" width="1.00" height="1.00" fill="#b4b4b4" />
<rect x="133.00" y="460.00" width="1.00" height="1.00" fill="#b4b4b4" />
<rect x="133.00" y="464.00" width="1.00" height="1.00" fill="#b4b4b4" />
<rect x="133.00" y="468.00" width="1.00" height="1.00" fill="#b4b4b4" />
<rect x="133.00" y="472.00" width="1.00" height="1.00" fill="#b4b4b4" />
<rect x="133.00" y="476.00" width="1.00" height="1.00" fill="#b4b4b4" />
<rect x="133.00" y="480.00" width="1.00" height="1.00" fill="#b4b4b4" />
<rect x="133.00" y="484.00" width="1.00" height="1.00" fill="#b4b4b4" />
<rect x="133.00" y="488.00" width="1.00" height="1.00" fill="#b4b4b4" />
<rect x="133.00" y="492.00" width="1.00" height="1.00" fill="#b4b4b4" />
<rect x="133.00" y="496.00" width="1.00" height="1.00" fill="#b4b4b4" />
<rect x="133.00" y="500.00" width="1.00" height="1.00" fill="#b4b4b4" />
<rect x="133.00" y="504.00" width="1.00" height="1.00" fill="#b4b4b4" />
<rect x="133.00" y="508.00" width="1.00" height="1.00" fill="#b4b4b4" />
<rect x="133.00" y="512.00" width="1.00" height="1.00" fill="#b4b4b4" />
<rect x="133.00" y="516.00" width="1.00" height="1.00" fill="#b4b4b4" />
<rect x="133.00" y="520.00" width="1.00" height="1.00" fill="#b4b4b4" />
<rect x="133.00" y="524.00" width="1.00" height="1.00" fill="#b4b4b4" />
<rect x="133.00" y="528.00" width="1.00" height="1.00" fill="#b4b4b4" />
<rect x="133.00" y="532.00" width="1.00" height="1.00" fill="#b4b4b4" />
<rect x="133.00" y="536.00" width="1.00" height="1.00" fill="#b4b4b4" />
<rect x="133.00" y="540.00" width="1.00" height="1.00" fill="#b4b4b4" />
<rect x="133.00" y="544.00" width="1.00" height="1.00" fill="#b4b4b4" />
<rect x="133.00" y="548.00" width="1.00" height="1.00" fill="#b4b4b4" />
<rect x="133.00" y="552.00" width="1.00" height="1.00" fill="#b4b4b4" />
<rect x="133.00" y="556.00" width="1.00" height="1.00" fill="#b4b4b4" />
<rect x="133.00" y="560.00" width="1.00" height="1.00" fill="#b4b4b4" />
<rect x="133.00" y="564.00" width="1.00" height="1.00" fill="#b4b4b4" />
<rect x="133.00" y="568.00" width="1.00" height="1.00" fill="#b4b4b4" />
<rect x="133.00" y="572.00" width="1.00" height="1.00" fill="#b4b4b4" />
<rect x="133.00" y="576.00" width="1.00" height="1.00" fill="#b4b4b4" />
<rect x="133.00" y="580.00" width="1.00" height="1.00" fill="#b4b4b4" />
<rect x="133.00" y="584.00" width="1.00" height="1.00" fill="#b4b4b4" />
<rect x="133.00" y="588.00" width="1.00" height="1.00" fill="#b4b4b4" />
<rect x="133.00" y="592.00" width="1.00" height="1.00" fill="#b4b4b4" />
<rect x="133.00" y="596.00" width="1.00" height="1.00" fill="#b4b4b4" />
<rect x="133.00" y="600.00" width="1.00" height="1.00" fill="#b4b4b4" />
<rect x="133.00" y="604.00" width="1.00" height="1.00" fill="#b4b4b4" />
<rect x="133.00" y="608.00" width="1.00" height="1.00" fill="#b4b4b4" />
<rect x="173.00" y="456.00" width="1.00" height="1.00" fill="#b4b4b4" />
<rect x="173.00" y="460.00" width="1.00" height="1.00" fill="#b4b4b4" />
<rect x="173.00" y="464.00" width="1.00" height="1.00" fill="#b4b4b4" />
<rect x="173.00" y="468.00" width="1.00" height="1.00" fill="#b4b4b4" />
<rect x="173.00" y="472.00" width="1.00" height="1.00" fill="#b4b4b4" />
<rect x="173.00" y="476.00" width="1.00" height="1.00" fill="#b4b4b4" />
<rect x="173.00" y="480.00" width="1.00" height="1.00" fill="#b4b4b4" />
<rect x="173.00" y="484.00" width="1.00" height="1.00" fill="#b4b4b4" />
<rect x="173.00" y="488.00" width="1.00" height="1.00" fill="#b4b4b4" />
<rect x="173.00" y="492.00" width="1.00" height="1.00" fill="#b4b4b4" />
<rect x="173.00" y="496.00" width="1.00" height="1.00" fill="#b4b4b4" />
<rect x="173.00" y="500.00" width="1.00" height="1.00" fill="#b4b4b4" />
<rect x="173.00" y="504.00" width="1.00" height="1.00" fill="#b4b4b4" />
<rect x="173.00" y="508.00" width="1.00" height="1.00" fill="#b4b4b4" />
<rect x="173.00" y="512.00" width="1.00" height="1.00" fill="#b4b4b4" />
<rect x="173.00" y="516.00" width="1.00" height="1.00" fill="#b4b4b4" />
<rect x="173.00" y="520.00" width="1.00" height="1.00" fill="#b4b4b4" />
<rect x="173.00" y="524.00" width="1.00" height="1.00" fill="#b4b4b4" />
<rect x="173.00" y="528.00" width="1.00" height="1.00" fill="#b4b4b4" />
<rect x="173.00" y="532.00" width="1.00" height="1.00" fill="#b4b4b4" />
<rect x="173.00" y="536.00" width="1.00" height="1.00" fill="#b4b4b4" />
<rect x="173.00" y="540.00" width="1.00" height="1.00" fill="#b4b4b4" />
<rect x="173.00" y="544.00" width="1.00" height="1.00" fill="#b4b4b4" />
<rect x="173.00" y="548.00" width="1.00" height="1.00" fill="#b4b4b4" />
<rect x="173.00" y="552.00" width="1.00" height="1.00" fill="#b4b4b4" />
<rect x="173.00" y="556.00" width="1.00" height="1.00" fill="#b4b4b4" />
<rect x="173.00" y="560.00" width="1.00" height="1.00" fill="#b4b4b4" />
<rect x="173.00" y="564.00" width="1.00" height="1.00" fill="#b4b4b4" />
<rect x="173.00" y="568.00" width="1.00" height="1.00" fill="#b4b4b4" />
<rect x="173.00" y="572.00" width="1.00" height="1.00" fill="#b4b4b4" />
<rect x="173.00" y="576.00" width="1.00" height="1.00" fill="#b4b4b4" />
<rect x="173.00" y="580.00" width="1.00" height="1.00" fill="#b4b4b4" />
<rect x="173.00" y="584.00" width="1.00" height="1.00" fill="#b4b4b4" />
<rect x="173.00" y="588.00" width="1.00" height="1.00" fill="#b4b4b4" />
<rect x="173.00" y="592.00" width="1.00" height="1.00" fill="#b4b4b4" />
<rect x="173.00" y="596.00" width="1.00" height="1.00" fill="#b4b4b4" />
<rect x="173.00" y="600.00" width="1.00" height="1.00" fill="#b4b4b4" />
<rect x="173.00" y="604.00" width="1.00" height="1.00" fill="#b4b4b4" />
<rect x="173.00" y="608.00" width="1.00" height="1.00" fill="#b4b4b4" />
<rect x="213.00" y="456.00" width="1.00" height="1.00" fill="#b4b4b4" />
<rect x="213.00" y="460.00" width="1.00" height="1.00" fill="#b4b4b4" />
<rect x="213.00" y="464.00" width="1.00" height="1.00" fill="#b4b4b4" />
<rect x="213.00" y="468.00" width="1.00" height="1.00" fill="#b4b4b4" />
<rect x="213.00" y="472.00" width="1.00" height="1.00" fill="#b4b4b4" />
<rect x="213.00" y="476.00" width="1.00" height="1.00" fill="#b4b4b4" />
<rect x="213.00" y="480.00" width="1.00" height="1.00" fill="#b4b4b4" />
<rect x="213.00" y="484.00" width="1.00" height="1.00" fill="#b4b4b4" />
<rect x="213.00" y="488.00" width="1.00" height="1.00" fill="#b4b4b4" />
<rect x="213.00" y="492.00" width="1.00" height="1.00" fill="#b4b4b4" />
<rect x="213.00" y="496.00" width="1.00" height="1.00" fill="#b4b4b4" />
<rect x="213.00" y="500.00" width="1.00" height="1.00" fill="#b4b4b4" />
<rect x="213.00" y="504.00" width="1.00" height="1.00" fill="#b4b4b4" />
<rect x="213.00" y="508.00" width="1.00" height="1.00" fill="#b4b4b4" />
<rect x="213.00" y="512.00" width="1.00" height="1.00" fill="#b4b4b4" />
<rect x="213.00" y="516.00" width="1.00" height="1.00" fill="#b4b4b4" />
<rect x="213.00" y="520.00" width="1.00" height="1.00" fill="#b4b4b4" />
<rect x="213.00" y="524.00" width="1.00" height="1.00" fill="#b4b4b4" />
<rect x="213.00" y="528.00" width="1.00" height="1.00" fill="#b4b4b4" />
<rect x="213.00" y="532.00" width="1.00" height="1.00" fill="#b4b4b4" />
<rect x="213.00" y="536.00" width="1.00" height="1.00" fill="#b4b4b4" />
<rect x="213.00" y="540.00" width="1.00" height="1.00" fill="#b4b4b4" />
<rect x="213.00" y="544.00" width="1.00" height="1.00" fill="#b4b4b4" />
<rect x="213.00" y="548.00" width="1.00" height="1.00" fill="#b4b4b4" />
<rect x="213.00" y="552.00" width="1.00" height="1.00" fill="#b4b4b4" />
<rect x="213.00" y="556.00" width="1.00" height="1.00" fill="#b4b4b4" />
<rect x="213.00" y="560.00" width="1.00" height="1.00" fill="#b4b4b4" />
<rect x="213.00" y="564.00" width="1.00" height="1.00" fill="#b4b4b4" />
<rect x="213.00" y="568.00" width="1.00" height="1.00" fill="#b4b4b4" />
<rect x="213.00" y="572.00" width="1.00" height="1.00" fill="#b4b4b4" />
<rect x="213.00" y="576.00" width="1.00" height="1.00" fill="#b4b4b4" />
<rect x="213.00" y="580.00" width="1.00" height="1.00" fill="#b4b4b4" />
<rect x="213.00" y="584.00" width="1.00" height="1.00" fill="#b4b4b4" />
<rect x="213.00" y="588.00" width="1.00" height="1.00" fill="#b4b4b4" />
<rect x="213.00" y="592.00" width="1.00" height="1.00" fill="#b4b4b4" />
<rect x="213.00" y="596.00" width="1.00" height="1.00" fill="#b4b4b4" />
<rect x="213.00" y="600.00" width="1.00" height="1.00" fill="#b4b4b4" />
<rect x="213.00" y="604.00" width="1.00" height="1.00" fill="#b4b4b4" />
<rect x="213.00" y="608.00" width="1.00" height="1.00" fill="#b4b4b4" />
<rect x="253.00" y="456.00" width="1.00" height="1.00" fill="#b4b4b4" />
<rect x="253.00" y="460.00" width="1.00" height="1.00" fill="#b4b4b4" />
<rect x="253.00" y="464.00" width="1.00" height="1.00" fill="#b4b4b4" />
<rect x="253.00" y="468.00" width="1.00" height="1.00" fill="#b4b4b4" />
<rect x="253.00" y="472.00" width="1.00" height="1.00" fill="#b4b4b4" />
<rect x="253.00" y="476.00" width="1.00" height="1.00" fill="#b4b4b4" />
<rect x="253.00" y="480.00" width="1.00" height="1.00" fill="#b4b4b4" />
<rect x="253.00" y="484.00" width="1.00" height="1.00" fill="#b4b4b4" />
<rect x="253.00" y="488.00" width="1.00" height="1.00" fill="#b4b4b4" />
<rect x="253.00" y="492.00" width="1.00" height="1.00" fill="#b4b4b4" />
<rect x="253.00" y="496.00" width="1.00" height="1.00" fill="#b4b4b4" />
<rect x="253.00" y="500.00" width="1.00" height="1.00" fill="#b4b4b4" />
<rect x="253.00" y="504.00" width="1.00" height="1.00" fill="#b4b4b4" />
<rect x="253.00" y="508.00" width="1.00" height="1.00" fill="#b4b4b4" />
<rect x="253.00" y="512.00" width="1.00" height="1.00" fill="#b4b4b4" />
<rect x="253.00" y="516.00" width="1.00" height="1.00" fill="#b4b4b4" />
<rect x="253.00" y="520.00" width="1.00" height="1.00" fill="#b4b4b4" />
<rect x="253.00" y="524.00" width="1.00" height="1.00" fill="#b4b4b4" />
<rect x="253.00" y="528.00" width="1.00" height="1.00" fill="#b4b4b4" />
<rect x="253.00" y="532.00" width="1.00" height="1.00" fill="#b4b4b4" />
<rect x="253.00" y="536.00" width="1.00" height="1.00" fill="#b4b4b4" />
<rect x="253.00" y="540.00" width="1.00" height="1.00" fill="#b4b4b4" />
<rect x="253.00" y="544.00" width="1.00" height="1.00" fill="#b4b4b4" />
<rect x="253.00" y="548.00" width="1.00" height="1.00" fill="#b4b4b4" />
<rect x="253.00" y="552.00" width="1.00" height="1.00" fill="#b4b4b4" />
<rect x="253.00" y="556.00" width="1.00" height="1.00" fill="#b4b4b4" />
<rect x="253.00" y="560.00" width="1.00" height="1.00" fill="#b4b4b4" />
<rect x="253.00" y="564.00" width="1.00" height="1.00" fill="#b4b4b4" />
<rect x="253.00" y="568.00" width="1.00" height="1.00" fill="#b4b4b4" />
<rect x="253.00" y="572.00" width="1.00" height="1.00" fill="#b4b4b4" />
<rect x="253.00" y="576.00" width="1.00" height="1.00" fill="#b4b4b4" />
<rect x="253.00" y="580.00" width="1.00" height="1.00" fill="#b4b4b4" />
<rect x="253.00" y="584.00" width="1.00" height="1.00" fill="#b4b4b4" />
<rect x="253.00" y="588.00" width="1.00" height="1.00" fill="#b4b4b4" />
<rect x="253.00" y="592.00" width="1.00" height="1.00" fill="#b4b4b4" />
<rect x="253.00" y="596.00" width="1.00" height="1.00" fill="#b4b4b4" />
<rect x="253.00" y="600.00" width="1.00" height="1.00" fill="#b4b4b4" />
<rect x="253.00" y="604.00" width="1.00" height="1.00" fill="#b4b4b4" />
<rect x="253.00" y="608.00" width="1.00" height="1.00" fill="#b4b4b4" />
<rect x="293.00" y="456.00" width="1.00" height="1.00" fill="#b4b4b4" />
<rect x="293.00" y="460.00" width="1.00" height="1.00" fill="#b4b4b4" />
<rect x="293.00" y="464.00" width="1.00" height="1.00" fill="#b4b4b4" />
<rect x="293.00" y="468.00" width="1.00" height="1.00" fill="#b4b4b4" />
<rect x="293.00" y="472.00" width="1.00" height="1.00" fill="#b4b4b4" />
<rect x="293.00" y="476.00" width="1.00" height="1.00" fill="#b4b4b4" />
<rect x="293.00" y="480.00" width="1.00" height="1.00" fill="#b4b4b4" />
<rect x="293.00" y="484.00" width="1.00" height="1.00" fill="#b4b4b4" />
<rect x="293.00" y="488.00" width="1.00" height="1.00" fill="#b4b4b4" />
<rect x="293.00" y="492.00" width="1.00" height="1.00" fill="#b4b4b4" />
<rect x="293.00" y="496.00" width="1.00" height="1.00" fill="#b4b4b4" />
<rect x="293.00" y="500.00" width="1.00" height="1.00" fill="#b4b4b4" />
<rect x="293.00" y="504.00" width="1.00" height="1.00" fill="#b4b4b4" />
<rect x="293.00" y="508.00" width="1.00" height="1.00" fill="#b4b4b4" />
<rect x="293.00" y="512.00" width="1.00" height="1.00" fill="#b4b4b4" />
<rect x="293.00" y="516.00" width="1.00" height="1.00" fill="#b4b4b4" />
<rect x="293.00" y="520.00" width="1.00" height="1.00" fill="#b4b4b4" />
<rect x="293.00" y="524.00" width="1.00" height="1.00" fill="#b4b4b4" />
<rect x="293.00" y="528.00" width="1.00" height="1.00" fill="#b4b4b4" />
<rect x="293.00" y="532.00" width="1.00" height="1.00" fill="#b4b4b4" />
<rect x="293.00" y="536.00" width="1.00" height="1.00" fill="#b4b4b4" />
<rect x="293.00" y="540.00" width="1.00" height="1.00" fill="#b4b4b4" />
<rect x="293.00" y="544.00" width="1.00" height="1.00" fill="#b4b4b4" />
<rect x="293.00" y="548.00" width="1.00" height="1.00" fill="#b4b4b4" />
<rect x="293.00" y="552.00" width="1.00" height="1.00" fill="#b4b4b4" />
<rect x="293.00" y="556.00" width="1.00" height="1.00" fill="#b4b4b4" />
<rect x="293.00" y="560.00" width="1.00" height="1.00" fill="#b4b4b4" />
<rect x="293.00" y="564.00" width="1.00" height="1.00" fill="#b4b4b4" />
<rect x="293.00" y="568.00" width="1.00" height="1.00" fill="#b4b4b4" />
<rect x="293.00" y="572.00" width="1.00" height="1.00" fill="#b4b4b4" />
<rect x="293.00" y="576.00" width="1.00" height="1.00" fill="#b4b4b4" />
<rect x="293.00" y="580.00" width="1.00" height="1.00" fill="#b4b4b4" />
<rect x="293.00" y="584.00" width="1.00" height="1.00" fill="#b4b4b4" />
<rect x="293.00" y="588.00" width="1.00" height="1.00" fill="#b4b4b4" />
<rect x="293.00" y="592.00" width="1.00" height="1.00" fill="#b4b4b4" />
<rect x="293.00" y="596.00" width="1.00" height="1.00" fill="#b4b4b4" />
<rect x="293.00" y="600.00" width="1.00" height="1.00" fill="#b4b4b4" />
<rect x="293.00" y="604.00" width="1.00" height="1.00" fill="#b4b4b4" />
<rect x="293.00" y="608.00" width="1.00" height="1.00" fill="#b4b4b4" />
<rect x="333.00" y="456.00" width="1.00" height="1.00" fill="#b4b4b4" />
<rect x="333.00" y="460.00" width="1.00" height="1.00" fill="#b4b4b4" />
<rect x="333.00" y="464.00" width="1.00" height="1.00" fill="#b4b4b4" />
<rect x="333.00" y="468.00" width="1.00" height="1.00" fill="#b4b4b4" />
<rect x="333.00" y="472.00" width="1.00" height="1.00" fill="#b4b4b4" />
<rect x="333.00" y="476.00" width="1.00" height="1.00" fill="#b4b4b4" />
<rect x="333.00" y="480.00" width="1.00" height="1.00" fill="#b4b4b4" />
<rect x="333.00" y="484.00" width="1.00" height="1.00" fill="#b4b4b4" />
<rect x="333.00" y="488.00" width="1.00" height="1.00" fill="#b4b4b4" />
<rect x="333.00" y="492.00" width="1.00" height="1.00" fill="#b4b4b4" />
<rect x="333.00" y="496.00" width="1.00" height="1.00" fill="#b4b4b4" />
<rect x="333.00" y="500.00" width="1.00" height="1.00" fill="#b4b4b4" />
<rect x="333.00" y="504.00" width="1.00" height="1.00" fill="#b4b4b4" />
<rect x="333.00" y="508.00" width="1.00" height="1.00" fill="#b4b4b4" />
<rect x="333.00" y="512.00" width="1.00" height="1.00" fill="#b4b4b4" />
<rect x="333.00" y="516.00" width="1.00" height="1.00" fill="#b4b4b4" />
<rect x="333.00" y="520.00" width="1.00" height="1.00" fill="#b4b4b4" />
<rect x="333.00" y="524.00" width="1.00" height="1.00" fill="#b4b4b4" />
<rect x="333.00" y="528.00" width="1.00" height="1.00" fill="#b4b4b4" />
<rect x="333.00" y="532.00" width="1.00" height="1.00" fill="#b4b4b4" />
<rect x="333.00" y="536.00" width="1.00" height="1.00" fill="#b4b4b4" />
<rect x="333.00" y="540.00" width="1.00" height="1.00" fill="#b4b4b4" />
<rect x="333.00" y="544.00" width="1.00" height="1.00" fill="#b4b4b4" />
<rect x="333.00" y="548.00" width="1.00" height="1.00" fill="#b4b4b4" />
<rect x="333.00" y="552.00" width="1.00" height="1.00" fill="#b4b4b4" />
<rect x="333.00" y="556.00" width="1.00" height="1.00" fill="#b4b4b4" />
<rect x="333.00" y="560.00" width="1.00" height="1.00" fill="#b4b4b4" />
<rect x="333.00" y="564.00" width="1.00" height="1.00" fill="#b4b4b4" />
<rect x="333.00" y="568.00" width="1.00" height="1.00" fill="#b4b4b4" />
<rect x="333.00" y="572.00" width="1.00" height="1.00" fill="#b4b4b4" />
<rect x="333.00" y="576.00" width="1.00" height="1.00" fill="#b4b4b4" />
<rect x="333.00" y="580.00" width="1.00" height="1.00" fill="#b4b4b4" />
<rect x="333.00" y="584.00" width="1.00" height="1.00" fill="#b4b4b4" />
<rect x="333.00" y="588.00" width="1.00" height="1.00" fill="#b4b4b4" />
<rect x="333.00" y="592.00" width="1.00" height="1.00" fill="#b4b4b4" />
<rect x="333.00" y="596.00" width="1.00" height="1.00" fill="#b4b4b4" />
<rect x="333.00" y="600.00" width="1.00" height="1.00" fill="#b4b4b4" />
<rect x="333.00" y="604.00" width="1.00" height="1.00" fill="#b4b4b4" />
<rect x="333.00" y="608.00" width="1.00" height="1.00" fill="#b4b4b4" />
<rect x="413.00" y="456.00" width="1.00" height="1.00" fill="#b4b4b4" />
<rect x="413.00" y="460.00" width="1.00" height="1.00" fill="#b4b4b4" />
<rect x="413.00" y="464.00" width="1.00" height="1.00" fill="#b4b4b4" />
<rect x="413.00" y="468.00" width="1.00" height="1.00" fill="#b4b4b4" />
<rect x="413.00" y="472.00" width="1.00" height="1.00" fill="#b4b4b4" />
<rect x="413.00" y="476.00" width="1.00" height="1.00" fill="#b4b4b4" />
<rect x="413.00" y="480.00" width="1.00" height="1.00" fill="#b4b4b4" />
<rect x="413.00" y="484.00" width="1.00" height="1.00" fill="#b4b4b4" />
<rect x="413.00" y="488.00" width="1.00" height="1.00" fill="#b4b4b4" />
<rect x="413.00" y="492.00" width="1.00" height="1.00" fill="#b4b4b4" />
<rect x="413.00" y="496.00" width="1.00" height="1.00" fill="#b4b4b4" />
<rect x="413.00" y="500.00" width="1.00" height="1.00" fill="#b4b4b4" />
<rect x="413.00" y="504.00" width="1.00" height="1.00" fill="#b4b4b4" />
<rect x="413.00" y="508.00" width="1.00" height="1.00" fill="#b4b4b4" />
<rect x="413.00" y="512.00" width="1.00" height="1.00" fill="#b4b4b4" />
<rect x="413.00" y="516.00" width="1.00" height="1.00" fill="#b4b4b4" />
<rect x="413.00" y="520.00" width="1.00" height="1.00" fill="#b4b4b4" />
<rect x="413.00" y="524.00" width="1.00" height="1.00" fill="#b4b4b4" />
<rect x="413.00" y="528.00" width="1.00" height="1.00" fill="#b4b4b4" />
<rect x="413.00" y="532.00" width="1.00" height="1.00" fill="#b4b4b4" />
<rect x="413.00" y="536.00" width="1.00" height="1.00" fill="#b4b4b4" />
<rect x="413.00" y="540.00" width="1.00" height="1.00" fill="#b4b4b4" />
<rect x="413.00" y="544.00" width="1.00" height="1.00" fill="#b4b4b4" />
<rect x="413.00" y="548.00" width="1.00" height="1.00" fill="#b4b4b4" />
<rect x="413.00" y="552.00" width="1.00" height="1.00" fill="#b4b4b4" />
<rect x="413.00" y="556.00" width="1.00" height="1.00" fill="#b4b4b4" />
<rect x="413.00" y="560.00" width="1.00" height="1.00" fill="#b4b4b4" />
<rect x="413.00" y="564.00" width="1.00" height="1.00" fill="#b4b4b4" />
<rect x="413.00" y="568.00" width="1.00" height="1.00" fill="#b4b4b4" />
<rect x="413.00" y="572.00" width="1.00" height="1.00" fill="#b4b4b4" />
<rect x="413.00" y="576.00" width="1.00" height="1.00" fill="#b4b4b4" />
<rect x="413.00" y="580.00" width="1.00" height="1.00" fill="#b4b4b4" />
<rect x="413.00" y="584.00" width="1.00" height="1.00" fill="#b4b4b4" />
<rect x="413.00" y="588.00" width="1.00" height="1.00" fill="#b4b4b4" />
<rect x="413.00" y="592.00" width="1.00" height="1.00" fill="#b4b4b4" />
<rect x="413.00" y="596.00" width="1.00" height="1.00" fill="#b4b4b4" />
<rect x="413.00" y="600.00" width="1.00" height="1.00" fill="#b4b4b4" />
<rect x="413.00" y="604.00" width="1.00" height="1.00" fill="#b4b4b4" />
<rect x="413.00" y="608.00" width="1.00" height="1.00" fill="#b4b4b4" />
<rect x="453.00" y="456.00" width="1.00" height="1.00" fill="#b4b4b4" />
<rect x="453.00" y="460.00" width="1.00" height="1.00" fill="#b4b4b4" />
<rect x="453.00" y="464.00" width="1.00" height="1.00" fill="#b4b4b4" />
<rect x="453.00" y="468.00" width="1.00" height="1.00" fill="#b4b4b4" />
<rect x="453.00" y="472.00" width="1.00" height="1.00" fill="#b4b4b4" />
<rect x="453.00" y="476.00" width="1.00" height="1.00" fill="#b4b4b4" />
<rect x="453.00" y="480.00" width="1.00" height="1.00" fill="#b4b4b4" />
<rect x="453.00" y="484.00" width="1.00" height="1.00" fill="#b4b4b4" />
<rect x="453.00" y="488.00" width="1.00" height="1.00" fill="#b4b4b4" />
<rect x="453.00" y="492.00" width="1.00" height="1.00" fill="#b4b4b4" />
<rect x="453.00" y="496.00" width="1.00" height="1.00" fill="#b4b4b4" />
<rect x="453.00" y="500.00" width="1.00" height="1.00" fill="#b4b4b4" />
<rect x="453.00" y="504.00" width="1.00" height="1.00" fill="#b4b4b4" />
<rect x="453.00" y="508.00" width="1.00" height="1.00" fill="#b4b4b4" />
<rect x="453.00" y="512.00" width="1.00" height="1.00" fill="#b4b4b4" />
<rect x="453.00" y="516.00" width="1.00" height="1.00" fill="#b4b4b4" />
<rect x="453.00" y="520.00" width="1.00" height="1.00" fill="#b4b4b4" />
<rect x="453.00" y="524.00" width="1.00" height="1.00" fill="#b4b4b4" />
<rect x="453.00" y="528.00" width="1.00" height="1.00" fill="#b4b4b4" />
<rect x="453.00" y="532.00" width="1.00" height="1.00" fill="#b4b4b4" />
<rect x="453.00" y="536.00" width="1.00" height="1.00" fill="#b4b4b4" />
<rect x="453.00" y="540.00" width="1.00" height="1.00" fill="#b4b4b4" />
<rect x="453.00" y="544.00" width="1.00" height="1.00" fill="#b4b4b4" />
<rect x="453.00" y="548.00" width="1.00" height="1.00" fill="#b4b4b4" />
<rect x="453.00" y="552.00" width="1.00" height="1.00" fill="#b4b4b4" />
<rect x="453.00" y="556.00" width="1.00" height="1.00" fill="#b4b4b4" />
<rect x="453.00" y="560.00" width="1.00" height="1.00" fill="#b4b4b4" />
<rect x="453.00" y="564.00" width="1.00" height="1.00" fill="#b4b4b4" />
<rect x="453.00" y="568.00" width="1.00" height="1.00" fill="#b4b4b4" />
<rect x="453.00" y="572.00" width="1.00" height="1.00" fill="#b4b4b4" />
<rect x="453.00" y="576.00" width="1.00" height="1.00" fill="#b4b4b4" />
<rect x="453.00" y="580.00" width="1.00" height="1.00" fill="#b4b4b4" />
<rect x="453.00" y="584.00" width="1.00" height="1.00" fill="#b4b4b4" />
<rect x="453.00" y="588.00" width="1.00" height="1.00" fill="#b4b4b4" />
<rect x="453.00" y="592.00" width="1.00" height="1.00" fill="#b4b4b4" />
<rect x="453.00" y="596.00" width="1.00" height="1.00" fill="#b4b4b4" />
<rect x="453.00" y="600.00" width="1.00" height="1.00" fill="#b4b4b4" />
<rect x="453.00" y="604.00" width="1.00" height="1.00" fill="#b4b4b4" />
<rect x="453.00" y="608.00" width="1.00" height="1.00" fill="#b4b4b4" />
<rect x="493.00" y="456.00" width="1.00" height="1.00" fill="#b4b4b4" />
<rect x="493.00" y="460.00" width="1.00" height="1.00" fill="#b4b4b4" />
<rect x="493.00" y="464.00" width="1.00" height="1.00" fill="#b4b4b4" />
<rect x="493.00" y="468.00" width="1.00" height="1.00" fill="#b4b4b4" />
<rect x="493.00" y="472.00" width="1.00" height="1.00" fill="#b4b4b4" />
<rect x="493.00" y="476.00" width="1.00" height="1.00" fill="#b4b4b4" />
<rect x="493.00" y="480.00" width="1.00" height="1.00" fill="#b4b4b4" />
<rect x="493.00" y="484.00" width="1.00" height="1.00" fill="#b4b4b4" />
<rect x="493.00" y="488.00" width="1.00" height="1.00" fill="#b4b4b4" />
<rect x="493.00" y="492.00" width="1.00" height="1.00" fill="#b4b4b4" />
<rect x="493.00" y="496.00" width="1.00" height="1.00" fill="#b4b4b4" />
<rect x="493.00" y="500.00" width="1.00" height="1.00" fill="#b4b4b4" />
<rect x="493.00" y="504.00" width="1.00" height="1.00" fill="#b4b4b4" />
<rect x="493.00" y="508.00" width="1.00" height="1.00" fill="#b4b4b4" />
<rect x="493.00" y="512.00" width="1.00" height="1.00" fill="#b4b4b4" />
<rect x="493.00" y="516.00" width="1.00" height="1.00" fill="#b4b4b4" />
<rect x="493.00" y="520.00" width="1.00" height="1.00" fill="#b4b4b4" />
<rect x="493.00" y="524.00" width="1.00" height="1.00" fill="#b4b4b4" />
<rect x="493.00" y="528.00" width="1.00" height="1.00" fill="#b4b4b4" />
<rect x="493.00" y="532.00" width="1.00" height="1.00" fill="#b4b4b4" />
<rect x="493.00" y="536.00" width="1.00" height="1.00" fill="#b4b4b4" />
<rect x="493.00" y="540.00" width="1.00" height="1.00" fill="#b4b4b4" />
<rect x="493.00" y="544.00" width="1.00" height="1.00" fill="#b4b4b4" />
<rect x="493.00" y="548.00" width="1.00" height="1.00" fill="#b4b4b4" />
<rect x="493.00" y="552.00" width="1.00" height="1.00" fill="#b4b4b4" />
<rect x="493.00" y="556.00" width="1.00" height="1.00" fill="#b4b4b4" />
<rect x="493.00" y="560.00" width="1.00" height="1.00" fill="#b4b4b4" />
<rect x="493.00" y="564.00" width="1.00" height="1.00" fill="#b4b4b4" />
<rect x="493.00" y="568.00" width="1.00" height="1.00" fill="#b4b4b4" />
<rect x="493.00" y="572.00" width="1.00" height="1.00" fill="#b4b4b4" />
<rect x="493.00" y="576.00" width="1.00" height="1.00" fill="#b4b4b4" />
<rect x="493.00" y="580.00" width="1.00" height="1.00" fill="#b4b4b4" />
<rect x="493.00" y="584.00" width="1.00" height="1.00" fill="#b4b4b4" />
<rect x="493.00" y="588.00" width="1.00" height="1.00" fill="#b4b4b4" />
<rect x="493.00" y="592.00" width="1.00" height="1.00" fill="#b4b4b4" />
<rect x="493.00" y="596.00" width="1.00" height="1.00" fill="#b4b4b4" />
<rect x="493.00" y="600.00" width="1.00" height="1.00" fill="#b4b4b4" />
<rect x="493.00" y="604.00" width="1.00" height="1.00" fill="#b4b4b4" />
<rect x="493.00" y="608.00" width="1.00" height="1.00" fill="#b4b4b4" />
<rect x="533.00" y="456.00" width="1.00" height="1.00" fill="#b4b4b4" />
<rect x="533.00" y="460.00" width="1.00" height="1.00" fill="#b4b4b4" />
<rect x="533.00" y="464.00" width="1.00" height="1.00" fill="#b4b4b4" />
<rect x="533.00" y="468.00" width="1.00" height="1.00" fill="#b4b4b4" />
<rect x="533.00" y="472.00" width="1.00" height="1.00" fill="#b4b4b4" />
<rect x="533.00" y="476.00" width="1.00" height="1.00" fill="#b4b4b4" />
<rect x="533.00" y="480.00" width="1.00" height="1.00" fill="#b4b4b4" />
<rect x="533.00" y="484.00" width="1.00" height="1.00" fill="#b4b4b4" />
<rect x="533.00" y="488.00" width="1.00" height="1.00" fill="#b4b4b4" />
<rect x="533.00" y="492.00" width="1.00" height="1.00" fill="#b4b4b4" />
<rect x="533.00" y="496.00" width="1.00" height="1.00" fill="#b4b4b4" />
<rect x="533.00" y="500.00" width="1.00" height="1.00" fill="#b4b4b4" />
<rect x="533.00" y="504.00" width="1.00" height="1.00" fill="#b4b4b4" />
<rect x="533.00" y="508.00" width="1.00" height="1.00" fill="#b4b4b4" />
<rect x="533.00" y="512.00" width="1.00" height="1.00" fill="#b4b4b4" />
<rect x="533.00" y="516.00" width="1.00" height="1.00" fill="#b4b4b4" />
<rect x="533.00" y="520.00" width="1.00" height="1.00" fill="#b4b4b4" />
<rect x="533.00" y="524.00" width="1.00" height="1.00" fill="#b4b4b4" />
<rect x="533.00" y="528.00" width="1.00" height="1.00" fill="#b4b4b4" />
<rect x="533.00" y="532.00" width="1.00" height="1.00" fill="#b4b4b4" />
<rect x="533.00" y="536.00" width="1.00" height="1.00" fill="#b4b4b4" />
<rect x="533.00" y="540.00" width="1.00" height="1.00" fill="#b4b4b4" />
<rect x="533.00" y="544.00" width="1.00" height="1.00" fill="#b4b4b4" />
<rect x="533.00" y="548.00" width="1.00" height="1.00" fill="#b4b4b4" />
<rect x="533.00" y="552.00" width="1.00" height="1.00" fill="#b4b4b4" />
<rect x="533.00" y="556.00" width="1.00" height="1.00" fill="#b4b4b4" />
<rect x="533.00" y="560.00" width="1.00" height="1.00" fill="#b4b4b4" />
<rect x="533.00" y="564.00" width="1.00" height="1.00" fill="#b4b4b4" />
<rect x="533.00" y="568.00" width="1.00" height="1.00" fill="#b4b4b4" />
<rect x="533.00" y="572.00" width="1.00" height="1.00" fill="#b4b4b4" />
<rect x="533.00" y="576.00" width="1.00" height="1.00" fill="#b4b4b4" />
<rect x="533.00" y="580.00" width="1.00" height="1.00" fill="#b4b4b4" />
<rect x="533.00" y="584.00" width="1.00" height="1.00" fill="#b4b4b4" />
<rect x="533.00" y="588.00" width="1.00" height="1.00" fill="#b4b4b4" />
<rect x="533.00" y="592.00" width="1.00" height="1.00" fill="#b4b4b4" />
<rect x="533.00" y="596.00" width="1.00" height="1.00" fill="#b4b4b4" />
<rect x="533.00" y="600.00" width="1.00" height="1.00" fill="#b4b4b4" />
<rect x="533.00" y="604.00" width="1.00" height="1.00" fill="#b4b4b4" />
<rect x="533.00" y="608.00" width="1.00" height="1.00" fill="#b4b4b4" />
<rect x="573.00" y="456.00" width="1.00" height="1.00" fill="#b4b4b4" />
<rect x="573.00" y="460.00" width="1.00" height="1.00" fill="#b4b4b4" />
<rect x="573.00" y="464.00" width="1.00" height="1.00" fill="#b4b4b4" />
<rect x="573.00" y="468.00" width="1.00" height="1.00" fill="#b4b4b4" />
<rect x="573.00" y="472.00" width="1.00" height="1.00" fill="#b4b4b4" />
<rect x="573.00" y="476.00" width="1.00" height="1.00" fill="#b4b4b4" />
<rect x="573.00" y="480.00" width="1.00" height="1.00" fill="#b4b4b4" />
<rect x="573.00" y="484.00" width="1.00" height="1.00" fill="#b4b4b4" />
<rect x="573.00" y="488.00" width="1.00" height="1.00" fill="#b4b4b4" />
<rect x="573.00" y="492.00" width="1.00" height="1.00" fill="#b4b4b4" />
<rect x="573.00" y="496.00" width="1.00" height="1.00" fill="#b4b4b4" />
<rect x="573.00" y="500.00" width="1.00" height="1.00" fill="#b4b4b4" />
<rect x="573.00" y="504.00" width="1.00" height="1.00" fill="#b4b4b4" />
<rect x="573.00" y="508.00" width="1.00" height="1.00" fill="#b4b4b4" />
<rect x="573.00" y="512.00" width="1.00" height="1.00" fill="#b4b4b4" />
<rect x="573.00" y="516.00" width="1.00" height="1.00" fill="#b4b4b4" />
<rect x="573.00" y="520.00" width="1.00" height="1.00" fill="#b4b4b4" />
<rect x="573.00" y="524.00" width="1.00" height="1.00" fill="#b4b4b4" />
<rect x="573.00" y="528.00" width="1.00" height="1.00" fill="#b4b4b4" />
<rect x="573.00" y="532.00" width="1.00" height="1.00" fill="#b4b4b4" />
<rect x="573.00" y="536.00" width="1.00" height="1.00" fill="#b4b4b4" />
<rect x="573.00" y="540.00" width="1.00" height="1.00" fill="#b4b4b4" />
<rect x="573.00" y="544.00" width="1.00" height="1.00" fill="#b4b4b4" />
<rect x="573.00" y="548.00" width="1.00" height="1.00" fill="#b4b4b4" />
<rect x="573.00" y="552.00" width="1.00" height="1.00" fill="#b4b4b4" />
<rect x="573.00" y="556.00" width="1.00" height="1.00" fill="#b4b4b4" />
<rect x="573.00" y="560.00" width="1.00" height="1.00" fill="#b4b4b4" />
<rect x="573.00" y="564.00" width="1.00" height="1.00" fill="#b4b4b4" />
<rect x="573.00" y="568.00" width="1.00" height="1.00" fill="#b4b4b4" />
<rect x="573.00" y="572.00" width="1.00" height="1.00" fill="#b4b4b4" />
<rect x="573.00" y="576.00" width="1.00" height="1.00" fill="#b4b4b4" />
<rect x="573.00" y="580.00" width="1.00" height="1.00" fill="#b4b4b4" />
<rect x="573.00" y="584.00" width="1.00" height="1.00" fill="#b4b4b4" />
<rect x="573.00" y="588.00" width="1.00" height="1.00" fill="#b4b4b4" />
<rect x="573.00" y="592.00" width="1.00" height="1.00" fill="#b4b4b4" />
<rect x="573.00" y="596.00" width="1.00" height="1.00" fill="#b4b4b4" />
<rect x="573.00" y="600.00" width="1.00" height="1.00" fill="#b4b4b4" />
<rect x="573.00" y="604.00" width="1.00" height="1.00" fill="#b4b4b4" />
<rect x="573.00" y="608.00" width="1.00" height="1.00" fill="#b4b4b4" />
<rect x="613.00" y="456.00" width="1.00" height="1.00" fill="#b4b4b4" />
<rect x="613.00" y="460.00" width="1.00" height="1.00" fill="#b4b4b4" />
<rect x="613.00" y="464.00" width="1.00" height="1.00" fill="#b4b4b4" />
<rect x="613.00" y="468.00" width="1.00" height="1.00" fill="#b4b4b4" />
<rect x="613.00" y="472.00" width="1.00" height="1.00" fill="#b4b4b4" />
<rect x="613.00" y="476.00" width="1.00" height="1.00" fill="#b4b4b4" />
<rect x="613.00" y="480.00" width="1.00" height="1.00" fill="#b4b4b4" />
<rect x="613.00" y="484.00" width="1.00" height="1.00" fill="#b4b4b4" />
<rect x="613.00" y="488.00" width="1.00" height="1.00" fill="#b4b4b4" />
<rect x="613.00" y="492.00" width="1.00" height="1.00" fill="#b4b4b4" />
<rect x="613.00" y="496.00" width="1.00" height="1.00" fill="#b4b4b4" />
<rect x="613.00" y="500.00" width="1.00" height="1.00" fill="#b4b4b4" />
<rect x="613.00" y="504.00" width="1.00" height="1.00" fill="#b4b4b4" />
<rect x="613.00" y="508.00" width="1.00" height="1.00" fill="#b4b4b4" />
<rect x="613.00" y="512.00" width="1.00" height="1.00" fill="#b4b4b4" />
<rect x="613.00" y="516.00" width="1.00" height="1.00" fill="#b4b4b4" />
<rect x="613.00" y="520.00" width="1.00" height="1.00" fill="#b4b4b4" />
<rect x="613.00" y="524.00" width="1.00" height="1.00" fill="#b4b4b4" />
<rect x="613.00" y="528.00" width="1.00" height="1.00" fill="#b4b4b4" />
<rect x="613.00" y="532.00" width="1.00" height="1.00" fill="#b4b4b4" />
<rect x="613.00" y="536.00" width="1.00" height="1.00" fill="#b4b4b4" />
<rect x="613.00" y="540.00" width="1.00" height="1.00" fill="#b4b4b4" />
<rect x="613.00" y="544.00" width="1.00" height="1.00" fill="#b4b4b4" />
<rect x="613.00" y="548.00" width="1.00" height="1.00" fill="#b4b4b4" />
<rect x="613.00" y="552.00" width="1.00" height="1.00" fill="#b4b4b4" />
<rect x="613.00" y="556.00" width="1.00" height="1.00" fill="#b4b4b4" />
<rect x="613.00" y="560.00" width="1.00" height="1.00" fill="#b4b4b4" />
<rect x="613.00" y="564.00" width="1.00" height="1.00" fill="#b4b4b4" />
<rect x="613.00" y="568.00" width="1.00" height="1.00" fill="#b4b4b4" />
<rect x="613.00" y="572.00" width="1.00" height="1.00" fill="#b4b4b4" />
<rect x="613.00" y="576.00" width="1.00" height="1.00" fill="#b4b4b4" />
<rect x="613.00" y="580.00" width="1.00" height="1.00" fill="#b4b4b4" />
<rect x="613.00" y="584.00" width="1.00" height="1.00" fill="#b4b4b4" />
<rect x="613.00" y="588.00" width="1.00" height="1.00" fill="#b4b4b4" />
<rect x="613.00" y="592.00" width="1.00" height="1.00" fill="#b4b4b4" />
<rect x="613.00" y="596.00" width="1.00" height="1.00" fill="#b4b4b4" />
<rect x="613.00" y="600.00" width="1.00" height="1.00" fill="#b4b4b4" />
<rect x="613.00" y="604.00" width="1.00" height="1.00" fill="#b4b4b4" />
<rect x="613.00" y="608.00" width="1.00" height="1.00" fill="#b4b4b4" />
<rect x="653.00" y="456.00" width="1.00" height="1.00" fill="#b4b4b4" />
<rect x="653.00" y="460.00" width="1.00" height="1.00" fill="#b4b4b4" />
<rect x="653.00" y="464.00" width="1.00" height="1.00" fill="#b4b4b4" />
<rect x="653.00" y="468.00" width="1.00" height="1.00" fill="#b4b4b4" />
<rect x="653.00" y="472.00" width="1.00" height="1.00" fill="#b4b4b4" />
<rect x="653.00" y="476.00" width="1.00" height="1.00" fill="#b4b4b4" />
<rect x="653.00" y="480.00" width="1.00" height="1.00" fill="#b4b4b4" />
<rect x="653.00" y="484.00" width="1.00" height="1.00" fill="#b4b4b4" />
<rect x="653.00" y="488.00" width="1.00" height="1.00" fill="#b4b4b4" />
<rect x="653.00" y="492.00" width="1.00" height="1.00" fill="#b4b4b4" />
<rect x="653.00" y="496.00" width="1.00" height="1.00" fill="#b4b4b4" />
<rect x="653.00" y="500.00" width="1.00" height="1.00" fill="#b4b4b4" />
<rect x="653.00" y="504.00" width="1.00" height="1.00" fill="#b4b4b4" />
<rect x="653.00" y="508.00" width="1.00" height="1.00" fill="#b4b4b4" />
<rect x="653.00" y="512.00" width="1.00" height="1.00" fill="#b4b4b4" />
<rect x="653.00" y="516.00" width="1.00" height="1.00" fill="#b4b4b4" />
<rect x="653.00" y="520.00" width="1.00" height="1.00" fill="#b4b4b4" />
<rect x="653.00" y="524.00" width="1.00" height="1.00" fill="#b4b4b4" />
<rect x="653.00" y="528.00" width="1.00" height="1.00" fill="#b4b4b4" />
<rect x="653.00" y="532.00" width="1.00" height="1.00" fill="#b4b4b4" />
<rect x="653.00" y="536.00" width="1.00" height="1.00" fill="#b4b4b4" />
<rect x="653.00" y="540.00" width="1.00" height="1.00" fill="#b4b4b4" />
<rect x="653.00" y="544.00" width="1.00" height="1.00" fill="#b4b4b4" />
<rect x="653.00" y="548.00" width="1.00" height="1.00" fill="#b4b4b4" />
<rect x="653.00" y="552.00" width="1.00" height="1.00" fill="#b4b4b4" />
<rect x="653.00" y="556.00" width="1.00" height="1.00" fill="#b4b4b4" />
<rect x="653.00" y="560.00" width="1.00" height="1.00" fill="#b4b4b4" />
<rect x="653.00" y="564.00" width="1.00" height="1.00" fill="#b4b4b4" />
<rect x="653.00" y="568.00" width="1.00" height="1.00" fill="#b4b4b4" />
<rect x="653.00" y="572.00" width="1.00" height="1.00" fill="#b4b4b4" />
<rect x="653.00" y="576.00" width="1.00" height="1.00" fill="#b4b4b4" />
<rect x="653.00" y="580.00" width="1.00" height="1.00" fill="#b4b4b4" />
<rect x="653.00" y="584.00" width="1.00" height="1.00" fill="#b4b4b4" />
<rect x="653.00" y="588.00" width="1.00" height="1.00" fill="#b4b4b4" />
<rect x="653.00" y="592.00" width="1.00" height="1.00" fill="#b4b4b4" />
<rect x="653.00" y="596.00" width="1.00" height="1.00" fill="#b4b4b4" />
<rect x="653.00" y="600.00" width="1.00" height="1.00" fill="#b4b4b4" />
<rect x="653.00" y="604.00" width="1.00" height="1.00" fill="#b4b4b4" />
<rect x="653.00" y="608.00" width="1.00" height="1.00" fill="#b4b4b4" />
<line x1="66.50" y1="453.50" x2="681.50" y2="453.50" stroke="#dedede" stroke-width="1.3" />
<line x1="66.50" y1="612.50" x2="681.50" y2="612.50" stroke="#dedede" stroke-width="1.3" />
<line x1="66.50" y1="453.50" x2="66.50" y2="612.50" stroke="#dedede" stroke-width="1.3" />
<line x1="681.50" y1="453.50" x2="681.50" y2="612.50" stroke="#dedede" stroke-width="1.3" />
<line x1="69.50" y1="453.50" x2="69.50" y2="456.10" stroke="#dedede" stroke-width="1.1" />
<line x1="69.50" y1="609.90" x2="69.50" y2="612.50" stroke="#dedede" stroke-width="1.1" />
<line x1="69.50" y1="529.70" x2="69.50" y2="535.30" stroke="#dedede" stroke-width="1.1" />
<line x1="77.50" y1="453.50" x2="77.50" y2="456.10" stroke="#dedede" stroke-width="1.1" />
<line x1="77.50" y1="609.90" x2="77.50" y2="612.50" stroke="#dedede" stroke-width="1.1" />
<line x1="77.50" y1="529.70" x2="77.50" y2="535.30" stroke="#dedede" stroke-width="1.1" />
<line x1="85.50" y1="453.50" x2="85.50" y2="456.10" stroke="#dedede" stroke-width="1.1" />
<line x1="85.50" y1="609.90" x2="85.50" y2="612.50" stroke="#dedede" stroke-width="1.1" />
<line x1="85.50" y1="529.70" x2="85.50" y2="535.30" stroke="#dedede" stroke-width="1.1" />
<line x1="93.50" y1="453.50" x2="93.50" y2="456.10" stroke="#dedede" stroke-width="1.1" />
<line x1="93.50" y1="609.90" x2="93.50" y2="612.50" stroke="#dedede" stroke-width="1.1" />
<line x1="93.50" y1="529.70" x2="93.50" y2="535.30" stroke="#dedede" stroke-width="1.1" />
<line x1="101.50" y1="453.50" x2="101.50" y2="456.10" stroke="#dedede" stroke-width="1.1" />
<line x1="101.50" y1="609.90" x2="101.50" y2="612.50" stroke="#dedede" stroke-width="1.1" />
<line x1="101.50" y1="529.70" x2="101.50" y2="535.30" stroke="#dedede" stroke-width="1.1" />
<line x1="109.50" y1="453.50" x2="109.50" y2="456.10" stroke="#dedede" stroke-width="1.1" />
<line x1="109.50" y1="609.90" x2="109.50" y2="612.50" stroke="#dedede" stroke-width="1.1" />
<line x1="109.50" y1="529.70" x2="109.50" y2="535.30" stroke="#dedede" stroke-width="1.1" />
<line x1="117.50" y1="453.50" x2="117.50" y2="456.10" stroke="#dedede" stroke-width="1.1" />
<line x1="117.50" y1="609.90" x2="117.50" y2="612.50" stroke="#dedede" stroke-width="1.1" />
<line x1="117.50" y1="529.70" x2="117.50" y2="535.30" stroke="#dedede" stroke-width="1.1" />
<line x1="125.50" y1="453.50" x2="125.50" y2="456.10" stroke="#dedede" stroke-width="1.1" />
<line x1="125.50" y1="609.90" x2="125.50" y2="612.50" stroke="#dedede" stroke-width="1.1" />
<line x1="125.50" y1="529.70" x2="125.50" y2="535.30" stroke="#dedede" stroke-width="1.1" />
<line x1="133.50" y1="453.50" x2="133.50" y2="456.10" stroke="#dedede" stroke-width="1.1" />
<line x1="133.50" y1="609.90" x2="133.50" y2="612.50" stroke="#dedede" stroke-width="1.1" />
<line x1="133.50" y1="529.70" x2="133.50" y2="535.30" stroke="#dedede" stroke-width="1.1" />
<line x1="141.50" y1="453.50" x2="141.50" y2="456.10" stroke="#dedede" stroke-width="1.1" />
<line x1="141.50" y1="609.90" x2="141.50" y2="612.50" stroke="#dedede" stroke-width="1.1" />
<line x1="141.50" y1="529.70" x2="141.50" y2="535.30" stroke="#dedede" stroke-width="1.1" />
<line x1="149.50" y1="453.50" x2="149.50" y2="456.10" stroke="#dedede" stroke-width="1.1" />
<line x1="149.50" y1="609.90" x2="149.50" y2="612.50" stroke="#dedede" stroke-width="1.1" />
<line x1="149.50" y1="529.70" x2="149.50" y2="535.30" stroke="#dedede" stroke-width="1.1" />
<line x1="157.50" y1="453.50" x2="157.50" y2="456.10" stroke="#dedede" stroke-width="1.1" />
<line x1="157.50" y1="609.90" x2="157.50" y2="612.50" stroke="#dedede" stroke-width="1.1" />
<line x1="157.50" y1="529.70" x2="157.50" y2="535.30" stroke="#dedede" stroke-width="1.1" />
<line x1="165.50" y1="453.50" x2="165.50" y2="456.10" stroke="#dedede" stroke-width="1.1" />
<line x1="165.50" y1="609.90" x2="165.50" y2="612.50" stroke="#dedede" stroke-width="1.1" />
<line x1="165.50" y1="529.70" x2="165.50" y2="535.30" stroke="#dedede" stroke-width="1.1" />
<line x1="173.50" y1="453.50" x2="173.50" y2="456.10" stroke="#dedede" stroke-width="1.1" />
<line x1="173.50" y1="609.90" x2="173.50" y2="612.50" stroke="#dedede" stroke-width="1.1" />
<line x1="173.50" y1="529.70" x2="173.50" y2="535.30" stroke="#dedede" stroke-width="1.1" />
<line x1="181.50" y1="453.50" x2="181.50" y2="456.10" stroke="#dedede" stroke-width="1.1" />
<line x1="181.50" y1="609.90" x2="181.50" y2="612.50" stroke="#dedede" stroke-width="1.1" />
<line x1="181.50" y1="529.70" x2="181.50" y2="535.30" stroke="#dedede" stroke-width="1.1" />
<line x1="189.50" y1="453.50" x2="189.50" y2="456.10" stroke="#dedede" stroke-width="1.1" />
<line x1="189.50" y1="609.90" x2="189.50" y2="612.50" stroke="#dedede" stroke-width="1.1" />
<line x1="189.50" y1="529.70" x2="189.50" y2="535.30" stroke="#dedede" stroke-width="1.1" />
<line x1="197.50" y1="453.50" x2="197.50" y2="456.10" stroke="#dedede" stroke-width="1.1" />
<line x1="197.50" y1="609.90" x2="197.50" y2="612.50" stroke="#dedede" stroke-width="1.1" />
<line x1="197.50" y1="529.70" x2="197.50" y2="535.30" stroke="#dedede" stroke-width="1.1" />
<line x1="205.50" y1="453.50" x2="205.50" y2="456.10" stroke="#dedede" stroke-width="1.1" />
<line x1="205.50" y1="609.90" x2="205.50" y2="612.50" stroke="#dedede" stroke-width="1.1" />
<line x1="205.50" y1="529.70" x2="205.50" y2="535.30" stroke="#dedede" stroke-width="1.1" />
<line x1="213.50" y1="453.50" x2="213.50" y2="456.10" stroke="#dedede" stroke-width="1.1" />
<line x1="213.50" y1="609.90" x2="213.50" y2="612.50" stroke="#dedede" stroke-width="1.1" />
<line x1="213.50" y1="529.70" x2="213.50" y2="535.30" stroke="#dedede" stroke-width="1.1" />
<line x1="221.50" y1="453.50" x2="221.50" y2="456.10" stroke="#dedede" stroke-width="1.1" />
<line x1="221.50" y1="609.90" x2="221.50" y2="612.50" stroke="#dedede" stroke-width="1.1" />
<line x1="221.50" y1="529.70" x2="221.50" y2="535.30" stroke="#dedede" stroke-width="1.1" />
<line x1="229.50" y1="453.50" x2="229.50" y2="456.10" stroke="#dedede" stroke-width="1.1" />
<line x1="229.50" y1="609.90" x2="229.50" y2="612.50" stroke="#dedede" stroke-width="1.1" />
<line x1="229.50" y1="529.70" x2="229.50" y2="535.30" stroke="#dedede" stroke-width="1.1" />
<line x1="237.50" y1="453.50" x2="237.50" y2="456.10" stroke="#dedede" stroke-width="1.1" />
<line x1="237.50" y1="609.90" x2="237.50" y2="612.50" stroke="#dedede" stroke-width="1.1" />
<line x1="237.50" y1="529.70" x2="237.50" y2="535.30" stroke="#dedede" stroke-width="1.1" />
<line x1="245.50" y1="453.50" x2="245.50" y2="456.10" stroke="#dedede" stroke-width="1.1" />
<line x1="245.50" y1="609.90" x2="245.50" y2="612.50" stroke="#dedede" stroke-width="1.1" />
<line x1="245.50" y1="529.70" x2="245.50" y2="535.30" stroke="#dedede" stroke-width="1.1" />
<line x1="253.50" y1="453.50" x2="253.50" y2="456.10" stroke="#dedede" stroke-width="1.1" />
<line x1="253.50" y1="609.90" x2="253.50" y2="612.50" stroke="#dedede" stroke-width="1.1" />
<line x1="253.50" y1="529.70" x2="253.50" y2="535.30" stroke="#dedede" stroke-width="1.1" />
<line x1="261.50" y1="453.50" x2="261.50" y2="456.10" stroke="#dedede" stroke-width="1.1" />
<line x1="261.50" y1="609.90" x2="261.50" y2="612.50" stroke="#dedede" stroke-width="1.1" />
<line x1="261.50" y1="529.70" x2="261.50" y2="535.30" stroke="#dedede" stroke-width="1.1" />
<line x1="269.50" y1="453.50" x2="269.50" y2="456.10" stroke="#dedede" stroke-width="1.1" />
<line x1="269.50" y1="609.90" x2="269.50" y2="612.50" stroke="#dedede" stroke-width="1.1" />
<line x1="269.50" y1="529.70" x2="269.50" y2="535.30" stroke="#dedede" stroke-width="1.1" />
<line x1="277.50" y1="453.50" x2="277.50" y2="456.10" stroke="#dedede" stroke-width="1.1" />
<line x1="277.50" y1="609.90" x2="277.50" y2="612.50" stroke="#dedede" stroke-width="1.1" />
<line x1="277.50" y1="529.70" x2="277.50" y2="535.30" stroke="#dedede" stroke-width="1.1" />
<line x1="285.50" y1="453.50" x2="285.50" y2="456.10" stroke="#dedede" stroke-width="1.1" />
<line x1="285.50" y1="609.90" x2="285.50" y2="612.50" stroke="#dedede" stroke-width="1.1" />
<line x1="285.50" y1="529.70" x2="285.50" y2="535.30" stroke="#dedede" stroke-width="1.1" />
<line x1="293.50" y1="453.50" x2="293.50" y2="456.10" stroke="#dedede" stroke-width="1.1" />
<line x1="293.50" y1="609.90" x2="293.50" y2="612.50" stroke="#dedede" stroke-width="1.1" />
<line x1="293.50" y1="529.70" x2="293.50" y2="535.30" stroke="#dedede" stroke-width="1.1" />
<line x1="301.50" y1="453.50" x2="301.50" y2="456.10" stroke="#dedede" stroke-width="1.1" />
<line x1="301.50" y1="609.90" x2="301.50" y2="612.50" stroke="#dedede" stroke-width="1.1" />
<line x1="301.50" y1="529.70" x2="301.50" y2="535.30" stroke="#dedede" stroke-width="1.1" />
<line x1="309.50" y1="453.50" x2="309.50" y2="456.10" stroke="#dedede" stroke-width="1.1" />
<line x1="309.50" y1="609.90" x2="309.50" y2="612.50" stroke="#dedede" stroke-width="1.1" />
<line x1="309.50" y1="529.70" x2="309.50" y2="535.30" stroke="#dedede" stroke-width="1.1" />
<line x1="317.50" y1="453.50" x2="317.50" y2="456.10" stroke="#dedede" stroke-width="1.1" />
<line x1="317.50" y1="609.90" x2="317.50" y2="612.50" stroke="#dedede" stroke-width="1.1" />
<line x1="317.50" y1="529.70" x2="317.50" y2="535.30" stroke="#dedede" stroke-width="1.1" />
<line x1="325.50" y1="453.50" x2="325.50" y2="456.10" stroke="#dedede" stroke-width="1.1" />
<line x1="325.50" y1="609.90" x2="325.50" y2="612.50" stroke="#dedede" stroke-width="1.1" />
<line x1="325.50" y1="529.70" x2="325.50" y2="535.30" stroke="#dedede" stroke-width="1.1" />
<line x1="333.50" y1="453.50" x2="333.50" y2="456.10" stroke="#dedede" stroke-width="1.1" />
<line x1="333.50" y1="609.90" x2="333.50" y2="612.50" stroke="#dedede" stroke-width="1.1" />
<line x1="333.50" y1="529.70" x2="333.50" y2="535.30" stroke="#dedede" stroke-width="1.1" />
<line x1="341.50" y1="453.50" x2="341.50" y2="456.10" stroke="#dedede" stroke-width="1.1" />
<line x1="341.50" y1="609.90" x2="341.50" y2="612.50" stroke="#dedede" stroke-width="1.1" />
<line x1="341.50" y1="529.70" x2="341.50" y2="535.30" stroke="#dedede" stroke-width="1.1" />
<line x1="349.50" y1="453.50" x2="349.50" y2="456.10" stroke="#dedede" stroke-width="1.1" />
<line x1="349.50" y1="609.90" x2="349.50" y2="612.50" stroke="#dedede" stroke-width="1.1" />
<line x1="349.50" y1="529.70" x2="349.50" y2="535.30" stroke="#dedede" stroke-width="1.1" />
<line x1="357.50" y1="453.50" x2="357.50" y2="456.10" stroke="#dedede" stroke-width="1.1" />
<line x1="357.50" y1="609.90" x2="357.50" y2="612.50" stroke="#dedede" stroke-width="1.1" />
<line x1="357.50" y1="529.70" x2="357.50" y2="535.30" stroke="#dedede" stroke-width="1.1" />
<line x1="365.50" y1="453.50" x2="365.50" y2="456.10" stroke="#dedede" stroke-width="1.1" />
<line x1="365.50" y1="609.90" x2="365.50" y2="612.50" stroke="#dedede" stroke-width="1.1" />
<line x1="365.50" y1="529.70" x2="365.50" y2="535.30" stroke="#dedede" stroke-width="1.1" />
<line x1="373.50" y1="453.50" x2="373.50" y2="456.10" stroke="#dedede" stroke-width="1.1" />
<line x1="373.50" y1="609.90" x2="373.50" y2="612.50" stroke="#dedede" stroke-width="1.1" />
<line x1="373.50" y1="529.70" x2="373.50" y2="535.30" stroke="#dedede" stroke-width="1.1" />
<line x1="381.50" y1="453.50" x2="381.50" y2="456.10" stroke="#dedede" stroke-width="1.1" />
<line x1="381.50" y1="609.90" x2="381.50" y2="612.50" stroke="#dedede" stroke-width="1.1" />
<line x1="381.50" y1="529.70" x2="381.50" y2="535.30" stroke="#dedede" stroke-width="1.1" />
<line x1="389.50" y1="453.50" x2="389.50" y2="456.10" stroke="#dedede" stroke-width="1.1" />
<line x1="389.50" y1="609.90" x2="389.50" y2="612.50" stroke="#dedede" stroke-width="1.1" />
<line x1="389.50" y1="529.70" x2="389.50" y2="535.30" stroke="#dedede" stroke-width="1.1" />
<line x1="397.50" y1="453.50" x2="397.50" y2="456.10" stroke="#dedede" stroke-width="1.1" />
<line x1="397.50" y1="609.90" x2="397.50" y2="612.50" stroke="#dedede" stroke-width="1.1" />
<line x1="397.50" y1="529.70" x2="397.50" y2="535.30" stroke="#dedede" stroke-width="1.1" />
<line x1="405.50" y1="453.50" x2="405.50" y2="456.10" stroke="#dedede" stroke-width="1.1" />
<line x1="405.50" y1="609.90" x2="405.50" y2="612.50" stroke="#dedede" stroke-width="1.1" />
<line x1="405.50" y1="529.70" x2="405.50" y2="535.30" stroke="#dedede" stroke-width="1.1" />
<line x1="413.50" y1="453.50" x2="413.50" y2="456.10" stroke="#dedede" stroke-width="1.1" />
<line x1="413.50" y1="609.90" x2="413.50" y2="612.50" stroke="#dedede" stroke-width="1.1" />
<line x1="413.50" y1="529.70" x2="413.50" y2="535.30" stroke="#dedede" stroke-width="1.1" />
<line x1="421.50" y1="453.50" x2="421.50" y2="456.10" stroke="#dedede" stroke-width="1.1" />
<line x1="421.50" y1="609.90" x2="421.50" y2="612.50" stroke="#dedede" stroke-width="1.1" />
<line x1="421.50" y1="529.70" x2="421.50" y2="535.30" stroke="#dedede" stroke-width="1.1" />
<line x1="429.50" y1="453.50" x2="429.50" y2="456.10" stroke="#dedede" stroke-width="1.1" />
<line x1="429.50" y1="609.90" x2="429.50" y2="612.50" stroke="#dedede" stroke-width="1.1" />
<line x1="429.50" y1="529.70" x2="429.50" y2="535.30" stroke="#dedede" stroke-width="1.1" />
<line x1="437.50" y1="453.50" x2="437.50" y2="456.10" stroke="#dedede" stroke-width="1.1" />
<line x1="437.50" y1="609.90" x2="437.50" y2="612.50" stroke="#dedede" stroke-width="1.1" />
<line x1="437.50" y1="529.70" x2="437.50" y2="535.30" stroke="#dedede" stroke-width="1.1" />
<line x1="445.50" y1="453.50" x2="445.50" y2="456.10" stroke="#dedede" stroke-width="1.1" />
<line x1="445.50" y1="609.90" x2="445.50" y2="612.50" stroke="#dedede" stroke-width="1.1" />
<line x1="445.50" y1="529.70" x2="445.50" y2="535.30" stroke="#dedede" stroke-width="1.1" />
<line x1="453.50" y1="453.50" x2="453.50" y2="456.10" stroke="#dedede" stroke-width="1.1" />
<line x1="453.50" y1="609.90" x2="453.50" y2="612.50" stroke="#dedede" stroke-width="1.1" />
<line x1="453.50" y1="529.70" x2="453.50" y2="535.30" stroke="#dedede" stroke-width="1.1" />
<line x1="461.50" y1="453.50" x2="461.50" y2="456.10" stroke="#dedede" stroke-width="1.1" />
<line x1="461.50" y1="609.90" x2="461.50" y2="612.50" stroke="#dedede" stroke-width="1.1" />
<line x1="461.50" y1="529.70" x2="461.50" y2="535.30" stroke="#dedede" stroke-width="1.1" />
<line x1="469.50" y1="453.50" x2="469.50" y2="456.10" stroke="#dedede" stroke-width="1.1" />
<line x1="469.50" y1="609.90" x2="469.50" y2="612.50" stroke="#dedede" stroke-width="1.1" />
<line x1="469.50" y1="529.70" x2="469.50" y2="535.30" stroke="#dedede" stroke-width="1.1" />
<line x1="477.50" y1="453.50" x2="477.50" y2="456.10" stroke="#dedede" stroke-width="1.1" />
<line x1="477.50" y1="609.90" x2="477.50" y2="612.50" stroke="#dedede" stroke-width="1.1" />
<line x1="477.50" y1="529.70" x2="477.50" y2="535.30" stroke="#dedede" stroke-width="1.1" />
<line x1="485.50" y1="453.50" x2="485.50" y2="456.10" stroke="#dedede" stroke-width="1.1" />
<line x1="485.50" y1="609.90" x2="485.50" y2="612.50" stroke="#dedede" stroke-width="1.1" />
<line x1="485.50" y1="529.70" x2="485.50" y2="535.30" stroke="#dedede" stroke-width="1.1" />
<line x1="493.50" y1="453.50" x2="493.50" y2="456.10" stroke="#dedede" stroke-width="1.1" />
<line x1="493.50" y1="609.90" x2="493.50" y2="612.50" stroke="#dedede" stroke-width="1.1" />
<line x1="493.50" y1="529.70" x2="493.50" y2="535.30" stroke="#dedede" stroke-width="1.1" />
<line x1="501.50" y1="453.50" x2="501.50" y2="456.10" stroke="#dedede" stroke-width="1.1" />
<line x1="501.50" y1="609.90" x2="501.50" y2="612.50" stroke="#dedede" stroke-width="1.1" />
<line x1="501.50" y1="529.70" x2="501.50" y2="535.30" stroke="#dedede" stroke-width="1.1" />
<line x1="509.50" y1="453.50" x2="509.50" y2="456.10" stroke="#dedede" stroke-width="1.1" />
<line x1="509.50" y1="609.90" x2="509.50" y2="612.50" stroke="#dedede" stroke-width="1.1" />
<line x1="509.50" y1="529.70" x2="509.50" y2="535.30" stroke="#dedede" stroke-width="1.1" />
<line x1="517.50" y1="453.50" x2="517.50" y2="456.10" stroke="#dedede" stroke-width="1.1" />
<line x1="517.50" y1="609.90" x2="517.50" y2="612.50" stroke="#dedede" stroke-width="1.1" />
<line x1="517.50" y1="529.70" x2="517.50" y2="535.30" stroke="#dedede" stroke-width="1.1" />
<line x1="525.50" y1="453.50" x2="525.50" y2="456.10" stroke="#dedede" stroke-width="1.1" />
<line x1="525.50" y1="609.90" x2="525.50" y2="612.50" stroke="#dedede" stroke-width="1.1" />
<line x1="525.50" y1="529.70" x2="525.50" y2="535.30" stroke="#dedede" stroke-width="1.1" />
<line x1="533.50" y1="453.50" x2="533.50" y2="456.10" stroke="#dedede" stroke-width="1.1" />
<line x1="533.50" y1="609.90" x2="533.50" y2="612.50" stroke="#dedede" stroke-width="1.1" />
<line x1="533.50" y1="529.70" x2="533.50" y2="535.30" stroke="#dedede" stroke-width="1.1" />
<line x1="541.50" y1="453.50" x2="541.50" y2="456.10" stroke="#dedede" stroke-width="1.1" />
<line x1="541.50" y1="609.90" x2="541.50" y2="612.50" stroke="#dedede" stroke-width="1.1" />
<line x1="541.50" y1="529.70" x2="541.50" y2="535.30" stroke="#dedede" stroke-width="1.1" />
<line x1="549.50" y1="453.50" x2="549.50" y2="456.10" stroke="#dedede" stroke-width="1.1" />
<line x1="549.50" y1="609.90" x2="549.50" y2="612.50" stroke="#dedede" stroke-width="1.1" />
<line x1="549.50" y1="529.70" x2="549.50" y2="535.30" stroke="#dedede" stroke-width="1.1" />
<line x1="557.50" y1="453.50" x2="557.50" y2="456.10" stroke="#dedede" stroke-width="1.1" />
<line x1="557.50" y1="609.90" x2="557.50" y2="612.50" stroke="#dedede" stroke-width="1.1" />
<line x1="557.50" y1="529.70" x2="557.50" y2="535.30" stroke="#dedede" stroke-width="1.1" />
<line x1="565.50" y1="453.50" x2="565.50" y2="456.10" stroke="#dedede" stroke-width="1.1" />
<line x1="565.50" y1="609.90" x2="565.50" y2="612.50" stroke="#dedede" stroke-width="1.1" />
<line x1="565.50" y1="529.70" x2="565.50" y2="535.30" stroke="#dedede" stroke-width="1.1" />
<line x1="573.50" y1="453.50" x2="573.50" y2="456.10" stroke="#dedede" stroke-width="1.1" />
<line x1="573.50" y1="609.90" x2="573.50" y2="612.50" stroke="#dedede" stroke-width="1.1" />
<line x1="573.50" y1="529.70" x2="573.50" y2="535.30" stroke="#dedede" stroke-width="1.1" />
<line x1="581.50" y1="453.50" x2="581.50" y2="456.10" stroke="#dedede" stroke-width="1.1" />
<line x1="581.50" y1="609.90" x2="581.50" y2="612.50" stroke="#dedede" stroke-width="1.1" />
<line x1="581.50" y1="529.70" x2="581.50" y2="535.30" stroke="#dedede" stroke-width="1.1" />
<line x1="589.50" y1="453.50" x2="589.50" y2="456.10" stroke="#dedede" stroke-width="1.1" />
<line x1="589.50" y1="609.90" x2="589.50" y2="612.50" stroke="#dedede" stroke-width="1.1" />
<line x1="589.50" y1="529.70" x2="589.50" y2="535.30" stroke="#dedede" stroke-width="1.1" />
<line x1="597.50" y1="453.50" x2="597.50" y2="456.10" stroke="#dedede" stroke-width="1.1" />
<line x1="597.50" y1="609.90" x2="597.50" y2="612.50" stroke="#dedede" stroke-width="1.1" />
<line x1="597.50" y1="529.70" x2="597.50" y2="535.30" stroke="#dedede" stroke-width="1.1" />
<line x1="605.50" y1="453.50" x2="605.50" y2="456.10" stroke="#dedede" stroke-width="1.1" />
<line x1="605.50" y1="609.90" x2="605.50" y2="612.50" stroke="#dedede" stroke-width="1.1" />
<line x1="605.50" y1="529.70" x2="605.50" y2="535.30" stroke="#dedede" stroke-width="1.1" />
<line x1="613.50" y1="453.50" x2="613.50" y2="456.10" stroke="#dedede" stroke-width="1.1" />
<line x1="613.50" y1="609.90" x2="613.50" y2="612.50" stroke="#dedede" stroke-width="1.1" />
<line x1="613.50" y1="529.70" x2="613.50" y2="535.30" stroke="#dedede" stroke-width="1.1" />
<line x1="621.50" y1="453.50" x2="621.50" y2="456.10" stroke="#dedede" stroke-width="1.1" />
<line x1="621.50" y1="609.90" x2="621.50" y2="612.50" stroke="#dedede" stroke-width="1.1" />
<line x1="621.50" y1="529.70" x2="621.50" y2="535.30" stroke="#dedede" stroke-width="1.1" />
<line x1="629.50" y1="453.50" x2="629.50" y2="456.10" stroke="#dedede" stroke-width="1.1" />
<line x1="629.50" y1="609.90" x2="629.50" y2="612.50" stroke="#dedede" stroke-width="1.1" />
<line x1="629.50" y1="529.70" x2="629.50" y2="535.30" stroke="#dedede" stroke-width="1.1" />
<line x1="637.50" y1="453.50" x2="637.50" y2="456.10" stroke="#dedede" stroke-width="1.1" />
<line x1="637.50" y1="609.90" x2="637.50" y2="612.50" stroke="#dedede" stroke-width="1.1" />
<line x1="637.50" y1="529.70" x2="637.50" y2="535.30" stroke="#dedede" stroke-width="1.1" />
<line x1="645.50" y1="453.50" x2="645.50" y2="456.10" stroke="#dedede" stroke-width="1.1" />
<line x1="645.50" y1="609.90" x2="645.50" y2="612.50" stroke="#dedede" stroke-width="1.1" />
<line x1="645.50" y1="529.70" x2="645.50" y2="535.30" stroke="#dedede" stroke-width="1.1" />
<line x1="653.50" y1="453.50" x2="653.50" y2="456.10" stroke="#dedede" stroke-width="1.1" />
<line x1="653.50" y1="609.90" x2="653.50" y2="612.50" stroke="#dedede" stroke-width="1.1" />
<line x1="653.50" y1="529.70" x2="653.50" y2="535.30" stroke="#dedede" stroke-width="1.1" />
<line x1="661.50" y1="453.50" x2="661.50" y2="456.10" stroke="#dedede" stroke-width="1.1" />
<line x1="661.50" y1="609.90" x2="661.50" y2="612.50" stroke="#dedede" stroke-width="1.1" />
<line x1="661.50" y1="529.70" x2="661.50" y2="535.30" stroke="#dedede" stroke-width="1.1" />
<line x1="669.50" y1="453.50" x2="669.50" y2="456.10" stroke="#dedede" stroke-width="1.1" />
<line x1="669.50" y1="609.90" x2="669.50" y2="612.50" stroke="#dedede" stroke-width="1.1" />
<line x1="669.50" y1="529.70" x2="669.50" y2="535.30" stroke="#dedede" stroke-width="1.1" />
<line x1="677.50" y1="453.50" x2="677.50" y2="456.10" stroke="#dedede" stroke-width="1.1" />
<line x1="677.50" y1="609.90" x2="677.50" y2="612.50" stroke="#dedede" stroke-width="1.1" />
<line x1="677.50" y1="529.70" x2="677.50" y2="535.30" stroke="#dedede" stroke-width="1.1" />
<line x1="66.50" y1="452.50" x2="69.10" y2="452.50" stroke="#dedede" stroke-width="1.1" />
<line x1="678.90" y1="452.50" x2="681.50" y2="452.50" stroke="#dedede" stroke-width="1.1" />
<line x1="370.70" y1="452.50" x2="376.30" y2="452.50" stroke="#dedede" stroke-width="1.1" />
<line x1="66.50" y1="456.50" x2="69.10" y2="456.50" stroke="#dedede" stroke-width="1.1" />
<line x1="678.90" y1="456.50" x2="681.50" y2="456.50" stroke="#dedede" stroke-width="1.1" />
<line x1="370.70" y1="456.50" x2="376.30" y2="456.50" stroke="#dedede" stroke-width="1.1" />
<line x1="66.50" y1="460.50" x2="69.10" y2="460.50" stroke="#dedede" stroke-width="1.1" />
<line x1="678.90" y1="460.50" x2="681.50" y2="460.50" stroke="#dedede" stroke-width="1.1" />
<line x1="370.70" y1="460.50" x2="376.30" y2="460.50" stroke="#dedede" stroke-width="1.1" />
<line x1="66.50" y1="464.50" x2="69.10" y2="464.50" stroke="#dedede" stroke-width="1.1" />
<line x1="678.90" y1="464.50" x2="681.50" y2="464.50" stroke="#dedede" stroke-width="1.1" />
<line x1="370.70" y1="464.50" x2="376.30" y2="464.50" stroke="#dedede" stroke-width="1.1" />
<line x1="66.50" y1="468.50" x2="69.10" y2="468.50" stroke="#dedede" stroke-width="1.1" />
<line x1="678.90" y1="468.50" x2="681.50" y2="468.50" stroke="#dedede" stroke-width="1.1" />
<line x1="370.70" y1="468.50" x2="376.30" y2="468.50" stroke="#dedede" stroke-width="1.1" />
<line x1="66.50" y1="472.50" x2="69.10" y2="472.50" stroke="#dedede" stroke-width="1.1" />
<line x1="678.90" y1="472.50" x2="681.50" y2="472.50" stroke="#dedede" stroke-width="1.1" />
<line x1="370.70" y1="472.50" x2="376.30" y2="472.50" stroke="#dedede" stroke-width="1.1" />
<line x1="66.50" y1="476.50" x2="69.10" y2="476.50" stroke="#dedede" stroke-width="1.1" />
<line x1="678.90" y1="476.50" x2="681.50" y2="476.50" stroke="#dedede" stroke-width="1.1" />
<line x1="370.70" y1="476.50" x2="376.30" y2="476.50" stroke="#dedede" stroke-width="1.1" />
<line x1="66.50" y1="480.50" x2="69.10" y2="480.50" stroke="#dedede" stroke-width="1.1" />
<line x1="678.90" y1="480.50" x2="681.50" y2="480.50" stroke="#dedede" stroke-width="1.1" />
<line x1="370.70" y1="480.50" x2="376.30" y2="480.50" stroke="#dedede" stroke-width="1.1" />
<line x1="66.50" y1="484.50" x2="69.10" y2="484.50" stroke="#dedede" stroke-width="1.1" />
<line x1="678.90" y1="484.50" x2="681.50" y2="484.50" stroke="#dedede" stroke-width="1.1" />
<line x1="370.70" y1="484.50" x2="376.30" y2="484.50" stroke="#dedede" stroke-width="1.1" />
<line x1="66.50" y1="488.50" x2="69.10" y2="488.50" stroke="#dedede" stroke-width="1.1" />
<line x1="678.90" y1="488.50" x2="681.50" y2="488.50" stroke="#dedede" stroke-width="1.1" />
<line x1="370.70" y1="488.50" x2="376.30" y2="488.50" stroke="#dedede" stroke-width="1.1" />
<line x1="66.50" y1="492.50" x2="69.10" y2="492.50" stroke="#dedede" stroke-width="1.1" />
<line x1="678.90" y1="492.50" x2="681.50" y2="492.50" stroke="#dedede" stroke-width="1.1" />
<line x1="370.70" y1="492.50" x2="376.30" y2="492.50" stroke="#dedede" stroke-width="1.1" />
<line x1="66.50" y1="496.50" x2="69.10" y2="496.50" stroke="#dedede" stroke-width="1.1" />
<line x1="678.90" y1="496.50" x2="681.50" y2="496.50" stroke="#dedede" stroke-width="1.1" />
<line x1="370.70" y1="496.50" x2="376.30" y2="496.50" stroke="#dedede" stroke-width="1.1" />
<line x1="66.50" y1="500.50" x2="69.10" y2="500.50" stroke="#dedede" stroke-width="1.1" />
<line x1="678.90" y1="500.50" x2="681.50" y2="500.50" stroke="#dedede" stroke-width="1.1" />
<line x1="370.70" y1="500.50" x2="376.30" y2="500.50" stroke="#dedede" stroke-width="1.1" />
<line x1="66.50" y1="504.50" x2="69.10" y2="504.50" stroke="#dedede" stroke-width="1.1" />
<line x1="678.90" y1="504.50" x2="681.50" y2="504.50" stroke="#dedede" stroke-width="1.1" />
<line x1="370.70" y1="504.50" x2="376.30" y2="504.50" stroke="#dedede" stroke-width="1.1" />
<line x1="66.50" y1="508.50" x2="69.10" y2="508.50" stroke="#dedede" stroke-width="1.1" />
<line x1="678.90" y1="508.50" x2="681.50" y2="508.50" stroke="#dedede" stroke-width="1.1" />
<line x1="370.70" y1="508.50" x2="376.30" y2="508.50" stroke="#dedede" stroke-width="1.1" />
<line x1="66.50" y1="512.50" x2="69.10" y2="512.50" stroke="#dedede" stroke-width="1.1" />
<line x1="678.90" y1="512.50" x2="681.50" y2="512.50" stroke="#dedede" stroke-width="1.1" />
<line x1="370.70" y1="512.50" x2="376.30" y2="512.50" stroke="#dedede" stroke-width="1.1" />
<line x1="66.50" y1="516.50" x2="69.10" y2="516.50" stroke="#dedede" stroke-width="1.1" />
<line x1="678.90" y1="516.50" x2="681.50" y2="516.50" stroke="#dedede" stroke-width="1.1" />
<line x1="370.70" y1="516.50" x2="376.30" y2="516.50" stroke="#dedede" stroke-width="1.1" />
<line x1="66.50" y1="520.50" x2="69.10" y2="520.50" stroke="#dedede" stroke-width="1.1" />
<line x1="678.90" y1="520.50" x2="681.50" y2="520.50" stroke="#dedede" stroke-width="1.1" />
<line x1="370.70" y1="520.50" x2="376.30" y2="520.50" stroke="#dedede" stroke-width="1.1" />
<line x1="66.50" y1="524.50" x2="69.10" y2="524.50" stroke="#dedede" stroke-width="1.1" />
<line x1="678.90" y1="524.50" x2="681.50" y2="524.50" stroke="#dedede" stroke-width="1.1" />
<line x1="370.70" y1="524.50" x2="376.30" y2="524.50" stroke="#dedede" stroke-width="1.1" />
<line x1="66.50" y1="528.50" x2="69.10" y2="528.50" stroke="#dedede" stroke-width="1.1" />
<line x1="678.90" y1="528.50" x2="681.50" y2="528.50" stroke="#dedede" stroke-width="1.1" />
<line x1="370.70" y1="528.50" x2="376.30" y2="528.50" stroke="#dedede" stroke-width="1.1" />
<line x1="66.50" y1="532.50" x2="69.10" y2="532.50" stroke="#dedede" stroke-width="1.1" />
<line x1="678.90" y1="532.50" x2="681.50" y2="532.50" stroke="#dedede" stroke-width="1.1" />
<line x1="370.70" y1="532.50" x2="376.30" y2="532.50" stroke="#dedede" stroke-width="1.1" />
<line x1="66.50" y1="536.50" x2="69.10" y2="536.50" stroke="#dedede" stroke-width="1.1" />
<line x1="678.90" y1="536.50" x2="681.50" y2="536.50" stroke="#dedede" stroke-width="1.1" />
<line x1="370.70" y1="536.50" x2="376.30" y2="536.50" stroke="#dedede" stroke-width="1.1" />
<line x1="66.50" y1="540.50" x2="69.10" y2="540.50" stroke="#dedede" stroke-width="1.1" />
<line x1="678.90" y1="540.50" x2="681.50" y2="540.50" stroke="#dedede" stroke-width="1.1" />
<line x1="370.70" y1="540.50" x2="376.30" y2="540.50" stroke="#dedede" stroke-width="1.1" />
<line x1="66.50" y1="544.50" x2="69.10" y2="544.50" stroke="#dedede" stroke-width="1.1" />
<line x1="678.90" y1="544.50" x2="681.50" y2="544.50" stroke="#dedede" stroke-width="1.1" />
<line x1="370.70" y1="544.50" x2="376.30" y2="544.50" stroke="#dedede" stroke-width="1.1" />
<line x1="66.50" y1="548.50" x2="69.10" y2="548.50" stroke="#dedede" stroke-width="1.1" />
<line x1="678.90" y1="548.50" x2="681.50" y2="548.50" stroke="#dedede" stroke-width="1.1" />
<line x1="370.70" y1="548.50" x2="376.30" y2="548.50" stroke="#dedede" stroke-width="1.1" />
<line x1="66.50" y1="552.50" x2="69.10" y2="552.50" stroke="#dedede" stroke-width="1.1" />
<line x1="678.90" y1="552.50" x2="681.50" y2="552.50" stroke="#dedede" stroke-width="1.1" />
<line x1="370.70" y1="552.50" x2="376.30" y2="552.50" stroke="#dedede" stroke-width="1.1" />
<line x1="66.50" y1="556.50" x2="69.10" y2="556.50" stroke="#dedede" stroke-width="1.1" />
<line x1="678.90" y1="556.50" x2="681.50" y2="556.50" stroke="#dedede" stroke-width="1.1" />
<line x1="370.70" y1="556.50" x2="376.30" y2="556.50" stroke="#dedede" stroke-width="1.1" />
<line x1="66.50" y1="560.50" x2="69.10" y2="560.50" stroke="#dedede" stroke-width="1.1" />
<line x1="678.90" y1="560.50" x2="681.50" y2="560.50" stroke="#dedede" stroke-width="1.1" />
<line x1="370.70" y1="560.50" x2="376.30" y2="560.50" stroke="#dedede" stroke-width="1.1" />
<line x1="66.50" y1="564.50" x2="69.10" y2="564.50" stroke="#dedede" stroke-width="1.1" />
<line x1="678.90" y1="564.50" x2="681.50" y2="564.50" stroke="#dedede" stroke-width="1.1" />
<line x1="370.70" y1="564.50" x2="376.30" y2="564.50" stroke="#dedede" stroke-width="1.1" />
<line x1="66.50" y1="568.50" x2="69.10" y2="568.50" stroke="#dedede" stroke-width="1.1" />
<line x1="678.90" y1="568.50" x2="681.50" y2="568.50" stroke="#dedede" stroke-width="1.1" />
<line x1="370.70" y1="568.50" x2="376.30" y2="568.50" stroke="#dedede" stroke-width="1.1" />
<line x1="66.50" y1="572.50" x2="69.10" y2="572.50" stroke="#dedede" stroke-width="1.1" />
<line x1="678.90" y1="572.50" x2="681.50" y2="572.50" stroke="#dedede" stroke-width="1.1" />
<line x1="370.70" y1="572.50" x2="376.30" y2="572.50" stroke="#dedede" stroke-width="1.1" />
<line x1="66.50" y1="576.50" x2="69.10" y2="576.50" stroke="#dedede" stroke-width="1.1" />
<line x1="678.90" y1="576.50" x2="681.50" y2="576.50" stroke="#dedede" stroke-width="1.1" />
<line x1="370.70" y1="576.50" x2="376.30" y2="576.50" stroke="#dedede" stroke-width="1.1" />
<line x1="66.50" y1="580.50" x2="69.10" y2="580.50" stroke="#dedede" stroke-width="1.1" />
<line x1="678.90" y1="580.50" x2="681.50" y2="580.50" stroke="#dedede" stroke-width="1.1" />
<line x1="370.70" y1="580.50" x2="376.30" y2="580.50" stroke="#dedede" stroke-width="1.1" />
<line x1="66.50" y1="584.50" x2="69.10" y2="584.50" stroke="#dedede" stroke-width="1.1" />
<line x1="678.90" y1="584.50" x2="681.50" y2="584.50" stroke="#dedede" stroke-width="1.1" />
<line x1="370.70" y1="584.50" x2="376.30" y2="584.50" stroke="#dedede" stroke-width="1.1" />
<line x1="66.50" y1="588.50" x2="69.10" y2="588.50" stroke="#dedede" stroke-width="1.1" />
<line x1="678.90" y1="588.50" x2="681.50" y2="588.50" stroke="#dedede" stroke-width="1.1" />
<line x1="370.70" y1="588.50" x2="376.30" y2="588.50" stroke="#dedede" stroke-width="1.1" />
<line x1="66.50" y1="592.50" x2="69.10" y2="592.50" stroke="#dedede" stroke-width="1.1" />
<line x1="678.90" y1="592.50" x2="681.50" y2="592.50" stroke="#dedede" stroke-width="1.1" />
<line x1="370.70" y1="592.50" x2="376.30" y2="592.50" stroke="#dedede" stroke-width="1.1" />
<line x1="66.50" y1="596.50" x2="69.10" y2="596.50" stroke="#dedede" stroke-width="1.1" />
<line x1="678.90" y1="596.50" x2="681.50" y2="596.50" stroke="#dedede" stroke-width="1.1" />
<line x1="370.70" y1="596.50" x2="376.30" y2="596.50" stroke="#dedede" stroke-width="1.1" />
<line x1="66.50" y1="600.50" x2="69.10" y2="600.50" stroke="#dedede" stroke-width="1.1" />
<line x1="678.90" y1="600.50" x2="681.50" y2="600.50" stroke="#dedede" stroke-width="1.1" />
<line x1="370.70" y1="600.50" x2="376.30" y2="600.50" stroke="#dedede" stroke-width="1.1" />
<line x1="66.50" y1="604.50" x2="69.10" y2="604.50" stroke="#dedede" stroke-width="1.1" />
<line x1="678.90" y1="604.50" x2="681.50" y2="604.50" stroke="#dedede" stroke-width="1.1" />
<line x1="370.70" y1="604.50" x2="376.30" y2="604.50" stroke="#dedede" stroke-width="1.1" />
<line x1="66.50" y1="608.50" x2="69.10" y2="608.50" stroke="#dedede" stroke-width="1.1" />
<line x1="678.90" y1="608.50" x2="681.50" y2="608.50" stroke="#dedede" stroke-width="1.1" />
<line x1="370.70" y1="608.50" x2="376.30" y2="608.50" stroke="#dedede" stroke-width="1.1" />
<line x1="66.50" y1="532.50" x2="681.50" y2="532.50" stroke="#dedede" stroke-width="1.3" />
<line x1="373.50" y1="453.50" x2="373.50" y2="612.50" stroke="#dedede" stroke-width="1.3" />
<polyline fill="none" stroke="#e0d878" stroke-width="1.3" points="67.5,489.9 68.5,488.4 69.5,487.1 70.5,486.1 71.5,485.4 72.5,484.9 73.5,484.8 74.5,484.9 75.5,485.4 76.5,486.1 77.5,487.1 78.5,488.4 79.5,489.9 80.5,491.8 81.5,493.8 82.5,496.1 83.5,498.6 84.5,501.3 85.5,504.3 86.5,507.3 87.5,510.6 88.5,513.9 89.5,517.4 90.5,521.0 91.5,524.6 92.5,528.3 93.5,532.0 94.5,535.7 95.5,539.4 96.5,543.0 97.5,546.6 98.5,550.1 99.5,553.4 100.5,556.7 101.5,559.7 102.5,562.7 103.5,565.4 104.5,567.9 105.5,570.2 106.5,572.2 107.5,574.1 108.5,575.6 109.5,576.9 110.5,577.9 111.5,578.6 112.5,579.1 113.5,579.2 114.5,579.1 115.5,578.6 116.5,577.9 117.5,576.9 118.5,575.6 119.5,574.1 120.5,572.2 121.5,570.2 122.5,567.9 123.5,565.4 124.5,562.7 125.5,559.7 126.5,556.7 127.5,553.4 128.5,550.1 129.5,546.6 130.5,543.0 131.5,539.4 132.5,535.7 133.5,532.0 134.5,528.3 135.5,524.6 136.5,521.0 137.5,517.4 138.5,513.9 139.5,510.6 140.5,507.3 141.5,504.3 142.5,501.3 143.5,498.6 144.5,496.1 145.5,493.8 146.5,491.8 147.5,489.9 148.5,488.4 149.5,487.1 150.5,486.1 151.5,485.4 152.5,484.9 153.5,484.8 154.5,484.9 155.5,485.4 156.5,486.1 157.5,487.1 158.5,488.4 159.5,489.9 160.5,491.8 161.5,493.8 162.5,496.1 163.5,498.6 164.5,501.3 165.5,504.3 166.5,507.3 167.5,510.6 168.5,513.9 169.5,517.4 170.5,521.0 171.5,524.6 172.5,528.3 173.5,532.0 174.5,535.7 175.5,539.4 176.5,543.0 177.5,546.6 178.5,550.1 179.5,553.4 180.5,556.7 181.5,559.7 182.5,562.7 183.5,565.4 184.5,567.9 185.5,570.2 186.5,572.2 187.5,574.1 188.5,575.6 189.5,576.9 190.5,577.9 191.5,578.6 192.5,579.1 193.5,579.2 194.5,579.1 195.5,578.6 196.5,577.9 197.5,576.9 198.5,575.6 199.5,574.1 200.5,572.2 201.5,570.2 202.5,567.9 203.5,565.4 204.5,562.7 205.5,559.7 206.5,556.7 207.5,553.4 208.5,550.1 209.5,546.6 210.5,543.0 211.5,539.4 212.5,535.7 213.5,532.0 214.5,528.3 215.5,524.6 216.5,521.0 217.5,517.4 218.5,513.9 219.5,510.6 220.5,507.3 221.5,504.3 222.5,501.3 223.5,498.6 224.5,496.1 225.5,493.8 226.5,491.8 227.5,489.9 228.5,488.4 229.5,487.1 230.5,486.1 231.5,485.4 232.5,484.9 233.5,484.8 234.5,484.9 235.5,485.4 236.5,486.1 237.5,487.1 238.5,488.4 239.5,489.9 240.5,491.8 241.5,493.8 242.5,496.1 243.5,498.6 244.5,501.3 245.5,504.3 246.5,507.3 247.5,510.6 248.5,513.9 249.5,517.4 250.5,521.0 251.5,524.6 252.5,528.3 253.5,532.0 254.5,535.7 255.5,539.4 256.5,543.0 257.5,546.6 258.5,550.1 259.5,553.4 260.5,556.7 261.5,559.7 262.5,562.7 263.5,565.4 264.5,567.9 265.5,570.2 266.5,572.2 267.5,574.1 268.5,575.6 269.5,576.9 270.5,577.9 271.5,578.6 272.5,579.1 273.5,579.2 274.5,579.1 275.5,578.6 276.5,577.9 277.5,576.9 278.5,575.6 279.5,574.1 280.5,572.2 281.5,570.2 282.5,567.9 283.5,565.4 284.5,562.7 285.5,559.7 286.5,556.7 287.5,553.4 288.5,550.1 289.5,546.6 290.5,543.0 291.5,539.4 292.5,535.7 293.5,532.0 294.5,528.3 295.5,524.6 296.5,521.0 297.5,517.4 298.5,513.9 299.5,510.6 300.5,507.3 301.5,504.3 302.5,501.3 303.5,498.6 304.5,496.1 305.5,493.8 306.5,491.8 307.5,489.9 308.5,488.4 309.5,487.1 310.5,486.1 311.5,485.4 312.5,484.9 313.5,484.8 314.5,484.9 315.5,485.4 316.5,486.1 317.5,487.1 318.5,488.4 319.5,489.9 320.5,491.8 321.5,493.8 322.5,496.1 323.5,498.6 324.5,501.3 325.5,504.3 326.5,507.3 327.5,510.6 328.5,513.9 329.5,517.4 330.5,521.0 331.5,524.6 332.5,528.3 333.5,532.0 334.5,535.7 335.5,539.4 336.5,543.0 337.5,546.6 338.5,550.1 339.5,553.4 340.5,556.7 341.5,559.7 342.5,562.7 343.5,565.4 344.5,567.9 345.5,570.2 346.5,572.2 347.5,574.1 348.5,575.6 349.5,576.9 350.5,577.9 351.5,578.6 352.5,579.1 353.5,579.2 354.5,579.1 355.5,578.6 356.5,577.9 357.5,576.9 358.5,575.6 359.5,574.1 360.5,572.2 361.5,570.2 362.5,567.9 363.5,565.4 364.5,562.7 365.5,559.7 366.5,556.7 367.5,553.4 368.5,550.1 369.5,546.6 370.5,543.0 371.5,539.4 372.5,535.7 373.5,532.0 374.5,528.3 375.5,524.6 376.5,521.0 377.5,517.4 378.5,513.9 379.5,510.6 380.5,507.3 381.5,504.3 382.5,501.3 383.5,498.6 384.5,496.1 385.5,493.8 386.5,491.8 387.5,489.9 388.5,488.4 389.5,487.1 390.5,486.1 391.5,485.4 392.5,484.9 393.5,484.8 394.5,484.9 395.5,485.4 396.5,486.1 397.5,487.1 398.5,488.4 399.5,489.9 400.5,491.8 401.5,493.8 402.5,496.1 403.5,498.6 404.5,501.3 405.5,504.3 406.5,507.3 407.5,510.6 408.5,513.9 409.5,517.4 410.5,521.0 411.5,524.6 412.5,528.3 413.5,532.0 414.5,535.7 415.5,539.4 416.5,543.0 417.5,546.6 418.5,550.1 419.5,553.4 420.5,556.7 421.5,559.7 422.5,562.7 423.5,565.4 424.5,567.9 425.5,570.2 426.5,572.2 427.5,574.1 428.5,575.6 429.5,576.9 430.5,577.9 431.5,578.6 432.5,579.1 433.5,579.2 434.5,579.1 435.5,578.6 436.5,577.9 437.5,576.9 438.5,575.6 439.5,574.1 440.5,572.2 441.5,570.2 442.5,567.9 443.5,565.4 444.5,562.7 445.5,559.7 446.5,556.7 447.5,553.4 448.5,550.1 449.5,546.6 450.5,543.0 451.5,539.4 452.5,535.7 453.5,532.0 454.5,528.3 455.5,524.6 456.5,521.0 457.5,517.4 458.5,513.9 459.5,510.6 460.5,507.3 461.5,504.3 462.5,501.3 463.5,498.6 464.5,496.1 465.5,493.8 466.5,491.8 467.5,489.9 468.5,488.4 469.5,487.1 470.5,486.1 471.5,485.4 472.5,484.9 473.5,484.8 474.5,484.9 475.5,485.4 476.5,486.1 477.5,487.1 478.5,488.4 479.5,489.9 480.5,491.8 481.5,493.8 482.5,496.1 483.5,498.6 484.5,501.3 485.5,504.3 486.5,507.3 487.5,510.6 488.5,513.9 489.5,517.4 490.5,521.0 491.5,524.6 492.5,528.3 493.5,532.0 494.5,535.7 495.5,539.4 496.5,543.0 497.5,546.6 498.5,550.1 499.5,553.4 500.5,556.7 501.5,559.7 502.5,562.7 503.5,565.4 504.5,567.9 505.5,570.2 506.5,572.2 507.5,574.1 508.5,575.6 509.5,576.9 510.5,577.9 511.5,578.6 512.5,579.1 513.5,579.2 514.5,579.1 515.5,578.6 516.5,577.9 517.5,576.9 518.5,575.6 519.5,574.1 520.5,572.2 521.5,570.2 522.5,567.9 523.5,565.4 524.5,562.7 525.5,559.7 526.5,556.7 527.5,553.4 528.5,550.1 529.5,546.6 530.5,543.0 531.5,539.4 532.5,535.7 533.5,532.0 534.5,528.3 535.5,524.6 536.5,521.0 537.5,517.4 538.5,513.9 539.5,510.6 540.5,507.3 541.5,504.3 542.5,501.3 543.5,498.6 544.5,496.1 545.5,493.8 546.5,491.8 547.5,489.9 548.5,488.4 549.5,487.1 550.5,486.1 551.5,485.4 552.5,484.9 553.5,484.8 554.5,484.9 555.5,485.4 556.5,486.1 557.5,487.1 558.5,488.4 559.5,489.9 560.5,491.8 561.5,493.8 562.5,496.1 563.5,498.6 564.5,501.3 565.5,504.3 566.5,507.3 567.5,510.6 568.5,513.9 569.5,517.4 570.5,521.0 571.5,524.6 572.5,528.3 573.5,532.0 574.5,535.7 575.5,539.4 576.5,543.0 577.5,546.6 578.5,550.1 579.5,553.4 580.5,556.7 581.5,559.7 582.5,562.7 583.5,565.4 584.5,567.9 585.5,570.2 586.5,572.2 587.5,574.1 588.5,575.6 589.5,576.9 590.5,577.9 591.5,578.6 592.5,579.1 593.5,579.2 594.5,579.1 595.5,578.6 596.5,577.9 597.5,576.9 598.5,575.6 599.5,574.1 600.5,572.2 601.5,570.2 602.5,567.9 603.5,565.4 604.5,562.7 605.5,559.7 606.5,556.7 607.5,553.4 608.5,550.1 609.5,546.6 610.5,543.0 611.5,539.4 612.5,535.7 613.5,532.0 614.5,528.3 615.5,524.6 616.5,521.0 617.5,517.4 618.5,513.9 619.5,510.6 620.5,507.3 621.5,504.3 622.5,501.3 623.5,498.6 624.5,496.1 625.5,493.8 626.5,491.8 627.5,489.9 628.5,488.4 629.5,487.1 630.5,486.1 631.5,485.4 632.5,484.9 633.5,484.8 634.5,484.9 635.5,485.4 636.5,486.1 637.5,487.1 638.5,488.4 639.5,489.9 640.5,491.8 641.5,493.8 642.5,496.1 643.5,498.6 644.5,501.3 645.5,504.3 646.5,507.3 647.5,510.6 648.5,513.9 649.5,517.4 650.5,521.0 651.5,524.6 652.5,528.3 653.5,532.0 654.5,535.7 655.5,539.4 656.5,543.0 657.5,546.6 658.5,550.1 659.5,553.4 660.5,556.7 661.5,559.7 662.5,562.7 663.5,565.4 664.5,567.9 665.5,570.2 666.5,572.2 667.5,574.1 668.5,575.6 669.5,576.9 670.5,577.9 671.5,578.6 672.5,579.1 673.5,579.2 674.5,579.1 675.5,578.6 676.5,577.9 677.5,576.9 678.5,575.6 679.5,574.1 680.5,572.2"/>
<polyline fill="none" stroke="#3cc83c" stroke-width="1.3" points="67.5,557.0 68.5,553.6 69.5,550.2 70.5,546.6 71.5,543.0 72.5,539.3 73.5,535.6 74.5,531.8 75.5,528.1 76.5,524.4 77.5,520.8 78.5,517.3 79.5,513.8 80.5,510.5 81.5,507.3 82.5,504.3 83.5,501.5 84.5,498.8 85.5,496.4 86.5,494.2 87.5,492.3 88.5,490.6 89.5,489.1 90.5,488.0 91.5,487.1 92.5,486.5 93.5,486.2 94.5,486.2 95.5,486.5 96.5,487.1 97.5,488.0 98.5,489.1 99.5,490.6 100.5,492.3 101.5,494.2 102.5,496.4 103.5,498.8 104.5,501.5 105.5,504.3 106.5,507.3 107.5,510.5 108.5,513.8 109.5,517.3 110.5,520.8 111.5,524.4 112.5,528.1 113.5,531.8 114.5,535.6 115.5,539.3 116.5,543.0 117.5,546.6 118.5,550.2 119.5,553.6 120.5,557.0 121.5,560.1 122.5,563.2 123.5,566.0 124.5,568.7 125.5,571.1 126.5,573.3 127.5,575.3 128.5,577.0 129.5,578.4 130.5,579.6 131.5,580.5 132.5,581.0 133.5,581.4 134.5,581.4 135.5,581.1 136.5,580.5 137.5,579.7 138.5,578.5 139.5,577.1 140.5,575.4 141.5,573.5 142.5,571.3 143.5,568.9 144.5,566.3 145.5,563.5 146.5,560.4 147.5,557.3 148.5,554.0 149.5,550.5 150.5,547.0 151.5,543.3 152.5,539.7 153.5,535.9 154.5,532.2 155.5,528.5 156.5,524.8 157.5,521.2 158.5,517.6 159.5,514.1 160.5,510.8 161.5,507.6 162.5,504.6 163.5,501.7 164.5,499.1 165.5,496.6 166.5,494.4 167.5,492.4 168.5,490.7 169.5,489.3 170.5,488.1 171.5,487.2 172.5,486.6 173.5,486.3 174.5,486.2 175.5,486.5 176.5,487.0 177.5,487.9 178.5,489.0 179.5,490.4 180.5,492.1 181.5,494.0 182.5,496.2 183.5,498.6 184.5,501.2 185.5,504.0 186.5,507.0 187.5,510.2 188.5,513.5 189.5,516.9 190.5,520.4 191.5,524.1 192.5,527.7 193.5,531.5 194.5,535.2 195.5,538.9 196.5,542.6 197.5,546.3 198.5,549.8 199.5,553.3 200.5,556.6 201.5,559.8 202.5,562.9 203.5,565.7 204.5,568.4 205.5,570.9 206.5,573.1 207.5,575.1 208.5,576.8 209.5,578.3 210.5,579.5 211.5,580.4 212.5,581.0 213.5,581.3 214.5,581.4 215.5,581.1 216.5,580.6 217.5,579.8 218.5,578.7 219.5,577.3 220.5,575.6 221.5,573.7 222.5,571.5 223.5,569.2 224.5,566.6 225.5,563.7 226.5,560.8 227.5,557.6 228.5,554.3 229.5,550.9 230.5,547.3 231.5,543.7 232.5,540.0 233.5,536.3 234.5,532.6 235.5,528.9 236.5,525.2 237.5,521.5 238.5,518.0 239.5,514.5 240.5,511.1 241.5,507.9 242.5,504.9 243.5,502.0 244.5,499.3 245.5,496.9 246.5,494.6 247.5,492.6 248.5,490.9 249.5,489.4 250.5,488.2 251.5,487.3 252.5,486.6 253.5,486.3 254.5,486.2 255.5,486.4 256.5,487.0 257.5,487.8 258.5,488.9 259.5,490.3 260.5,491.9 261.5,493.8 262.5,495.9 263.5,498.3 264.5,500.9 265.5,503.7 266.5,506.7 267.5,509.8 268.5,513.1 269.5,516.6 270.5,520.1 271.5,523.7 272.5,527.4 273.5,531.1 274.5,534.8 275.5,538.6 276.5,542.2 277.5,545.9 278.5,549.5 279.5,552.9 280.5,556.3 281.5,559.5 282.5,562.6 283.5,565.5 284.5,568.1 285.5,570.6 286.5,572.9 287.5,574.9 288.5,576.6 289.5,578.1 290.5,579.4 291.5,580.3 292.5,581.0 293.5,581.3 294.5,581.4 295.5,581.2 296.5,580.7 297.5,579.9 298.5,578.8 299.5,577.4 300.5,575.8 301.5,573.9 302.5,571.8 303.5,569.4 304.5,566.8 305.5,564.0 306.5,561.1 307.5,557.9 308.5,554.6 309.5,551.2 310.5,547.7 311.5,544.1 312.5,540.4 313.5,536.7 314.5,533.0 315.5,529.2 316.5,525.5 317.5,521.9 318.5,518.3 319.5,514.8 320.5,511.5 321.5,508.2 322.5,505.2 323.5,502.3 324.5,499.6 325.5,497.1 326.5,494.8 327.5,492.8 328.5,491.0 329.5,489.5 330.5,488.3 331.5,487.3 332.5,486.7 333.5,486.3 334.5,486.2 335.5,486.4 336.5,486.9 337.5,487.7 338.5,488.8 339.5,490.1 340.5,491.7 341.5,493.6 342.5,495.7 343.5,498.1 344.5,500.6 345.5,503.4 346.5,506.4 347.5,509.5 348.5,512.8 349.5,516.2 350.5,519.7 351.5,523.3 352.5,527.0 353.5,530.7 354.5,534.5 355.5,538.2 356.5,541.9 357.5,545.5 358.5,549.1 359.5,552.6 360.5,556.0 361.5,559.2 362.5,562.3 363.5,565.2 364.5,567.9 365.5,570.4 366.5,572.7 367.5,574.7 368.5,576.5 369.5,578.0 370.5,579.2 371.5,580.2 372.5,580.9 373.5,581.3 374.5,581.4 375.5,581.2 376.5,580.7 377.5,580.0 378.5,578.9 379.5,577.6 380.5,576.0 381.5,574.1 382.5,572.0 383.5,569.7 384.5,567.1 385.5,564.3 386.5,561.4 387.5,558.2 388.5,555.0 389.5,551.6 390.5,548.0 391.5,544.4 392.5,540.8 393.5,537.1 394.5,533.3 395.5,529.6 396.5,525.9 397.5,522.2 398.5,518.7 399.5,515.2 400.5,511.8 401.5,508.6 402.5,505.5 403.5,502.6 404.5,499.8 405.5,497.3 406.5,495.1 407.5,493.0 408.5,491.2 409.5,489.7 410.5,488.4 411.5,487.4 412.5,486.7 413.5,486.3 414.5,486.2 415.5,486.4 416.5,486.8 417.5,487.6 418.5,488.6 419.5,490.0 420.5,491.5 421.5,493.4 422.5,495.5 423.5,497.8 424.5,500.4 425.5,503.1 426.5,506.1 427.5,509.2 428.5,512.5 429.5,515.9 430.5,519.4 431.5,523.0 432.5,526.6 433.5,530.3 434.5,534.1 435.5,537.8 436.5,541.5 437.5,545.2 438.5,548.8 439.5,552.3 440.5,555.6 441.5,558.9 442.5,562.0 443.5,564.9 444.5,567.6 445.5,570.1 446.5,572.4 447.5,574.5 448.5,576.3 449.5,577.9 450.5,579.1 451.5,580.1 452.5,580.8 453.5,581.3 454.5,581.4 455.5,581.2 456.5,580.8 457.5,580.0 458.5,579.0 459.5,577.7 460.5,576.1 461.5,574.3 462.5,572.2 463.5,569.9 464.5,567.4 465.5,564.6 466.5,561.7 467.5,558.6 468.5,555.3 469.5,551.9 470.5,548.4 471.5,544.8 472.5,541.1 473.5,537.4 474.5,533.7 475.5,530.0 476.5,526.3 477.5,522.6 478.5,519.0 479.5,515.5 480.5,512.1 481.5,508.9 482.5,505.8 483.5,502.8 484.5,500.1 485.5,497.6 486.5,495.3 487.5,493.2 488.5,491.4 489.5,489.8 490.5,488.5 491.5,487.5 492.5,486.8 493.5,486.3 494.5,486.2 495.5,486.3 496.5,486.8 497.5,487.5 498.5,488.5 499.5,489.8 500.5,491.4 501.5,493.2 502.5,495.3 503.5,497.6 504.5,500.1 505.5,502.8 506.5,505.8 507.5,508.9 508.5,512.1 509.5,515.5 510.5,519.0 511.5,522.6 512.5,526.3 513.5,530.0 514.5,533.7 515.5,537.4 516.5,541.1 517.5,544.8 518.5,548.4 519.5,551.9 520.5,555.3 521.5,558.6 522.5,561.7 523.5,564.6 524.5,567.4 525.5,569.9 526.5,572.2 527.5,574.3 528.5,576.1 529.5,577.7 530.5,579.0 531.5,580.0 532.5,580.8 533.5,581.2 534.5,581.4 535.5,581.3 536.5,580.8 537.5,580.1 538.5,579.1 539.5,577.9 540.5,576.3 541.5,574.5 542.5,572.4 543.5,570.1 544.5,567.6 545.5,564.9 546.5,562.0 547.5,558.9 548.5,555.6 549.5,552.3 550.5,548.8 551.5,545.2 552.5,541.5 553.5,537.8 554.5,534.1 555.5,530.3 556.5,526.6 557.5,523.0 558.5,519.4 559.5,515.9 560.5,512.5 561.5,509.2 562.5,506.1 563.5,503.1 564.5,500.4 565.5,497.8 566.5,495.5 567.5,493.4 568.5,491.5 569.5,490.0 570.5,488.6 571.5,487.6 572.5,486.8 573.5,486.4 574.5,486.2 575.5,486.3 576.5,486.7 577.5,487.4 578.5,488.4 579.5,489.7 580.5,491.2 581.5,493.0 582.5,495.1 583.5,497.3 584.5,499.8 585.5,502.6 586.5,505.5 587.5,508.6 588.5,511.8 589.5,515.2 590.5,518.7 591.5,522.2 592.5,525.9 593.5,529.6 594.5,533.3 595.5,537.1 596.5,540.8 597.5,544.4 598.5,548.0 599.5,551.6 600.5,555.0 601.5,558.2 602.5,561.4 603.5,564.3 604.5,567.1 605.5,569.7 606.5,572.0 607.5,574.1 608.5,576.0 609.5,577.6 610.5,578.9 611.5,580.0 612.5,580.7 613.5,581.2 614.5,581.4 615.5,581.3 616.5,580.9 617.5,580.2 618.5,579.2 619.5,578.0 620.5,576.5 621.5,574.7 622.5,572.7 623.5,570.4 624.5,567.9 625.5,565.2 626.5,562.3 627.5,559.2 628.5,556.0 629.5,552.6 630.5,549.1 631.5,545.5 632.5,541.9 633.5,538.2 634.5,534.5 635.5,530.7 636.5,527.0 637.5,523.3 638.5,519.7 639.5,516.2 640.5,512.8 641.5,509.5 642.5,506.4 643.5,503.4 644.5,500.6 645.5,498.1 646.5,495.7 647.5,493.6 648.5,491.7 649.5,490.1 650.5,488.8 651.5,487.7 652.5,486.9 653.5,486.4 654.5,486.2 655.5,486.3 656.5,486.7 657.5,487.3 658.5,488.3 659.5,489.5 660.5,491.0 661.5,492.8 662.5,494.8 663.5,497.1 664.5,499.6 665.5,502.3 666.5,505.2 667.5,508.2 668.5,511.5 669.5,514.8 670.5,518.3 671.5,521.9 672.5,525.5 673.5,529.2 674.5,533.0 675.5,536.7 676.5,540.4 677.5,544.1 678.5,547.7 679.5,551.2 680.5,554.6"/>
<path d="M367.7 453.5 L379.8 453.5 L379.8 456.5 L373.7 462.0 L367.7 456.5Z" fill="#1e9ad8"/>
<path d="M54 526.0 L60 526.0 L65.5 532.5 L60 538.8 L54 538.8Z" fill="#f2ec10"/>
<text x="0" y="0" transform="translate(55.32 535.58) scale(0.6033 1)" fill="#111" style="font-family:'Liberation Sans';font-size:9.38px;font-weight:normal;" stroke="#111" stroke-width="0.5" stroke-linejoin="round" >T</text>
<rect x="297.00" y="632.00" width="1.00" height="1.00" fill="#8c8c8c" />
<rect x="301.00" y="632.00" width="1.00" height="1.00" fill="#8c8c8c" />
<rect x="305.00" y="632.00" width="1.00" height="1.00" fill="#8c8c8c" />
<rect x="309.00" y="632.00" width="1.00" height="1.00" fill="#8c8c8c" />
<rect x="313.00" y="632.00" width="1.00" height="1.00" fill="#8c8c8c" />
<rect x="317.00" y="632.00" width="1.00" height="1.00" fill="#8c8c8c" />
<rect x="321.00" y="632.00" width="1.00" height="1.00" fill="#8c8c8c" />
<rect x="325.00" y="632.00" width="1.00" height="1.00" fill="#8c8c8c" />
<rect x="329.00" y="632.00" width="1.00" height="1.00" fill="#8c8c8c" />
<rect x="333.00" y="632.00" width="1.00" height="1.00" fill="#8c8c8c" />
<rect x="337.00" y="632.00" width="1.00" height="1.00" fill="#8c8c8c" />
<rect x="341.00" y="632.00" width="1.00" height="1.00" fill="#8c8c8c" />
<rect x="345.00" y="632.00" width="1.00" height="1.00" fill="#8c8c8c" />
<rect x="349.00" y="632.00" width="1.00" height="1.00" fill="#8c8c8c" />
<rect x="353.00" y="632.00" width="1.00" height="1.00" fill="#8c8c8c" />
<rect x="357.00" y="632.00" width="1.00" height="1.00" fill="#8c8c8c" />
<rect x="361.00" y="632.00" width="1.00" height="1.00" fill="#8c8c8c" />
<rect x="365.00" y="632.00" width="1.00" height="1.00" fill="#8c8c8c" />
<rect x="369.00" y="632.00" width="1.00" height="1.00" fill="#8c8c8c" />
<rect x="373.00" y="632.00" width="1.00" height="1.00" fill="#8c8c8c" />
<rect x="377.00" y="632.00" width="1.00" height="1.00" fill="#8c8c8c" />
<rect x="381.00" y="632.00" width="1.00" height="1.00" fill="#8c8c8c" />
<rect x="385.00" y="632.00" width="1.00" height="1.00" fill="#8c8c8c" />
<rect x="389.00" y="632.00" width="1.00" height="1.00" fill="#8c8c8c" />
<rect x="393.00" y="632.00" width="1.00" height="1.00" fill="#8c8c8c" />
<rect x="397.00" y="632.00" width="1.00" height="1.00" fill="#8c8c8c" />
<rect x="401.00" y="632.00" width="1.00" height="1.00" fill="#8c8c8c" />
<rect x="405.00" y="632.00" width="1.00" height="1.00" fill="#8c8c8c" />
<rect x="409.00" y="632.00" width="1.00" height="1.00" fill="#8c8c8c" />
<rect x="413.00" y="632.00" width="1.00" height="1.00" fill="#8c8c8c" />
<rect x="417.00" y="632.00" width="1.00" height="1.00" fill="#8c8c8c" />
<rect x="421.00" y="632.00" width="1.00" height="1.00" fill="#8c8c8c" />
<rect x="425.00" y="632.00" width="1.00" height="1.00" fill="#8c8c8c" />
<rect x="429.00" y="632.00" width="1.00" height="1.00" fill="#8c8c8c" />
<rect x="433.00" y="632.00" width="1.00" height="1.00" fill="#8c8c8c" />
<rect x="437.00" y="632.00" width="1.00" height="1.00" fill="#8c8c8c" />
<rect x="441.00" y="632.00" width="1.00" height="1.00" fill="#8c8c8c" />
<rect x="445.00" y="632.00" width="1.00" height="1.00" fill="#8c8c8c" />
<rect x="449.00" y="632.00" width="1.00" height="1.00" fill="#8c8c8c" />
<rect x="313.00" y="616.00" width="1.00" height="1.00" fill="#8c8c8c" />
<rect x="313.00" y="620.00" width="1.00" height="1.00" fill="#8c8c8c" />
<rect x="313.00" y="624.00" width="1.00" height="1.00" fill="#8c8c8c" />
<rect x="313.00" y="628.00" width="1.00" height="1.00" fill="#8c8c8c" />
<rect x="313.00" y="632.00" width="1.00" height="1.00" fill="#8c8c8c" />
<rect x="313.00" y="636.00" width="1.00" height="1.00" fill="#8c8c8c" />
<rect x="313.00" y="640.00" width="1.00" height="1.00" fill="#8c8c8c" />
<rect x="313.00" y="644.00" width="1.00" height="1.00" fill="#8c8c8c" />
<rect x="313.00" y="648.00" width="1.00" height="1.00" fill="#8c8c8c" />
<rect x="313.00" y="652.00" width="1.00" height="1.00" fill="#8c8c8c" />
<rect x="313.00" y="656.00" width="1.00" height="1.00" fill="#8c8c8c" />
<rect x="313.00" y="660.00" width="1.00" height="1.00" fill="#8c8c8c" />
<rect x="313.00" y="664.00" width="1.00" height="1.00" fill="#8c8c8c" />
<rect x="313.00" y="668.00" width="1.00" height="1.00" fill="#8c8c8c" />
<rect x="313.00" y="672.00" width="1.00" height="1.00" fill="#8c8c8c" />
<rect x="313.00" y="676.00" width="1.00" height="1.00" fill="#8c8c8c" />
<rect x="313.00" y="680.00" width="1.00" height="1.00" fill="#8c8c8c" />
<rect x="313.00" y="684.00" width="1.00" height="1.00" fill="#8c8c8c" />
<rect x="313.00" y="688.00" width="1.00" height="1.00" fill="#8c8c8c" />
<rect x="313.00" y="692.00" width="1.00" height="1.00" fill="#8c8c8c" />
<rect x="313.00" y="696.00" width="1.00" height="1.00" fill="#8c8c8c" />
<rect x="313.00" y="700.00" width="1.00" height="1.00" fill="#8c8c8c" />
<rect x="313.00" y="704.00" width="1.00" height="1.00" fill="#8c8c8c" />
<rect x="313.00" y="708.00" width="1.00" height="1.00" fill="#8c8c8c" />
<rect x="313.00" y="712.00" width="1.00" height="1.00" fill="#8c8c8c" />
<rect x="313.00" y="716.00" width="1.00" height="1.00" fill="#8c8c8c" />
<rect x="313.00" y="720.00" width="1.00" height="1.00" fill="#8c8c8c" />
<rect x="313.00" y="724.00" width="1.00" height="1.00" fill="#8c8c8c" />
<rect x="313.00" y="728.00" width="1.00" height="1.00" fill="#8c8c8c" />
<rect x="313.00" y="732.00" width="1.00" height="1.00" fill="#8c8c8c" />
<rect x="313.00" y="736.00" width="1.00" height="1.00" fill="#8c8c8c" />
<rect x="313.00" y="740.00" width="1.00" height="1.00" fill="#8c8c8c" />
<rect x="313.00" y="744.00" width="1.00" height="1.00" fill="#8c8c8c" />
<rect x="313.00" y="748.00" width="1.00" height="1.00" fill="#8c8c8c" />
<rect x="313.00" y="752.00" width="1.00" height="1.00" fill="#8c8c8c" />
<rect x="313.00" y="756.00" width="1.00" height="1.00" fill="#8c8c8c" />
<rect x="313.00" y="760.00" width="1.00" height="1.00" fill="#8c8c8c" />
<rect x="313.00" y="764.00" width="1.00" height="1.00" fill="#8c8c8c" />
<rect x="313.00" y="768.00" width="1.00" height="1.00" fill="#8c8c8c" />
<rect x="297.00" y="652.00" width="1.00" height="1.00" fill="#8c8c8c" />
<rect x="301.00" y="652.00" width="1.00" height="1.00" fill="#8c8c8c" />
<rect x="305.00" y="652.00" width="1.00" height="1.00" fill="#8c8c8c" />
<rect x="309.00" y="652.00" width="1.00" height="1.00" fill="#8c8c8c" />
<rect x="313.00" y="652.00" width="1.00" height="1.00" fill="#8c8c8c" />
<rect x="317.00" y="652.00" width="1.00" height="1.00" fill="#8c8c8c" />
<rect x="321.00" y="652.00" width="1.00" height="1.00" fill="#8c8c8c" />
<rect x="325.00" y="652.00" width="1.00" height="1.00" fill="#8c8c8c" />
<rect x="329.00" y="652.00" width="1.00" height="1.00" fill="#8c8c8c" />
<rect x="333.00" y="652.00" width="1.00" height="1.00" fill="#8c8c8c" />
<rect x="337.00" y="652.00" width="1.00" height="1.00" fill="#8c8c8c" />
<rect x="341.00" y="652.00" width="1.00" height="1.00" fill="#8c8c8c" />
<rect x="345.00" y="652.00" width="1.00" height="1.00" fill="#8c8c8c" />
<rect x="349.00" y="652.00" width="1.00" height="1.00" fill="#8c8c8c" />
<rect x="353.00" y="652.00" width="1.00" height="1.00" fill="#8c8c8c" />
<rect x="357.00" y="652.00" width="1.00" height="1.00" fill="#8c8c8c" />
<rect x="361.00" y="652.00" width="1.00" height="1.00" fill="#8c8c8c" />
<rect x="365.00" y="652.00" width="1.00" height="1.00" fill="#8c8c8c" />
<rect x="369.00" y="652.00" width="1.00" height="1.00" fill="#8c8c8c" />
<rect x="373.00" y="652.00" width="1.00" height="1.00" fill="#8c8c8c" />
<rect x="377.00" y="652.00" width="1.00" height="1.00" fill="#8c8c8c" />
<rect x="381.00" y="652.00" width="1.00" height="1.00" fill="#8c8c8c" />
<rect x="385.00" y="652.00" width="1.00" height="1.00" fill="#8c8c8c" />
<rect x="389.00" y="652.00" width="1.00" height="1.00" fill="#8c8c8c" />
<rect x="393.00" y="652.00" width="1.00" height="1.00" fill="#8c8c8c" />
<rect x="397.00" y="652.00" width="1.00" height="1.00" fill="#8c8c8c" />
<rect x="401.00" y="652.00" width="1.00" height="1.00" fill="#8c8c8c" />
<rect x="405.00" y="652.00" width="1.00" height="1.00" fill="#8c8c8c" />
<rect x="409.00" y="652.00" width="1.00" height="1.00" fill="#8c8c8c" />
<rect x="413.00" y="652.00" width="1.00" height="1.00" fill="#8c8c8c" />
<rect x="417.00" y="652.00" width="1.00" height="1.00" fill="#8c8c8c" />
<rect x="421.00" y="652.00" width="1.00" height="1.00" fill="#8c8c8c" />
<rect x="425.00" y="652.00" width="1.00" height="1.00" fill="#8c8c8c" />
<rect x="429.00" y="652.00" width="1.00" height="1.00" fill="#8c8c8c" />
<rect x="433.00" y="652.00" width="1.00" height="1.00" fill="#8c8c8c" />
<rect x="437.00" y="652.00" width="1.00" height="1.00" fill="#8c8c8c" />
<rect x="441.00" y="652.00" width="1.00" height="1.00" fill="#8c8c8c" />
<rect x="445.00" y="652.00" width="1.00" height="1.00" fill="#8c8c8c" />
<rect x="449.00" y="652.00" width="1.00" height="1.00" fill="#8c8c8c" />
<rect x="333.00" y="616.00" width="1.00" height="1.00" fill="#8c8c8c" />
<rect x="333.00" y="620.00" width="1.00" height="1.00" fill="#8c8c8c" />
<rect x="333.00" y="624.00" width="1.00" height="1.00" fill="#8c8c8c" />
<rect x="333.00" y="628.00" width="1.00" height="1.00" fill="#8c8c8c" />
<rect x="333.00" y="632.00" width="1.00" height="1.00" fill="#8c8c8c" />
<rect x="333.00" y="636.00" width="1.00" height="1.00" fill="#8c8c8c" />
<rect x="333.00" y="640.00" width="1.00" height="1.00" fill="#8c8c8c" />
<rect x="333.00" y="644.00" width="1.00" height="1.00" fill="#8c8c8c" />
<rect x="333.00" y="648.00" width="1.00" height="1.00" fill="#8c8c8c" />
<rect x="333.00" y="652.00" width="1.00" height="1.00" fill="#8c8c8c" />
<rect x="333.00" y="656.00" width="1.00" height="1.00" fill="#8c8c8c" />
<rect x="333.00" y="660.00" width="1.00" height="1.00" fill="#8c8c8c" />
<rect x="333.00" y="664.00" width="1.00" height="1.00" fill="#8c8c8c" />
<rect x="333.00" y="668.00" width="1.00" height="1.00" fill="#8c8c8c" />
<rect x="333.00" y="672.00" width="1.00" height="1.00" fill="#8c8c8c" />
<rect x="333.00" y="676.00" width="1.00" height="1.00" fill="#8c8c8c" />
<rect x="333.00" y="680.00" width="1.00" height="1.00" fill="#8c8c8c" />
<rect x="333.00" y="684.00" width="1.00" height="1.00" fill="#8c8c8c" />
<rect x="333.00" y="688.00" width="1.00" height="1.00" fill="#8c8c8c" />
<rect x="333.00" y="692.00" width="1.00" height="1.00" fill="#8c8c8c" />
<rect x="333.00" y="696.00" width="1.00" height="1.00" fill="#8c8c8c" />
<rect x="333.00" y="700.00" width="1.00" height="1.00" fill="#8c8c8c" />
<rect x="333.00" y="704.00" width="1.00" height="1.00" fill="#8c8c8c" />
<rect x="333.00" y="708.00" width="1.00" height="1.00" fill="#8c8c8c" />
<rect x="333.00" y="712.00" width="1.00" height="1.00" fill="#8c8c8c" />
<rect x="333.00" y="716.00" width="1.00" height="1.00" fill="#8c8c8c" />
<rect x="333.00" y="720.00" width="1.00" height="1.00" fill="#8c8c8c" />
<rect x="333.00" y="724.00" width="1.00" height="1.00" fill="#8c8c8c" />
<rect x="333.00" y="728.00" width="1.00" height="1.00" fill="#8c8c8c" />
<rect x="333.00" y="732.00" width="1.00" height="1.00" fill="#8c8c8c" />
<rect x="333.00" y="736.00" width="1.00" height="1.00" fill="#8c8c8c" />
<rect x="333.00" y="740.00" width="1.00" height="1.00" fill="#8c8c8c" />
<rect x="333.00" y="744.00" width="1.00" height="1.00" fill="#8c8c8c" />
<rect x="333.00" y="748.00" width="1.00" height="1.00" fill="#8c8c8c" />
<rect x="333.00" y="752.00" width="1.00" height="1.00" fill="#8c8c8c" />
<rect x="333.00" y="756.00" width="1.00" height="1.00" fill="#8c8c8c" />
<rect x="333.00" y="760.00" width="1.00" height="1.00" fill="#8c8c8c" />
<rect x="333.00" y="764.00" width="1.00" height="1.00" fill="#8c8c8c" />
<rect x="333.00" y="768.00" width="1.00" height="1.00" fill="#8c8c8c" />
<rect x="297.00" y="672.00" width="1.00" height="1.00" fill="#8c8c8c" />
<rect x="301.00" y="672.00" width="1.00" height="1.00" fill="#8c8c8c" />
<rect x="305.00" y="672.00" width="1.00" height="1.00" fill="#8c8c8c" />
<rect x="309.00" y="672.00" width="1.00" height="1.00" fill="#8c8c8c" />
<rect x="313.00" y="672.00" width="1.00" height="1.00" fill="#8c8c8c" />
<rect x="317.00" y="672.00" width="1.00" height="1.00" fill="#8c8c8c" />
<rect x="321.00" y="672.00" width="1.00" height="1.00" fill="#8c8c8c" />
<rect x="325.00" y="672.00" width="1.00" height="1.00" fill="#8c8c8c" />
<rect x="329.00" y="672.00" width="1.00" height="1.00" fill="#8c8c8c" />
<rect x="333.00" y="672.00" width="1.00" height="1.00" fill="#8c8c8c" />
<rect x="337.00" y="672.00" width="1.00" height="1.00" fill="#8c8c8c" />
<rect x="341.00" y="672.00" width="1.00" height="1.00" fill="#8c8c8c" />
<rect x="345.00" y="672.00" width="1.00" height="1.00" fill="#8c8c8c" />
<rect x="349.00" y="672.00" width="1.00" height="1.00" fill="#8c8c8c" />
<rect x="353.00" y="672.00" width="1.00" height="1.00" fill="#8c8c8c" />
<rect x="357.00" y="672.00" width="1.00" height="1.00" fill="#8c8c8c" />
<rect x="361.00" y="672.00" width="1.00" height="1.00" fill="#8c8c8c" />
<rect x="365.00" y="672.00" width="1.00" height="1.00" fill="#8c8c8c" />
<rect x="369.00" y="672.00" width="1.00" height="1.00" fill="#8c8c8c" />
<rect x="373.00" y="672.00" width="1.00" height="1.00" fill="#8c8c8c" />
<rect x="377.00" y="672.00" width="1.00" height="1.00" fill="#8c8c8c" />
<rect x="381.00" y="672.00" width="1.00" height="1.00" fill="#8c8c8c" />
<rect x="385.00" y="672.00" width="1.00" height="1.00" fill="#8c8c8c" />
<rect x="389.00" y="672.00" width="1.00" height="1.00" fill="#8c8c8c" />
<rect x="393.00" y="672.00" width="1.00" height="1.00" fill="#8c8c8c" />
<rect x="397.00" y="672.00" width="1.00" height="1.00" fill="#8c8c8c" />
<rect x="401.00" y="672.00" width="1.00" height="1.00" fill="#8c8c8c" />
<rect x="405.00" y="672.00" width="1.00" height="1.00" fill="#8c8c8c" />
<rect x="409.00" y="672.00" width="1.00" height="1.00" fill="#8c8c8c" />
<rect x="413.00" y="672.00" width="1.00" height="1.00" fill="#8c8c8c" />
<rect x="417.00" y="672.00" width="1.00" height="1.00" fill="#8c8c8c" />
<rect x="421.00" y="672.00" width="1.00" height="1.00" fill="#8c8c8c" />
<rect x="425.00" y="672.00" width="1.00" height="1.00" fill="#8c8c8c" />
<rect x="429.00" y="672.00" width="1.00" height="1.00" fill="#8c8c8c" />
<rect x="433.00" y="672.00" width="1.00" height="1.00" fill="#8c8c8c" />
<rect x="437.00" y="672.00" width="1.00" height="1.00" fill="#8c8c8c" />
<rect x="441.00" y="672.00" width="1.00" height="1.00" fill="#8c8c8c" />
<rect x="445.00" y="672.00" width="1.00" height="1.00" fill="#8c8c8c" />
<rect x="449.00" y="672.00" width="1.00" height="1.00" fill="#8c8c8c" />
<rect x="353.00" y="616.00" width="1.00" height="1.00" fill="#8c8c8c" />
<rect x="353.00" y="620.00" width="1.00" height="1.00" fill="#8c8c8c" />
<rect x="353.00" y="624.00" width="1.00" height="1.00" fill="#8c8c8c" />
<rect x="353.00" y="628.00" width="1.00" height="1.00" fill="#8c8c8c" />
<rect x="353.00" y="632.00" width="1.00" height="1.00" fill="#8c8c8c" />
<rect x="353.00" y="636.00" width="1.00" height="1.00" fill="#8c8c8c" />
<rect x="353.00" y="640.00" width="1.00" height="1.00" fill="#8c8c8c" />
<rect x="353.00" y="644.00" width="1.00" height="1.00" fill="#8c8c8c" />
<rect x="353.00" y="648.00" width="1.00" height="1.00" fill="#8c8c8c" />
<rect x="353.00" y="652.00" width="1.00" height="1.00" fill="#8c8c8c" />
<rect x="353.00" y="656.00" width="1.00" height="1.00" fill="#8c8c8c" />
<rect x="353.00" y="660.00" width="1.00" height="1.00" fill="#8c8c8c" />
<rect x="353.00" y="664.00" width="1.00" height="1.00" fill="#8c8c8c" />
<rect x="353.00" y="668.00" width="1.00" height="1.00" fill="#8c8c8c" />
<rect x="353.00" y="672.00" width="1.00" height="1.00" fill="#8c8c8c" />
<rect x="353.00" y="676.00" width="1.00" height="1.00" fill="#8c8c8c" />
<rect x="353.00" y="680.00" width="1.00" height="1.00" fill="#8c8c8c" />
<rect x="353.00" y="684.00" width="1.00" height="1.00" fill="#8c8c8c" />
<rect x="353.00" y="688.00" width="1.00" height="1.00" fill="#8c8c8c" />
<rect x="353.00" y="692.00" width="1.00" height="1.00" fill="#8c8c8c" />
<rect x="353.00" y="696.00" width="1.00" height="1.00" fill="#8c8c8c" />
<rect x="353.00" y="700.00" width="1.00" height="1.00" fill="#8c8c8c" />
<rect x="353.00" y="704.00" width="1.00" height="1.00" fill="#8c8c8c" />
<rect x="353.00" y="708.00" width="1.00" height="1.00" fill="#8c8c8c" />
<rect x="353.00" y="712.00" width="1.00" height="1.00" fill="#8c8c8c" />
<rect x="353.00" y="716.00" width="1.00" height="1.00" fill="#8c8c8c" />
<rect x="353.00" y="720.00" width="1.00" height="1.00" fill="#8c8c8c" />
<rect x="353.00" y="724.00" width="1.00" height="1.00" fill="#8c8c8c" />
<rect x="353.00" y="728.00" width="1.00" height="1.00" fill="#8c8c8c" />
<rect x="353.00" y="732.00" width="1.00" height="1.00" fill="#8c8c8c" />
<rect x="353.00" y="736.00" width="1.00" height="1.00" fill="#8c8c8c" />
<rect x="353.00" y="740.00" width="1.00" height="1.00" fill="#8c8c8c" />
<rect x="353.00" y="744.00" width="1.00" height="1.00" fill="#8c8c8c" />
<rect x="353.00" y="748.00" width="1.00" height="1.00" fill="#8c8c8c" />
<rect x="353.00" y="752.00" width="1.00" height="1.00" fill="#8c8c8c" />
<rect x="353.00" y="756.00" width="1.00" height="1.00" fill="#8c8c8c" />
<rect x="353.00" y="760.00" width="1.00" height="1.00" fill="#8c8c8c" />
<rect x="353.00" y="764.00" width="1.00" height="1.00" fill="#8c8c8c" />
<rect x="353.00" y="768.00" width="1.00" height="1.00" fill="#8c8c8c" />
<rect x="297.00" y="712.00" width="1.00" height="1.00" fill="#8c8c8c" />
<rect x="301.00" y="712.00" width="1.00" height="1.00" fill="#8c8c8c" />
<rect x="305.00" y="712.00" width="1.00" height="1.00" fill="#8c8c8c" />
<rect x="309.00" y="712.00" width="1.00" height="1.00" fill="#8c8c8c" />
<rect x="313.00" y="712.00" width="1.00" height="1.00" fill="#8c8c8c" />
<rect x="317.00" y="712.00" width="1.00" height="1.00" fill="#8c8c8c" />
<rect x="321.00" y="712.00" width="1.00" height="1.00" fill="#8c8c8c" />
<rect x="325.00" y="712.00" width="1.00" height="1.00" fill="#8c8c8c" />
<rect x="329.00" y="712.00" width="1.00" height="1.00" fill="#8c8c8c" />
<rect x="333.00" y="712.00" width="1.00" height="1.00" fill="#8c8c8c" />
<rect x="337.00" y="712.00" width="1.00" height="1.00" fill="#8c8c8c" />
<rect x="341.00" y="712.00" width="1.00" height="1.00" fill="#8c8c8c" />
<rect x="345.00" y="712.00" width="1.00" height="1.00" fill="#8c8c8c" />
<rect x="349.00" y="712.00" width="1.00" height="1.00" fill="#8c8c8c" />
<rect x="353.00" y="712.00" width="1.00" height="1.00" fill="#8c8c8c" />
<rect x="357.00" y="712.00" width="1.00" height="1.00" fill="#8c8c8c" />
<rect x="361.00" y="712.00" width="1.00" height="1.00" fill="#8c8c8c" />
<rect x="365.00" y="712.00" width="1.00" height="1.00" fill="#8c8c8c" />
<rect x="369.00" y="712.00" width="1.00" height="1.00" fill="#8c8c8c" />
<rect x="373.00" y="712.00" width="1.00" height="1.00" fill="#8c8c8c" />
<rect x="377.00" y="712.00" width="1.00" height="1.00" fill="#8c8c8c" />
<rect x="381.00" y="712.00" width="1.00" height="1.00" fill="#8c8c8c" />
<rect x="385.00" y="712.00" width="1.00" height="1.00" fill="#8c8c8c" />
<rect x="389.00" y="712.00" width="1.00" height="1.00" fill="#8c8c8c" />
<rect x="393.00" y="712.00" width="1.00" height="1.00" fill="#8c8c8c" />
<rect x="397.00" y="712.00" width="1.00" height="1.00" fill="#8c8c8c" />
<rect x="401.00" y="712.00" width="1.00" height="1.00" fill="#8c8c8c" />
<rect x="405.00" y="712.00" width="1.00" height="1.00" fill="#8c8c8c" />
<rect x="409.00" y="712.00" width="1.00" height="1.00" fill="#8c8c8c" />
<rect x="413.00" y="712.00" width="1.00" height="1.00" fill="#8c8c8c" />
<rect x="417.00" y="712.00" width="1.00" height="1.00" fill="#8c8c8c" />
<rect x="421.00" y="712.00" width="1.00" height="1.00" fill="#8c8c8c" />
<rect x="425.00" y="712.00" width="1.00" height="1.00" fill="#8c8c8c" />
<rect x="429.00" y="712.00" width="1.00" height="1.00" fill="#8c8c8c" />
<rect x="433.00" y="712.00" width="1.00" height="1.00" fill="#8c8c8c" />
<rect x="437.00" y="712.00" width="1.00" height="1.00" fill="#8c8c8c" />
<rect x="441.00" y="712.00" width="1.00" height="1.00" fill="#8c8c8c" />
<rect x="445.00" y="712.00" width="1.00" height="1.00" fill="#8c8c8c" />
<rect x="449.00" y="712.00" width="1.00" height="1.00" fill="#8c8c8c" />
<rect x="393.00" y="616.00" width="1.00" height="1.00" fill="#8c8c8c" />
<rect x="393.00" y="620.00" width="1.00" height="1.00" fill="#8c8c8c" />
<rect x="393.00" y="624.00" width="1.00" height="1.00" fill="#8c8c8c" />
<rect x="393.00" y="628.00" width="1.00" height="1.00" fill="#8c8c8c" />
<rect x="393.00" y="632.00" width="1.00" height="1.00" fill="#8c8c8c" />
<rect x="393.00" y="636.00" width="1.00" height="1.00" fill="#8c8c8c" />
<rect x="393.00" y="640.00" width="1.00" height="1.00" fill="#8c8c8c" />
<rect x="393.00" y="644.00" width="1.00" height="1.00" fill="#8c8c8c" />
<rect x="393.00" y="648.00" width="1.00" height="1.00" fill="#8c8c8c" />
<rect x="393.00" y="652.00" width="1.00" height="1.00" fill="#8c8c8c" />
<rect x="393.00" y="656.00" width="1.00" height="1.00" fill="#8c8c8c" />
<rect x="393.00" y="660.00" width="1.00" height="1.00" fill="#8c8c8c" />
<rect x="393.00" y="664.00" width="1.00" height="1.00" fill="#8c8c8c" />
<rect x="393.00" y="668.00" width="1.00" height="1.00" fill="#8c8c8c" />
<rect x="393.00" y="672.00" width="1.00" height="1.00" fill="#8c8c8c" />
<rect x="393.00" y="676.00" width="1.00" height="1.00" fill="#8c8c8c" />
<rect x="393.00" y="680.00" width="1.00" height="1.00" fill="#8c8c8c" />
<rect x="393.00" y="684.00" width="1.00" height="1.00" fill="#8c8c8c" />
<rect x="393.00" y="688.00" width="1.00" height="1.00" fill="#8c8c8c" />
<rect x="393.00" y="692.00" width="1.00" height="1.00" fill="#8c8c8c" />
<rect x="393.00" y="696.00" width="1.00" height="1.00" fill="#8c8c8c" />
<rect x="393.00" y="700.00" width="1.00" height="1.00" fill="#8c8c8c" />
<rect x="393.00" y="704.00" width="1.00" height="1.00" fill="#8c8c8c" />
<rect x="393.00" y="708.00" width="1.00" height="1.00" fill="#8c8c8c" />
<rect x="393.00" y="712.00" width="1.00" height="1.00" fill="#8c8c8c" />
<rect x="393.00" y="716.00" width="1.00" height="1.00" fill="#8c8c8c" />
<rect x="393.00" y="720.00" width="1.00" height="1.00" fill="#8c8c8c" />
<rect x="393.00" y="724.00" width="1.00" height="1.00" fill="#8c8c8c" />
<rect x="393.00" y="728.00" width="1.00" height="1.00" fill="#8c8c8c" />
<rect x="393.00" y="732.00" width="1.00" height="1.00" fill="#8c8c8c" />
<rect x="393.00" y="736.00" width="1.00" height="1.00" fill="#8c8c8c" />
<rect x="393.00" y="740.00" width="1.00" height="1.00" fill="#8c8c8c" />
<rect x="393.00" y="744.00" width="1.00" height="1.00" fill="#8c8c8c" />
<rect x="393.00" y="748.00" width="1.00" height="1.00" fill="#8c8c8c" />
<rect x="393.00" y="752.00" width="1.00" height="1.00" fill="#8c8c8c" />
<rect x="393.00" y="756.00" width="1.00" height="1.00" fill="#8c8c8c" />
<rect x="393.00" y="760.00" width="1.00" height="1.00" fill="#8c8c8c" />
<rect x="393.00" y="764.00" width="1.00" height="1.00" fill="#8c8c8c" />
<rect x="393.00" y="768.00" width="1.00" height="1.00" fill="#8c8c8c" />
<rect x="297.00" y="732.00" width="1.00" height="1.00" fill="#8c8c8c" />
<rect x="301.00" y="732.00" width="1.00" height="1.00" fill="#8c8c8c" />
<rect x="305.00" y="732.00" width="1.00" height="1.00" fill="#8c8c8c" />
<rect x="309.00" y="732.00" width="1.00" height="1.00" fill="#8c8c8c" />
<rect x="313.00" y="732.00" width="1.00" height="1.00" fill="#8c8c8c" />
<rect x="317.00" y="732.00" width="1.00" height="1.00" fill="#8c8c8c" />
<rect x="321.00" y="732.00" width="1.00" height="1.00" fill="#8c8c8c" />
<rect x="325.00" y="732.00" width="1.00" height="1.00" fill="#8c8c8c" />
<rect x="329.00" y="732.00" width="1.00" height="1.00" fill="#8c8c8c" />
<rect x="333.00" y="732.00" width="1.00" height="1.00" fill="#8c8c8c" />
<rect x="337.00" y="732.00" width="1.00" height="1.00" fill="#8c8c8c" />
<rect x="341.00" y="732.00" width="1.00" height="1.00" fill="#8c8c8c" />
<rect x="345.00" y="732.00" width="1.00" height="1.00" fill="#8c8c8c" />
<rect x="349.00" y="732.00" width="1.00" height="1.00" fill="#8c8c8c" />
<rect x="353.00" y="732.00" width="1.00" height="1.00" fill="#8c8c8c" />
<rect x="357.00" y="732.00" width="1.00" height="1.00" fill="#8c8c8c" />
<rect x="361.00" y="732.00" width="1.00" height="1.00" fill="#8c8c8c" />
<rect x="365.00" y="732.00" width="1.00" height="1.00" fill="#8c8c8c" />
<rect x="369.00" y="732.00" width="1.00" height="1.00" fill="#8c8c8c" />
<rect x="373.00" y="732.00" width="1.00" height="1.00" fill="#8c8c8c" />
<rect x="377.00" y="732.00" width="1.00" height="1.00" fill="#8c8c8c" />
<rect x="381.00" y="732.00" width="1.00" height="1.00" fill="#8c8c8c" />
<rect x="385.00" y="732.00" width="1.00" height="1.00" fill="#8c8c8c" />
<rect x="389.00" y="732.00" width="1.00" height="1.00" fill="#8c8c8c" />
<rect x="393.00" y="732.00" width="1.00" height="1.00" fill="#8c8c8c" />
<rect x="397.00" y="732.00" width="1.00" height="1.00" fill="#8c8c8c" />
<rect x="401.00" y="732.00" width="1.00" height="1.00" fill="#8c8c8c" />
<rect x="405.00" y="732.00" width="1.00" height="1.00" fill="#8c8c8c" />
<rect x="409.00" y="732.00" width="1.00" height="1.00" fill="#8c8c8c" />
<rect x="413.00" y="732.00" width="1.00" height="1.00" fill="#8c8c8c" />
<rect x="417.00" y="732.00" width="1.00" height="1.00" fill="#8c8c8c" />
<rect x="421.00" y="732.00" width="1.00" height="1.00" fill="#8c8c8c" />
<rect x="425.00" y="732.00" width="1.00" height="1.00" fill="#8c8c8c" />
<rect x="429.00" y="732.00" width="1.00" height="1.00" fill="#8c8c8c" />
<rect x="433.00" y="732.00" width="1.00" height="1.00" fill="#8c8c8c" />
<rect x="437.00" y="732.00" width="1.00" height="1.00" fill="#8c8c8c" />
<rect x="441.00" y="732.00" width="1.00" height="1.00" fill="#8c8c8c" />
<rect x="445.00" y="732.00" width="1.00" height="1.00" fill="#8c8c8c" />
<rect x="449.00" y="732.00" width="1.00" height="1.00" fill="#8c8c8c" />
<rect x="413.00" y="616.00" width="1.00" height="1.00" fill="#8c8c8c" />
<rect x="413.00" y="620.00" width="1.00" height="1.00" fill="#8c8c8c" />
<rect x="413.00" y="624.00" width="1.00" height="1.00" fill="#8c8c8c" />
<rect x="413.00" y="628.00" width="1.00" height="1.00" fill="#8c8c8c" />
<rect x="413.00" y="632.00" width="1.00" height="1.00" fill="#8c8c8c" />
<rect x="413.00" y="636.00" width="1.00" height="1.00" fill="#8c8c8c" />
<rect x="413.00" y="640.00" width="1.00" height="1.00" fill="#8c8c8c" />
<rect x="413.00" y="644.00" width="1.00" height="1.00" fill="#8c8c8c" />
<rect x="413.00" y="648.00" width="1.00" height="1.00" fill="#8c8c8c" />
<rect x="413.00" y="652.00" width="1.00" height="1.00" fill="#8c8c8c" />
<rect x="413.00" y="656.00" width="1.00" height="1.00" fill="#8c8c8c" />
<rect x="413.00" y="660.00" width="1.00" height="1.00" fill="#8c8c8c" />
<rect x="413.00" y="664.00" width="1.00" height="1.00" fill="#8c8c8c" />
<rect x="413.00" y="668.00" width="1.00" height="1.00" fill="#8c8c8c" />
<rect x="413.00" y="672.00" width="1.00" height="1.00" fill="#8c8c8c" />
<rect x="413.00" y="676.00" width="1.00" height="1.00" fill="#8c8c8c" />
<rect x="413.00" y="680.00" width="1.00" height="1.00" fill="#8c8c8c" />
<rect x="413.00" y="684.00" width="1.00" height="1.00" fill="#8c8c8c" />
<rect x="413.00" y="688.00" width="1.00" height="1.00" fill="#8c8c8c" />
<rect x="413.00" y="692.00" width="1.00" height="1.00" fill="#8c8c8c" />
<rect x="413.00" y="696.00" width="1.00" height="1.00" fill="#8c8c8c" />
<rect x="413.00" y="700.00" width="1.00" height="1.00" fill="#8c8c8c" />
<rect x="413.00" y="704.00" width="1.00" height="1.00" fill="#8c8c8c" />
<rect x="413.00" y="708.00" width="1.00" height="1.00" fill="#8c8c8c" />
<rect x="413.00" y="712.00" width="1.00" height="1.00" fill="#8c8c8c" />
<rect x="413.00" y="716.00" width="1.00" height="1.00" fill="#8c8c8c" />
<rect x="413.00" y="720.00" width="1.00" height="1.00" fill="#8c8c8c" />
<rect x="413.00" y="724.00" width="1.00" height="1.00" fill="#8c8c8c" />
<rect x="413.00" y="728.00" width="1.00" height="1.00" fill="#8c8c8c" />
<rect x="413.00" y="732.00" width="1.00" height="1.00" fill="#8c8c8c" />
<rect x="413.00" y="736.00" width="1.00" height="1.00" fill="#8c8c8c" />
<rect x="413.00" y="740.00" width="1.00" height="1.00" fill="#8c8c8c" />
<rect x="413.00" y="744.00" width="1.00" height="1.00" fill="#8c8c8c" />
<rect x="413.00" y="748.00" width="1.00" height="1.00" fill="#8c8c8c" />
<rect x="413.00" y="752.00" width="1.00" height="1.00" fill="#8c8c8c" />
<rect x="413.00" y="756.00" width="1.00" height="1.00" fill="#8c8c8c" />
<rect x="413.00" y="760.00" width="1.00" height="1.00" fill="#8c8c8c" />
<rect x="413.00" y="764.00" width="1.00" height="1.00" fill="#8c8c8c" />
<rect x="413.00" y="768.00" width="1.00" height="1.00" fill="#8c8c8c" />
<rect x="297.00" y="752.00" width="1.00" height="1.00" fill="#8c8c8c" />
<rect x="301.00" y="752.00" width="1.00" height="1.00" fill="#8c8c8c" />
<rect x="305.00" y="752.00" width="1.00" height="1.00" fill="#8c8c8c" />
<rect x="309.00" y="752.00" width="1.00" height="1.00" fill="#8c8c8c" />
<rect x="313.00" y="752.00" width="1.00" height="1.00" fill="#8c8c8c" />
<rect x="317.00" y="752.00" width="1.00" height="1.00" fill="#8c8c8c" />
<rect x="321.00" y="752.00" width="1.00" height="1.00" fill="#8c8c8c" />
<rect x="325.00" y="752.00" width="1.00" height="1.00" fill="#8c8c8c" />
<rect x="329.00" y="752.00" width="1.00" height="1.00" fill="#8c8c8c" />
<rect x="333.00" y="752.00" width="1.00" height="1.00" fill="#8c8c8c" />
<rect x="337.00" y="752.00" width="1.00" height="1.00" fill="#8c8c8c" />
<rect x="341.00" y="752.00" width="1.00" height="1.00" fill="#8c8c8c" />
<rect x="345.00" y="752.00" width="1.00" height="1.00" fill="#8c8c8c" />
<rect x="349.00" y="752.00" width="1.00" height="1.00" fill="#8c8c8c" />
<rect x="353.00" y="752.00" width="1.00" height="1.00" fill="#8c8c8c" />
<rect x="357.00" y="752.00" width="1.00" height="1.00" fill="#8c8c8c" />
<rect x="361.00" y="752.00" width="1.00" height="1.00" fill="#8c8c8c" />
<rect x="365.00" y="752.00" width="1.00" height="1.00" fill="#8c8c8c" />
<rect x="369.00" y="752.00" width="1.00" height="1.00" fill="#8c8c8c" />
<rect x="373.00" y="752.00" width="1.00" height="1.00" fill="#8c8c8c" />
<rect x="377.00" y="752.00" width="1.00" height="1.00" fill="#8c8c8c" />
<rect x="381.00" y="752.00" width="1.00" height="1.00" fill="#8c8c8c" />
<rect x="385.00" y="752.00" width="1.00" height="1.00" fill="#8c8c8c" />
<rect x="389.00" y="752.00" width="1.00" height="1.00" fill="#8c8c8c" />
<rect x="393.00" y="752.00" width="1.00" height="1.00" fill="#8c8c8c" />
<rect x="397.00" y="752.00" width="1.00" height="1.00" fill="#8c8c8c" />
<rect x="401.00" y="752.00" width="1.00" height="1.00" fill="#8c8c8c" />
<rect x="405.00" y="752.00" width="1.00" height="1.00" fill="#8c8c8c" />
<rect x="409.00" y="752.00" width="1.00" height="1.00" fill="#8c8c8c" />
<rect x="413.00" y="752.00" width="1.00" height="1.00" fill="#8c8c8c" />
<rect x="417.00" y="752.00" width="1.00" height="1.00" fill="#8c8c8c" />
<rect x="421.00" y="752.00" width="1.00" height="1.00" fill="#8c8c8c" />
<rect x="425.00" y="752.00" width="1.00" height="1.00" fill="#8c8c8c" />
<rect x="429.00" y="752.00" width="1.00" height="1.00" fill="#8c8c8c" />
<rect x="433.00" y="752.00" width="1.00" height="1.00" fill="#8c8c8c" />
<rect x="437.00" y="752.00" width="1.00" height="1.00" fill="#8c8c8c" />
<rect x="441.00" y="752.00" width="1.00" height="1.00" fill="#8c8c8c" />
<rect x="445.00" y="752.00" width="1.00" height="1.00" fill="#8c8c8c" />
<rect x="449.00" y="752.00" width="1.00" height="1.00" fill="#8c8c8c" />
<rect x="433.00" y="616.00" width="1.00" height="1.00" fill="#8c8c8c" />
<rect x="433.00" y="620.00" width="1.00" height="1.00" fill="#8c8c8c" />
<rect x="433.00" y="624.00" width="1.00" height="1.00" fill="#8c8c8c" />
<rect x="433.00" y="628.00" width="1.00" height="1.00" fill="#8c8c8c" />
<rect x="433.00" y="632.00" width="1.00" height="1.00" fill="#8c8c8c" />
<rect x="433.00" y="636.00" width="1.00" height="1.00" fill="#8c8c8c" />
<rect x="433.00" y="640.00" width="1.00" height="1.00" fill="#8c8c8c" />
<rect x="433.00" y="644.00" width="1.00" height="1.00" fill="#8c8c8c" />
<rect x="433.00" y="648.00" width="1.00" height="1.00" fill="#8c8c8c" />
<rect x="433.00" y="652.00" width="1.00" height="1.00" fill="#8c8c8c" />
<rect x="433.00" y="656.00" width="1.00" height="1.00" fill="#8c8c8c" />
<rect x="433.00" y="660.00" width="1.00" height="1.00" fill="#8c8c8c" />
<rect x="433.00" y="664.00" width="1.00" height="1.00" fill="#8c8c8c" />
<rect x="433.00" y="668.00" width="1.00" height="1.00" fill="#8c8c8c" />
<rect x="433.00" y="672.00" width="1.00" height="1.00" fill="#8c8c8c" />
<rect x="433.00" y="676.00" width="1.00" height="1.00" fill="#8c8c8c" />
<rect x="433.00" y="680.00" width="1.00" height="1.00" fill="#8c8c8c" />
<rect x="433.00" y="684.00" width="1.00" height="1.00" fill="#8c8c8c" />
<rect x="433.00" y="688.00" width="1.00" height="1.00" fill="#8c8c8c" />
<rect x="433.00" y="692.00" width="1.00" height="1.00" fill="#8c8c8c" />
<rect x="433.00" y="696.00" width="1.00" height="1.00" fill="#8c8c8c" />
<rect x="433.00" y="700.00" width="1.00" height="1.00" fill="#8c8c8c" />
<rect x="433.00" y="704.00" width="1.00" height="1.00" fill="#8c8c8c" />
<rect x="433.00" y="708.00" width="1.00" height="1.00" fill="#8c8c8c" />
<rect x="433.00" y="712.00" width="1.00" height="1.00" fill="#8c8c8c" />
<rect x="433.00" y="716.00" width="1.00" height="1.00" fill="#8c8c8c" />
<rect x="433.00" y="720.00" width="1.00" height="1.00" fill="#8c8c8c" />
<rect x="433.00" y="724.00" width="1.00" height="1.00" fill="#8c8c8c" />
<rect x="433.00" y="728.00" width="1.00" height="1.00" fill="#8c8c8c" />
<rect x="433.00" y="732.00" width="1.00" height="1.00" fill="#8c8c8c" />
<rect x="433.00" y="736.00" width="1.00" height="1.00" fill="#8c8c8c" />
<rect x="433.00" y="740.00" width="1.00" height="1.00" fill="#8c8c8c" />
<rect x="433.00" y="744.00" width="1.00" height="1.00" fill="#8c8c8c" />
<rect x="433.00" y="748.00" width="1.00" height="1.00" fill="#8c8c8c" />
<rect x="433.00" y="752.00" width="1.00" height="1.00" fill="#8c8c8c" />
<rect x="433.00" y="756.00" width="1.00" height="1.00" fill="#8c8c8c" />
<rect x="433.00" y="760.00" width="1.00" height="1.00" fill="#8c8c8c" />
<rect x="433.00" y="764.00" width="1.00" height="1.00" fill="#8c8c8c" />
<rect x="433.00" y="768.00" width="1.00" height="1.00" fill="#8c8c8c" />
<line x1="294.50" y1="771.50" x2="453.50" y2="771.50" stroke="#dedede" stroke-width="1.3" />
<line x1="294.50" y1="612.50" x2="294.50" y2="771.50" stroke="#dedede" stroke-width="1.3" />
<line x1="453.50" y1="612.50" x2="453.50" y2="771.50" stroke="#dedede" stroke-width="1.3" />
<line x1="294.50" y1="692.50" x2="453.50" y2="692.50" stroke="#dedede" stroke-width="1.3" />
<line x1="373.50" y1="612.50" x2="373.50" y2="771.50" stroke="#dedede" stroke-width="1.3" />
<line x1="293.50" y1="769.30" x2="293.50" y2="771.50" stroke="#c4c4c4" stroke-width="1.0" />
<line x1="293.50" y1="690.30" x2="293.50" y2="694.70" stroke="#c4c4c4" stroke-width="1.0" />
<line x1="297.50" y1="769.30" x2="297.50" y2="771.50" stroke="#c4c4c4" stroke-width="1.0" />
<line x1="297.50" y1="690.30" x2="297.50" y2="694.70" stroke="#c4c4c4" stroke-width="1.0" />
<line x1="301.50" y1="769.30" x2="301.50" y2="771.50" stroke="#c4c4c4" stroke-width="1.0" />
<line x1="301.50" y1="690.30" x2="301.50" y2="694.70" stroke="#c4c4c4" stroke-width="1.0" />
<line x1="305.50" y1="769.30" x2="305.50" y2="771.50" stroke="#c4c4c4" stroke-width="1.0" />
<line x1="305.50" y1="690.30" x2="305.50" y2="694.70" stroke="#c4c4c4" stroke-width="1.0" />
<line x1="309.50" y1="769.30" x2="309.50" y2="771.50" stroke="#c4c4c4" stroke-width="1.0" />
<line x1="309.50" y1="690.30" x2="309.50" y2="694.70" stroke="#c4c4c4" stroke-width="1.0" />
<line x1="313.50" y1="769.30" x2="313.50" y2="771.50" stroke="#c4c4c4" stroke-width="1.0" />
<line x1="313.50" y1="690.30" x2="313.50" y2="694.70" stroke="#c4c4c4" stroke-width="1.0" />
<line x1="317.50" y1="769.30" x2="317.50" y2="771.50" stroke="#c4c4c4" stroke-width="1.0" />
<line x1="317.50" y1="690.30" x2="317.50" y2="694.70" stroke="#c4c4c4" stroke-width="1.0" />
<line x1="321.50" y1="769.30" x2="321.50" y2="771.50" stroke="#c4c4c4" stroke-width="1.0" />
<line x1="321.50" y1="690.30" x2="321.50" y2="694.70" stroke="#c4c4c4" stroke-width="1.0" />
<line x1="325.50" y1="769.30" x2="325.50" y2="771.50" stroke="#c4c4c4" stroke-width="1.0" />
<line x1="325.50" y1="690.30" x2="325.50" y2="694.70" stroke="#c4c4c4" stroke-width="1.0" />
<line x1="329.50" y1="769.30" x2="329.50" y2="771.50" stroke="#c4c4c4" stroke-width="1.0" />
<line x1="329.50" y1="690.30" x2="329.50" y2="694.70" stroke="#c4c4c4" stroke-width="1.0" />
<line x1="333.50" y1="769.30" x2="333.50" y2="771.50" stroke="#c4c4c4" stroke-width="1.0" />
<line x1="333.50" y1="690.30" x2="333.50" y2="694.70" stroke="#c4c4c4" stroke-width="1.0" />
<line x1="337.50" y1="769.30" x2="337.50" y2="771.50" stroke="#c4c4c4" stroke-width="1.0" />
<line x1="337.50" y1="690.30" x2="337.50" y2="694.70" stroke="#c4c4c4" stroke-width="1.0" />
<line x1="341.50" y1="769.30" x2="341.50" y2="771.50" stroke="#c4c4c4" stroke-width="1.0" />
<line x1="341.50" y1="690.30" x2="341.50" y2="694.70" stroke="#c4c4c4" stroke-width="1.0" />
<line x1="345.50" y1="769.30" x2="345.50" y2="771.50" stroke="#c4c4c4" stroke-width="1.0" />
<line x1="345.50" y1="690.30" x2="345.50" y2="694.70" stroke="#c4c4c4" stroke-width="1.0" />
<line x1="349.50" y1="769.30" x2="349.50" y2="771.50" stroke="#c4c4c4" stroke-width="1.0" />
<line x1="349.50" y1="690.30" x2="349.50" y2="694.70" stroke="#c4c4c4" stroke-width="1.0" />
<line x1="353.50" y1="769.30" x2="353.50" y2="771.50" stroke="#c4c4c4" stroke-width="1.0" />
<line x1="353.50" y1="690.30" x2="353.50" y2="694.70" stroke="#c4c4c4" stroke-width="1.0" />
<line x1="357.50" y1="769.30" x2="357.50" y2="771.50" stroke="#c4c4c4" stroke-width="1.0" />
<line x1="357.50" y1="690.30" x2="357.50" y2="694.70" stroke="#c4c4c4" stroke-width="1.0" />
<line x1="361.50" y1="769.30" x2="361.50" y2="771.50" stroke="#c4c4c4" stroke-width="1.0" />
<line x1="361.50" y1="690.30" x2="361.50" y2="694.70" stroke="#c4c4c4" stroke-width="1.0" />
<line x1="365.50" y1="769.30" x2="365.50" y2="771.50" stroke="#c4c4c4" stroke-width="1.0" />
<line x1="365.50" y1="690.30" x2="365.50" y2="694.70" stroke="#c4c4c4" stroke-width="1.0" />
<line x1="369.50" y1="769.30" x2="369.50" y2="771.50" stroke="#c4c4c4" stroke-width="1.0" />
<line x1="369.50" y1="690.30" x2="369.50" y2="694.70" stroke="#c4c4c4" stroke-width="1.0" />
<line x1="373.50" y1="769.30" x2="373.50" y2="771.50" stroke="#c4c4c4" stroke-width="1.0" />
<line x1="373.50" y1="690.30" x2="373.50" y2="694.70" stroke="#c4c4c4" stroke-width="1.0" />
<line x1="377.50" y1="769.30" x2="377.50" y2="771.50" stroke="#c4c4c4" stroke-width="1.0" />
<line x1="377.50" y1="690.30" x2="377.50" y2="694.70" stroke="#c4c4c4" stroke-width="1.0" />
<line x1="381.50" y1="769.30" x2="381.50" y2="771.50" stroke="#c4c4c4" stroke-width="1.0" />
<line x1="381.50" y1="690.30" x2="381.50" y2="694.70" stroke="#c4c4c4" stroke-width="1.0" />
<line x1="385.50" y1="769.30" x2="385.50" y2="771.50" stroke="#c4c4c4" stroke-width="1.0" />
<line x1="385.50" y1="690.30" x2="385.50" y2="694.70" stroke="#c4c4c4" stroke-width="1.0" />
<line x1="389.50" y1="769.30" x2="389.50" y2="771.50" stroke="#c4c4c4" stroke-width="1.0" />
<line x1="389.50" y1="690.30" x2="389.50" y2="694.70" stroke="#c4c4c4" stroke-width="1.0" />
<line x1="393.50" y1="769.30" x2="393.50" y2="771.50" stroke="#c4c4c4" stroke-width="1.0" />
<line x1="393.50" y1="690.30" x2="393.50" y2="694.70" stroke="#c4c4c4" stroke-width="1.0" />
<line x1="397.50" y1="769.30" x2="397.50" y2="771.50" stroke="#c4c4c4" stroke-width="1.0" />
<line x1="397.50" y1="690.30" x2="397.50" y2="694.70" stroke="#c4c4c4" stroke-width="1.0" />
<line x1="401.50" y1="769.30" x2="401.50" y2="771.50" stroke="#c4c4c4" stroke-width="1.0" />
<line x1="401.50" y1="690.30" x2="401.50" y2="694.70" stroke="#c4c4c4" stroke-width="1.0" />
<line x1="405.50" y1="769.30" x2="405.50" y2="771.50" stroke="#c4c4c4" stroke-width="1.0" />
<line x1="405.50" y1="690.30" x2="405.50" y2="694.70" stroke="#c4c4c4" stroke-width="1.0" />
<line x1="409.50" y1="769.30" x2="409.50" y2="771.50" stroke="#c4c4c4" stroke-width="1.0" />
<line x1="409.50" y1="690.30" x2="409.50" y2="694.70" stroke="#c4c4c4" stroke-width="1.0" />
<line x1="413.50" y1="769.30" x2="413.50" y2="771.50" stroke="#c4c4c4" stroke-width="1.0" />
<line x1="413.50" y1="690.30" x2="413.50" y2="694.70" stroke="#c4c4c4" stroke-width="1.0" />
<line x1="417.50" y1="769.30" x2="417.50" y2="771.50" stroke="#c4c4c4" stroke-width="1.0" />
<line x1="417.50" y1="690.30" x2="417.50" y2="694.70" stroke="#c4c4c4" stroke-width="1.0" />
<line x1="421.50" y1="769.30" x2="421.50" y2="771.50" stroke="#c4c4c4" stroke-width="1.0" />
<line x1="421.50" y1="690.30" x2="421.50" y2="694.70" stroke="#c4c4c4" stroke-width="1.0" />
<line x1="425.50" y1="769.30" x2="425.50" y2="771.50" stroke="#c4c4c4" stroke-width="1.0" />
<line x1="425.50" y1="690.30" x2="425.50" y2="694.70" stroke="#c4c4c4" stroke-width="1.0" />
<line x1="429.50" y1="769.30" x2="429.50" y2="771.50" stroke="#c4c4c4" stroke-width="1.0" />
<line x1="429.50" y1="690.30" x2="429.50" y2="694.70" stroke="#c4c4c4" stroke-width="1.0" />
<line x1="433.50" y1="769.30" x2="433.50" y2="771.50" stroke="#c4c4c4" stroke-width="1.0" />
<line x1="433.50" y1="690.30" x2="433.50" y2="694.70" stroke="#c4c4c4" stroke-width="1.0" />
<line x1="437.50" y1="769.30" x2="437.50" y2="771.50" stroke="#c4c4c4" stroke-width="1.0" />
<line x1="437.50" y1="690.30" x2="437.50" y2="694.70" stroke="#c4c4c4" stroke-width="1.0" />
<line x1="441.50" y1="769.30" x2="441.50" y2="771.50" stroke="#c4c4c4" stroke-width="1.0" />
<line x1="441.50" y1="690.30" x2="441.50" y2="694.70" stroke="#c4c4c4" stroke-width="1.0" />
<line x1="445.50" y1="769.30" x2="445.50" y2="771.50" stroke="#c4c4c4" stroke-width="1.0" />
<line x1="445.50" y1="690.30" x2="445.50" y2="694.70" stroke="#c4c4c4" stroke-width="1.0" />
<line x1="449.50" y1="769.30" x2="449.50" y2="771.50" stroke="#c4c4c4" stroke-width="1.0" />
<line x1="449.50" y1="690.30" x2="449.50" y2="694.70" stroke="#c4c4c4" stroke-width="1.0" />
<line x1="294.50" y1="612.50" x2="296.70" y2="612.50" stroke="#c4c4c4" stroke-width="1.0" />
<line x1="451.30" y1="612.50" x2="453.50" y2="612.50" stroke="#c4c4c4" stroke-width="1.0" />
<line x1="371.30" y1="612.50" x2="375.70" y2="612.50" stroke="#c4c4c4" stroke-width="1.0" />
<line x1="294.50" y1="616.50" x2="296.70" y2="616.50" stroke="#c4c4c4" stroke-width="1.0" />
<line x1="451.30" y1="616.50" x2="453.50" y2="616.50" stroke="#c4c4c4" stroke-width="1.0" />
<line x1="371.30" y1="616.50" x2="375.70" y2="616.50" stroke="#c4c4c4" stroke-width="1.0" />
<line x1="294.50" y1="620.50" x2="296.70" y2="620.50" stroke="#c4c4c4" stroke-width="1.0" />
<line x1="451.30" y1="620.50" x2="453.50" y2="620.50" stroke="#c4c4c4" stroke-width="1.0" />
<line x1="371.30" y1="620.50" x2="375.70" y2="620.50" stroke="#c4c4c4" stroke-width="1.0" />
<line x1="294.50" y1="624.50" x2="296.70" y2="624.50" stroke="#c4c4c4" stroke-width="1.0" />
<line x1="451.30" y1="624.50" x2="453.50" y2="624.50" stroke="#c4c4c4" stroke-width="1.0" />
<line x1="371.30" y1="624.50" x2="375.70" y2="624.50" stroke="#c4c4c4" stroke-width="1.0" />
<line x1="294.50" y1="628.50" x2="296.70" y2="628.50" stroke="#c4c4c4" stroke-width="1.0" />
<line x1="451.30" y1="628.50" x2="453.50" y2="628.50" stroke="#c4c4c4" stroke-width="1.0" />
<line x1="371.30" y1="628.50" x2="375.70" y2="628.50" stroke="#c4c4c4" stroke-width="1.0" />
<line x1="294.50" y1="632.50" x2="296.70" y2="632.50" stroke="#c4c4c4" stroke-width="1.0" />
<line x1="451.30" y1="632.50" x2="453.50" y2="632.50" stroke="#c4c4c4" stroke-width="1.0" />
<line x1="371.30" y1="632.50" x2="375.70" y2="632.50" stroke="#c4c4c4" stroke-width="1.0" />
<line x1="294.50" y1="636.50" x2="296.70" y2="636.50" stroke="#c4c4c4" stroke-width="1.0" />
<line x1="451.30" y1="636.50" x2="453.50" y2="636.50" stroke="#c4c4c4" stroke-width="1.0" />
<line x1="371.30" y1="636.50" x2="375.70" y2="636.50" stroke="#c4c4c4" stroke-width="1.0" />
<line x1="294.50" y1="640.50" x2="296.70" y2="640.50" stroke="#c4c4c4" stroke-width="1.0" />
<line x1="451.30" y1="640.50" x2="453.50" y2="640.50" stroke="#c4c4c4" stroke-width="1.0" />
<line x1="371.30" y1="640.50" x2="375.70" y2="640.50" stroke="#c4c4c4" stroke-width="1.0" />
<line x1="294.50" y1="644.50" x2="296.70" y2="644.50" stroke="#c4c4c4" stroke-width="1.0" />
<line x1="451.30" y1="644.50" x2="453.50" y2="644.50" stroke="#c4c4c4" stroke-width="1.0" />
<line x1="371.30" y1="644.50" x2="375.70" y2="644.50" stroke="#c4c4c4" stroke-width="1.0" />
<line x1="294.50" y1="648.50" x2="296.70" y2="648.50" stroke="#c4c4c4" stroke-width="1.0" />
<line x1="451.30" y1="648.50" x2="453.50" y2="648.50" stroke="#c4c4c4" stroke-width="1.0" />
<line x1="371.30" y1="648.50" x2="375.70" y2="648.50" stroke="#c4c4c4" stroke-width="1.0" />
<line x1="294.50" y1="652.50" x2="296.70" y2="652.50" stroke="#c4c4c4" stroke-width="1.0" />
<line x1="451.30" y1="652.50" x2="453.50" y2="652.50" stroke="#c4c4c4" stroke-width="1.0" />
<line x1="371.30" y1="652.50" x2="375.70" y2="652.50" stroke="#c4c4c4" stroke-width="1.0" />
<line x1="294.50" y1="656.50" x2="296.70" y2="656.50" stroke="#c4c4c4" stroke-width="1.0" />
<line x1="451.30" y1="656.50" x2="453.50" y2="656.50" stroke="#c4c4c4" stroke-width="1.0" />
<line x1="371.30" y1="656.50" x2="375.70" y2="656.50" stroke="#c4c4c4" stroke-width="1.0" />
<line x1="294.50" y1="660.50" x2="296.70" y2="660.50" stroke="#c4c4c4" stroke-width="1.0" />
<line x1="451.30" y1="660.50" x2="453.50" y2="660.50" stroke="#c4c4c4" stroke-width="1.0" />
<line x1="371.30" y1="660.50" x2="375.70" y2="660.50" stroke="#c4c4c4" stroke-width="1.0" />
<line x1="294.50" y1="664.50" x2="296.70" y2="664.50" stroke="#c4c4c4" stroke-width="1.0" />
<line x1="451.30" y1="664.50" x2="453.50" y2="664.50" stroke="#c4c4c4" stroke-width="1.0" />
<line x1="371.30" y1="664.50" x2="375.70" y2="664.50" stroke="#c4c4c4" stroke-width="1.0" />
<line x1="294.50" y1="668.50" x2="296.70" y2="668.50" stroke="#c4c4c4" stroke-width="1.0" />
<line x1="451.30" y1="668.50" x2="453.50" y2="668.50" stroke="#c4c4c4" stroke-width="1.0" />
<line x1="371.30" y1="668.50" x2="375.70" y2="668.50" stroke="#c4c4c4" stroke-width="1.0" />
<line x1="294.50" y1="672.50" x2="296.70" y2="672.50" stroke="#c4c4c4" stroke-width="1.0" />
<line x1="451.30" y1="672.50" x2="453.50" y2="672.50" stroke="#c4c4c4" stroke-width="1.0" />
<line x1="371.30" y1="672.50" x2="375.70" y2="672.50" stroke="#c4c4c4" stroke-width="1.0" />
<line x1="294.50" y1="676.50" x2="296.70" y2="676.50" stroke="#c4c4c4" stroke-width="1.0" />
<line x1="451.30" y1="676.50" x2="453.50" y2="676.50" stroke="#c4c4c4" stroke-width="1.0" />
<line x1="371.30" y1="676.50" x2="375.70" y2="676.50" stroke="#c4c4c4" stroke-width="1.0" />
<line x1="294.50" y1="680.50" x2="296.70" y2="680.50" stroke="#c4c4c4" stroke-width="1.0" />
<line x1="451.30" y1="680.50" x2="453.50" y2="680.50" stroke="#c4c4c4" stroke-width="1.0" />
<line x1="371.30" y1="680.50" x2="375.70" y2="680.50" stroke="#c4c4c4" stroke-width="1.0" />
<line x1="294.50" y1="684.50" x2="296.70" y2="684.50" stroke="#c4c4c4" stroke-width="1.0" />
<line x1="451.30" y1="684.50" x2="453.50" y2="684.50" stroke="#c4c4c4" stroke-width="1.0" />
<line x1="371.30" y1="684.50" x2="375.70" y2="684.50" stroke="#c4c4c4" stroke-width="1.0" />
<line x1="294.50" y1="688.50" x2="296.70" y2="688.50" stroke="#c4c4c4" stroke-width="1.0" />
<line x1="451.30" y1="688.50" x2="453.50" y2="688.50" stroke="#c4c4c4" stroke-width="1.0" />
<line x1="371.30" y1="688.50" x2="375.70" y2="688.50" stroke="#c4c4c4" stroke-width="1.0" />
<line x1="294.50" y1="692.50" x2="296.70" y2="692.50" stroke="#c4c4c4" stroke-width="1.0" />
<line x1="451.30" y1="692.50" x2="453.50" y2="692.50" stroke="#c4c4c4" stroke-width="1.0" />
<line x1="371.30" y1="692.50" x2="375.70" y2="692.50" stroke="#c4c4c4" stroke-width="1.0" />
<line x1="294.50" y1="696.50" x2="296.70" y2="696.50" stroke="#c4c4c4" stroke-width="1.0" />
<line x1="451.30" y1="696.50" x2="453.50" y2="696.50" stroke="#c4c4c4" stroke-width="1.0" />
<line x1="371.30" y1="696.50" x2="375.70" y2="696.50" stroke="#c4c4c4" stroke-width="1.0" />
<line x1="294.50" y1="700.50" x2="296.70" y2="700.50" stroke="#c4c4c4" stroke-width="1.0" />
<line x1="451.30" y1="700.50" x2="453.50" y2="700.50" stroke="#c4c4c4" stroke-width="1.0" />
<line x1="371.30" y1="700.50" x2="375.70" y2="700.50" stroke="#c4c4c4" stroke-width="1.0" />
<line x1="294.50" y1="704.50" x2="296.70" y2="704.50" stroke="#c4c4c4" stroke-width="1.0" />
<line x1="451.30" y1="704.50" x2="453.50" y2="704.50" stroke="#c4c4c4" stroke-width="1.0" />
<line x1="371.30" y1="704.50" x2="375.70" y2="704.50" stroke="#c4c4c4" stroke-width="1.0" />
<line x1="294.50" y1="708.50" x2="296.70" y2="708.50" stroke="#c4c4c4" stroke-width="1.0" />
<line x1="451.30" y1="708.50" x2="453.50" y2="708.50" stroke="#c4c4c4" stroke-width="1.0" />
<line x1="371.30" y1="708.50" x2="375.70" y2="708.50" stroke="#c4c4c4" stroke-width="1.0" />
<line x1="294.50" y1="712.50" x2="296.70" y2="712.50" stroke="#c4c4c4" stroke-width="1.0" />
<line x1="451.30" y1="712.50" x2="453.50" y2="712.50" stroke="#c4c4c4" stroke-width="1.0" />
<line x1="371.30" y1="712.50" x2="375.70" y2="712.50" stroke="#c4c4c4" stroke-width="1.0" />
<line x1="294.50" y1="716.50" x2="296.70" y2="716.50" stroke="#c4c4c4" stroke-width="1.0" />
<line x1="451.30" y1="716.50" x2="453.50" y2="716.50" stroke="#c4c4c4" stroke-width="1.0" />
<line x1="371.30" y1="716.50" x2="375.70" y2="716.50" stroke="#c4c4c4" stroke-width="1.0" />
<line x1="294.50" y1="720.50" x2="296.70" y2="720.50" stroke="#c4c4c4" stroke-width="1.0" />
<line x1="451.30" y1="720.50" x2="453.50" y2="720.50" stroke="#c4c4c4" stroke-width="1.0" />
<line x1="371.30" y1="720.50" x2="375.70" y2="720.50" stroke="#c4c4c4" stroke-width="1.0" />
<line x1="294.50" y1="724.50" x2="296.70" y2="724.50" stroke="#c4c4c4" stroke-width="1.0" />
<line x1="451.30" y1="724.50" x2="453.50" y2="724.50" stroke="#c4c4c4" stroke-width="1.0" />
<line x1="371.30" y1="724.50" x2="375.70" y2="724.50" stroke="#c4c4c4" stroke-width="1.0" />
<line x1="294.50" y1="728.50" x2="296.70" y2="728.50" stroke="#c4c4c4" stroke-width="1.0" />
<line x1="451.30" y1="728.50" x2="453.50" y2="728.50" stroke="#c4c4c4" stroke-width="1.0" />
<line x1="371.30" y1="728.50" x2="375.70" y2="728.50" stroke="#c4c4c4" stroke-width="1.0" />
<line x1="294.50" y1="732.50" x2="296.70" y2="732.50" stroke="#c4c4c4" stroke-width="1.0" />
<line x1="451.30" y1="732.50" x2="453.50" y2="732.50" stroke="#c4c4c4" stroke-width="1.0" />
<line x1="371.30" y1="732.50" x2="375.70" y2="732.50" stroke="#c4c4c4" stroke-width="1.0" />
<line x1="294.50" y1="736.50" x2="296.70" y2="736.50" stroke="#c4c4c4" stroke-width="1.0" />
<line x1="451.30" y1="736.50" x2="453.50" y2="736.50" stroke="#c4c4c4" stroke-width="1.0" />
<line x1="371.30" y1="736.50" x2="375.70" y2="736.50" stroke="#c4c4c4" stroke-width="1.0" />
<line x1="294.50" y1="740.50" x2="296.70" y2="740.50" stroke="#c4c4c4" stroke-width="1.0" />
<line x1="451.30" y1="740.50" x2="453.50" y2="740.50" stroke="#c4c4c4" stroke-width="1.0" />
<line x1="371.30" y1="740.50" x2="375.70" y2="740.50" stroke="#c4c4c4" stroke-width="1.0" />
<line x1="294.50" y1="744.50" x2="296.70" y2="744.50" stroke="#c4c4c4" stroke-width="1.0" />
<line x1="451.30" y1="744.50" x2="453.50" y2="744.50" stroke="#c4c4c4" stroke-width="1.0" />
<line x1="371.30" y1="744.50" x2="375.70" y2="744.50" stroke="#c4c4c4" stroke-width="1.0" />
<line x1="294.50" y1="748.50" x2="296.70" y2="748.50" stroke="#c4c4c4" stroke-width="1.0" />
<line x1="451.30" y1="748.50" x2="453.50" y2="748.50" stroke="#c4c4c4" stroke-width="1.0" />
<line x1="371.30" y1="748.50" x2="375.70" y2="748.50" stroke="#c4c4c4" stroke-width="1.0" />
<line x1="294.50" y1="752.50" x2="296.70" y2="752.50" stroke="#c4c4c4" stroke-width="1.0" />
<line x1="451.30" y1="752.50" x2="453.50" y2="752.50" stroke="#c4c4c4" stroke-width="1.0" />
<line x1="371.30" y1="752.50" x2="375.70" y2="752.50" stroke="#c4c4c4" stroke-width="1.0" />
<line x1="294.50" y1="756.50" x2="296.70" y2="756.50" stroke="#c4c4c4" stroke-width="1.0" />
<line x1="451.30" y1="756.50" x2="453.50" y2="756.50" stroke="#c4c4c4" stroke-width="1.0" />
<line x1="371.30" y1="756.50" x2="375.70" y2="756.50" stroke="#c4c4c4" stroke-width="1.0" />
<line x1="294.50" y1="760.50" x2="296.70" y2="760.50" stroke="#c4c4c4" stroke-width="1.0" />
<line x1="451.30" y1="760.50" x2="453.50" y2="760.50" stroke="#c4c4c4" stroke-width="1.0" />
<line x1="371.30" y1="760.50" x2="375.70" y2="760.50" stroke="#c4c4c4" stroke-width="1.0" />
<line x1="294.50" y1="764.50" x2="296.70" y2="764.50" stroke="#c4c4c4" stroke-width="1.0" />
<line x1="451.30" y1="764.50" x2="453.50" y2="764.50" stroke="#c4c4c4" stroke-width="1.0" />
<line x1="371.30" y1="764.50" x2="375.70" y2="764.50" stroke="#c4c4c4" stroke-width="1.0" />
<line x1="294.50" y1="768.50" x2="296.70" y2="768.50" stroke="#c4c4c4" stroke-width="1.0" />
<line x1="451.30" y1="768.50" x2="453.50" y2="768.50" stroke="#c4c4c4" stroke-width="1.0" />
<line x1="371.30" y1="768.50" x2="375.70" y2="768.50" stroke="#c4c4c4" stroke-width="1.0" />
<circle cx="373.8" cy="693.5" r="47" fill="none" stroke="#e0d860" stroke-width="1.2"/>
<rect x="66.70" y="778.20" width="158.90" height="28.80" fill="#f6ef00" />
<path d="M74.3 790 L79.1 786.2 L79.1 801.3" fill="none" stroke="#111" stroke-width="2.1"/>
<text x="0" y="0" transform="translate(85.09 801.07) scale(0.7322 1)" fill="#111" style="font-family:'Liberation Sans';font-size:20.57px;font-weight:normal;letter-spacing:1.5px;" stroke="#111" stroke-width="0.9" stroke-linejoin="round" >DC</text>
<path d="M203.7 792.6 L207.8 789.6 L207.8 801.5 M210.9 789.4 L216.2 801.1 L221.8 789.4" fill="none" stroke="#111" stroke-width="1.7"/>
<rect x="230.30" y="778.20" width="158.90" height="28.80" fill="#12e012" />
<text x="0" y="0" transform="translate(234.79 800.67) scale(0.9497 1)" fill="#0a160a" style="font-family:'Liberation Sans';font-size:23.91px;font-weight:normal;" stroke="#0a160a" stroke-width="0.9" stroke-linejoin="round" >2</text>
<text x="0" y="0" transform="translate(249.53 800.67) scale(0.7759 1)" fill="#0a160a" style="font-family:'Liberation Sans';font-size:19.11px;font-weight:normal;letter-spacing:1.5px;" stroke="#0a160a" stroke-width="0.9" stroke-linejoin="round" >DC</text>
<path d="M368.4 792.6 L372.5 789.6 L372.5 801.5 M375.6 789.4 L380.9 801.1 L386.5 789.4" fill="none" stroke="#0a160a" stroke-width="1.7"/>
<rect x="394.50" y="777.80" width="159.70" height="29.70" fill="#b0b0ac" />
<text x="0" y="0" transform="translate(399.10 801.25) scale(0.9850 1)" fill="#111" style="font-family:'Liberation Sans';font-size:24.13px;font-weight:normal;" stroke="#111" stroke-width="1.0" stroke-linejoin="round" >G</text>
<path d="M428.8 788.8 C 431 780.5, 439 779.5, 442 785 S 452 792.5, 454.5 783.8" fill="none" stroke="#111" stroke-width="2"/>
<text x="0" y="0" transform="translate(475.39 790.65) scale(1.0125 1)" fill="#111" style="font-family:'Liberation Sans';font-size:12.79px;font-weight:bold;letter-spacing:1.2px;" stroke="#111" stroke-width="0.6" stroke-linejoin="round" >1.00KHz</text>
<text x="0" y="0" transform="translate(427.49 803.45) scale(0.9311 1)" fill="#111" style="font-family:'Liberation Sans';font-size:13.52px;font-weight:bold;letter-spacing:1.5px;" stroke="#111" stroke-width="0.6" stroke-linejoin="round" >1.50Vpp</text>
<text x="0" y="0" transform="translate(494.79 803.45) scale(0.9082 1)" fill="#111" style="font-family:'Liberation Sans';font-size:13.52px;font-weight:bold;letter-spacing:1.5px;" stroke="#111" stroke-width="0.6" stroke-linejoin="round" >0mv</text>
<g transform="translate(568 796.7) skewX(-14) translate(-568 -796.7)">
<path d="M563 790.0 L573.8 790.0 L573.8 803.5 L563 803.5 Q558.3 803.5 558.3 796.7 Q558.3 790.0 563 790.0Z" fill="#2a62e4"/>
<rect x="573.00" y="792.20" width="6.20" height="9.80" fill="#f0f0f0" />
<rect x="575.10" y="793.70" width="2.00" height="2.20" fill="#000" />
<rect x="575.10" y="797.80" width="2.00" height="2.20" fill="#000" />
</g></svg>
</body></html>
